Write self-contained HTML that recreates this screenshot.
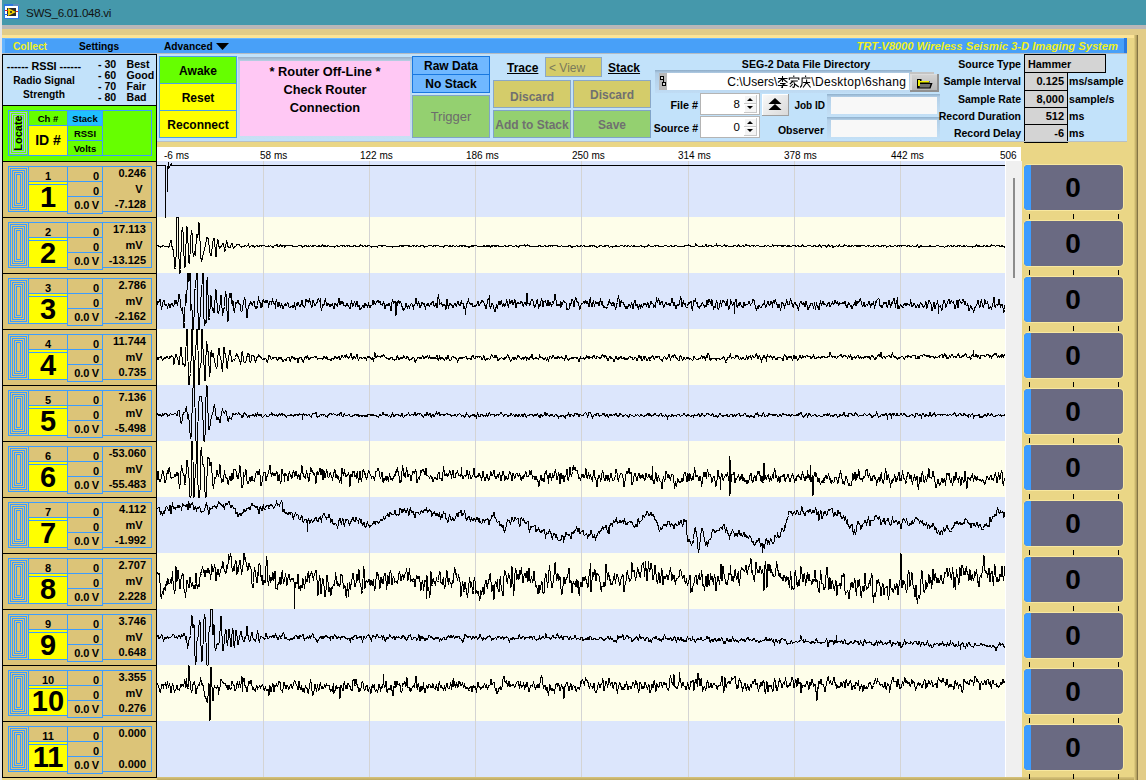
<!DOCTYPE html><html><head><meta charset="utf-8"><style>
html,body{margin:0;padding:0;}
body{width:1146px;height:780px;position:relative;overflow:hidden;font-family:"Liberation Sans", sans-serif;}
body>div,body>svg{position:absolute;}
</style></head><body>
<div style="left:0px;top:0px;width:1146px;height:780px;background:#ead686;"></div>
<div style="left:0px;top:0px;width:2px;height:780px;background:#e6e6e6;"></div>
<div style="left:2px;top:0px;width:1144px;height:25px;background:#4598ab;"></div>
<div style="left:26px;top:2px;width:200px;height:21px;line-height:21px;font-size:11.6px;font-weight:normal;color:#111;text-align:left;white-space:nowrap;letter-spacing:-0.3px;">SWS_6.01.048.vi</div>
<svg style="left:4px;top:4px" width="15" height="15"><rect x="0.5" y="0.5" width="14" height="14" fill="#fff" stroke="#2a78e4"/><rect x="0" y="0" width="15" height="2" fill="#2a78e4"/><path d="M9.5 1h1 M11.5 1h1 M13.5 1h1" stroke="#ffd040"/><rect x="3" y="4" width="9" height="8" fill="#2a2a2a"/><path d="M4 4 L12 8 L4 12 Z" fill="#f0d000"/><circle cx="7" cy="8" r="1" fill="#222"/><path d="M1 6.5 H4 M12 7.5 H14" stroke="#e02020"/><path d="M1 10.5 H4" stroke="#2060e0"/></svg>
<div style="left:2px;top:25px;width:1144px;height:4px;background:#b9b7b8;"></div>
<div style="left:2px;top:29px;width:1144px;height:6px;background:#e2cc88;"></div>
<div style="left:2px;top:35px;width:1132px;height:3px;background:#fce496;"></div>
<div style="left:1134px;top:35px;width:1px;height:745px;background:#dcc87c;"></div>
<div style="left:1135px;top:35px;width:1px;height:745px;background:#c8b46c;"></div>
<div style="left:1136px;top:35px;width:1px;height:745px;background:#b4a060;"></div>
<div style="left:1137px;top:35px;width:1px;height:745px;background:#847444;"></div>
<div style="left:1138px;top:29px;width:8px;height:751px;background:#e2cc88;"></div>
<div style="left:2px;top:38px;width:1125px;height:15px;background:#48a0f8;"></div>
<div style="left:2px;top:38px;width:1125px;height:1px;background:#6cb8ff;"></div>
<div style="left:2px;top:38px;width:3px;height:15px;background:#64b4ff;"></div>
<div style="left:1124px;top:38px;width:3px;height:15px;background:#2a7ae2;"></div>
<div style="left:13px;top:39px;width:60px;height:15px;line-height:15px;font-size:10.2px;font-weight:bold;color:#f0f020;text-align:left;white-space:nowrap;">Collect</div>
<div style="left:79px;top:39px;width:60px;height:15px;line-height:15px;font-size:10.2px;font-weight:bold;color:#000;text-align:left;white-space:nowrap;">Settings</div>
<div style="left:164px;top:39px;width:60px;height:15px;line-height:15px;font-size:10.2px;font-weight:bold;color:#000;text-align:left;white-space:nowrap;">Advanced</div>
<svg style="left:216px;top:43px" width="14" height="8"><path d="M0 0 H13 L6.5 7 Z" fill="#000"/></svg>
<div style="left:700px;top:39px;width:418px;height:15px;line-height:15px;font-size:11.2px;font-weight:bold;color:#f0f020;text-align:right;white-space:nowrap;font-style:italic;">TRT-V8000 Wireless Seismic 3-D Imaging System</div>
<div style="left:157px;top:53px;width:970px;height:88px;background:#c2e2fa;"></div>
<div style="left:157px;top:53px;width:970px;height:1px;background:#b4bcc4;"></div>
<div style="left:2px;top:53px;width:155px;height:1px;background:#b4bcc4;"></div>
<div style="left:2px;top:54px;width:155px;height:107px;background:#000;"></div>
<div style="left:3px;top:55px;width:153px;height:50px;background:#c2e2fa;"></div>
<div style="left:3px;top:106px;width:153px;height:55px;background:#66ff00;"></div>
<div style="left:-6px;top:60px;width:100px;height:13px;line-height:13px;font-size:10.8px;font-weight:bold;color:#000;text-align:center;white-space:nowrap;">------ RSSI ------</div>
<div style="left:-6px;top:74px;width:100px;height:13px;line-height:13px;font-size:10.2px;font-weight:bold;color:#000;text-align:center;white-space:nowrap;">Radio Signal</div>
<div style="left:-6px;top:88px;width:100px;height:13px;line-height:13px;font-size:10.2px;font-weight:bold;color:#000;text-align:center;white-space:nowrap;">Strength</div>
<div style="left:98px;top:58px;width:30px;height:12px;line-height:12px;font-size:10.6px;font-weight:bold;color:#000;text-align:left;white-space:nowrap;">- 30</div>
<div style="left:126.5px;top:58px;width:30px;height:12px;line-height:12px;font-size:10.6px;font-weight:bold;color:#000;text-align:left;white-space:nowrap;">Best</div>
<div style="left:98px;top:69px;width:30px;height:12px;line-height:12px;font-size:10.6px;font-weight:bold;color:#000;text-align:left;white-space:nowrap;">- 60</div>
<div style="left:126.5px;top:69px;width:30px;height:12px;line-height:12px;font-size:10.6px;font-weight:bold;color:#000;text-align:left;white-space:nowrap;">Good</div>
<div style="left:98px;top:80px;width:30px;height:12px;line-height:12px;font-size:10.6px;font-weight:bold;color:#000;text-align:left;white-space:nowrap;">- 70</div>
<div style="left:126.5px;top:80px;width:30px;height:12px;line-height:12px;font-size:10.6px;font-weight:bold;color:#000;text-align:left;white-space:nowrap;">Fair</div>
<div style="left:98px;top:91px;width:30px;height:12px;line-height:12px;font-size:10.6px;font-weight:bold;color:#000;text-align:left;white-space:nowrap;">- 80</div>
<div style="left:126.5px;top:91px;width:30px;height:12px;line-height:12px;font-size:10.6px;font-weight:bold;color:#000;text-align:left;white-space:nowrap;">Bad</div>
<div style="left:8px;top:110px;width:144px;height:46px;background:transparent;box-sizing:border-box;border:1px solid #3c9cff;"></div>
<div style="left:8px;top:110px;width:21px;height:46px;background:#66ff00;box-sizing:border-box;border:1px solid #3c9cff;"></div>
<div style="left:10px;top:112px;width:17px;height:42px;background:transparent;box-sizing:border-box;border:1px solid #a4c4e4;"></div>
<div style="left:12px;top:114px;width:13px;height:38px;background:transparent;box-sizing:border-box;border:1px solid #a4c4e4;"></div>
<div style="left:14px;top:116px;width:9px;height:34px;background:transparent;box-sizing:border-box;border:1px solid #a4c4e4;"></div>
<div style="left:-2px;top:124.5px;width:40px;height:16px;line-height:16px;font-size:11px;font-weight:bold;color:#000;text-align:center;white-space:nowrap;transform:rotate(-90deg);">Locate</div>
<div style="left:28px;top:110px;width:40px;height:16px;background:#66ff00;box-sizing:border-box;border:1px solid #3c9cff;"></div>
<div style="left:28px;top:111px;width:40px;height:16px;line-height:16px;font-size:9.5px;font-weight:bold;color:#000;text-align:center;white-space:nowrap;">Ch #</div>
<div style="left:28px;top:125px;width:40px;height:31px;background:#ffff00;box-sizing:border-box;border:1px solid #3c9cff;"></div>
<div style="left:28px;top:125px;width:40px;height:31px;line-height:31px;font-size:14px;font-weight:bold;color:#000;text-align:center;white-space:nowrap;">ID #</div>
<div style="left:67px;top:110px;width:36px;height:16px;background:#20c0ff;box-sizing:border-box;border:1px solid #3c9cff;"></div>
<div style="left:67px;top:111px;width:36px;height:16px;line-height:16px;font-size:9.5px;font-weight:bold;color:#000;text-align:center;white-space:nowrap;">Stack</div>
<div style="left:67px;top:125px;width:36px;height:16px;background:#66ff00;box-sizing:border-box;border:1px solid #3c9cff;"></div>
<div style="left:67px;top:126px;width:36px;height:16px;line-height:16px;font-size:9.5px;font-weight:bold;color:#000;text-align:center;white-space:nowrap;">RSSI</div>
<div style="left:67px;top:140px;width:36px;height:16px;background:#66ff00;box-sizing:border-box;border:1px solid #3c9cff;"></div>
<div style="left:67px;top:141px;width:36px;height:16px;line-height:16px;font-size:9.5px;font-weight:bold;color:#000;text-align:center;white-space:nowrap;">Volts</div>
<div style="left:159px;top:56px;width:78px;height:28px;background:#66ff00;box-sizing:border-box;border:1px solid #4aa0e8;"></div>
<div style="left:159px;top:57px;width:78px;height:28px;line-height:28px;font-size:12px;font-weight:bold;color:#000;text-align:center;white-space:nowrap;">Awake</div>
<div style="left:159px;top:83px;width:78px;height:28px;background:#ffff00;box-sizing:border-box;border:1px solid #4aa0e8;"></div>
<div style="left:159px;top:84px;width:78px;height:28px;line-height:28px;font-size:12px;font-weight:bold;color:#000;text-align:center;white-space:nowrap;">Reset</div>
<div style="left:159px;top:110px;width:78px;height:28px;background:#ffff00;box-sizing:border-box;border:1px solid #4aa0e8;"></div>
<div style="left:159px;top:111px;width:78px;height:28px;line-height:28px;font-size:12px;font-weight:bold;color:#000;text-align:center;white-space:nowrap;">Reconnect</div>
<div style="left:238px;top:57px;width:174px;height:82px;background:#b4cce0;background:linear-gradient(to bottom,#98b0c8 0,#b8d0e4 4px,#c8e0f4 100%);"></div>
<div style="left:240px;top:61px;width:170px;height:75px;background:#ffc8f4;"></div>
<div style="left:240px;top:63px;width:170px;height:18px;line-height:18px;font-size:12.8px;font-weight:bold;color:#000;text-align:center;white-space:nowrap;">* Router Off-Line *</div>
<div style="left:240px;top:81px;width:170px;height:18px;line-height:18px;font-size:12.8px;font-weight:bold;color:#000;text-align:center;white-space:nowrap;">Check Router</div>
<div style="left:240px;top:99px;width:170px;height:18px;line-height:18px;font-size:12.8px;font-weight:bold;color:#000;text-align:center;white-space:nowrap;">Connection</div>
<div style="left:412px;top:56px;width:78px;height:19px;background:#70b8ff;box-sizing:border-box;border:1px solid #1878e0;"></div>
<div style="left:412px;top:57px;width:78px;height:19px;line-height:19px;font-size:12px;font-weight:bold;color:#000;text-align:center;white-space:nowrap;">Raw Data</div>
<div style="left:412px;top:74px;width:78px;height:19px;background:#70b8ff;box-sizing:border-box;border:1px solid #1878e0;"></div>
<div style="left:412px;top:75px;width:78px;height:19px;line-height:19px;font-size:12px;font-weight:bold;color:#000;text-align:center;white-space:nowrap;">No Stack</div>
<div style="left:412px;top:95px;width:78px;height:43px;background:#94d070;box-sizing:border-box;border:1px solid #80a4c8;"></div>
<div style="left:412px;top:95px;width:78px;height:43px;line-height:43px;font-size:13px;font-weight:normal;color:#6c6c6c;text-align:center;white-space:nowrap;">Trigger</div>
<div style="left:507px;top:59px;width:33px;height:18px;line-height:18px;font-size:12px;font-weight:bold;color:#000;text-align:left;white-space:nowrap;text-decoration:underline;">Trace</div>
<div style="left:545px;top:57px;width:57px;height:20px;background:#d4cc6a;box-sizing:border-box;border:1px solid #8aa8c8;"></div>
<div style="left:549px;top:58px;width:50px;height:20px;line-height:20px;font-size:12px;font-weight:normal;color:#7a7a5a;text-align:left;white-space:nowrap;">&lt; View</div>
<div style="left:608px;top:59px;width:33px;height:18px;line-height:18px;font-size:12px;font-weight:bold;color:#000;text-align:left;white-space:nowrap;text-decoration:underline;">Stack</div>
<div style="left:493px;top:80px;width:78px;height:28px;background:#d4cc6a;box-sizing:border-box;border:1px solid #8aa8c8;"></div>
<div style="left:493px;top:83px;width:78px;height:28px;line-height:28px;font-size:12px;font-weight:bold;color:#707070;text-align:center;white-space:nowrap;">Discard</div>
<div style="left:573px;top:80px;width:78px;height:28px;background:#d4cc6a;box-sizing:border-box;border:1px solid #8aa8c8;"></div>
<div style="left:573px;top:81px;width:78px;height:28px;line-height:28px;font-size:12px;font-weight:bold;color:#707070;text-align:center;white-space:nowrap;">Discard</div>
<div style="left:493px;top:110px;width:78px;height:28px;background:#94d070;box-sizing:border-box;border:1px solid #80a4c8;"></div>
<div style="left:493px;top:111px;width:78px;height:28px;line-height:28px;font-size:12px;font-weight:bold;color:#707070;text-align:center;white-space:nowrap;">Add to Stack</div>
<div style="left:573px;top:110px;width:78px;height:28px;background:#94d070;box-sizing:border-box;border:1px solid #80a4c8;"></div>
<div style="left:573px;top:111px;width:78px;height:28px;line-height:28px;font-size:12px;font-weight:bold;color:#707070;text-align:center;white-space:nowrap;">Save</div>
<div style="left:706px;top:57px;width:200px;height:14px;line-height:14px;font-size:10.6px;font-weight:bold;color:#000;text-align:center;white-space:nowrap;">SEG-2 Data File Directory</div>
<div style="left:655px;top:70px;width:257px;height:23px;background:#a8c4dc;background:linear-gradient(to bottom,#8eacc8 0,#b0cce4 3px,#c0dcf4 100%);"></div>
<div style="left:659px;top:73px;width:8px;height:17px;background:#b8b8b8;"></div>
<svg style="left:659px;top:73px" width="8" height="17"><rect x="1.5" y="3.5" width="3" height="3" fill="#d8d8d8" stroke="#000"/><path d="M4.5 6.5 V9.5" stroke="#000"/><rect x="3.5" y="9.5" width="3" height="3" fill="#d8d8d8" stroke="#000"/></svg>
<div style="left:667px;top:73px;width:242px;height:17px;background:#ffffff;"></div>
<div style="left:667px;top:74px;width:239px;height:17px;line-height:17px;font-size:12px;font-weight:normal;color:#000;text-align:right;white-space:nowrap;">C:\Users\<svg width="34" height="13" style="vertical-align:-2px"><g fill="none" stroke="#000" stroke-width="1.05"><path d="M1 3.5 H10.5 M5.5 1 V7 M5 4 L1 7.5 M6 4 L10.5 7.5 M3 8.5 H8.5 L5.5 10 V12.5 L4 12 M1 10.5 H10.5"/><path transform="translate(11.3,0)" d="M5.5 0.5 V2 M1 5 V3 H10.5 V5 M2.5 6 H9.5 M5 6 L1.5 9 M5.5 7 Q7 10 5.5 12.5 L4 12 M4.5 9 L1.5 12 M6.5 9 L10.5 12"/><path transform="translate(22.6,0)" d="M6 0.5 V2 M2 3 H11 M2.5 3 V8 Q2.5 11 0.5 12.5 M3.5 7.5 H10.5 M7 4.5 V7.5 L3.5 12.5 M7 7.5 L11 12.5"/></g></svg><span style="letter-spacing:0.33px">\Desktop\6shan</span>g</div>
<div style="left:910px;top:72px;width:24px;height:3px;background:#c4c4c4;"></div>
<div style="left:910px;top:74px;width:29px;height:18px;background:#c0c0c0;background:linear-gradient(to bottom,#d4d4d4,#b4b4b4);box-shadow:inset -2px -2px 0 #909090, inset 2px 1px 0 #dcdcdc;"></div>
<svg style="left:917px;top:79px" width="17" height="11"><path d="M0 0 h4.5 v2 h8 v2 h3 l-2 5.5 H0 Z" fill="#000"/><path d="M1 1 h2 v6 h-2 Z M1 2 h11 v1.5 h-11 Z" fill="#f0f000"/><path d="M3 5 H13.5 L12.5 8.5 H2.5 Z" fill="#707070"/></svg>
<div style="left:670px;top:98px;width:28px;height:14px;line-height:14px;font-size:10.8px;font-weight:bold;color:#000;text-align:right;white-space:nowrap;">File #</div>
<div style="left:650px;top:120.5px;width:48px;height:14px;line-height:14px;font-size:10.5px;font-weight:bold;color:#000;text-align:right;white-space:nowrap;">Source #</div>
<div style="left:700px;top:93px;width:60px;height:22px;background:#ffffff;box-sizing:border-box;border:1px solid #b4b4b4;"></div>
<div style="left:700px;top:94px;width:40px;height:21px;line-height:21px;font-size:11.5px;font-weight:normal;color:#000;text-align:right;white-space:nowrap;">8</div>
<div style="left:744px;top:95px;width:13px;height:9px;background:#f4f4f4;box-shadow:inset -1px -1px 0 #c8c8c8, inset 1px 1px 0 #fff;"></div>
<svg style="left:744px;top:95px" width="13" height="9"><path d="M3 6 L6 3 L9 6 Z" fill="#000"/></svg>
<div style="left:744px;top:104px;width:13px;height:9px;background:#f4f4f4;box-shadow:inset -1px -1px 0 #c8c8c8, inset 1px 1px 0 #fff;"></div>
<svg style="left:744px;top:104px" width="13" height="9"><path d="M3 2 L6 5 L9 2 Z" fill="#000"/></svg>
<div style="left:700px;top:116px;width:60px;height:22px;background:#ffffff;box-sizing:border-box;border:1px solid #b4b4b4;"></div>
<div style="left:700px;top:117px;width:40px;height:21px;line-height:21px;font-size:11.5px;font-weight:normal;color:#000;text-align:right;white-space:nowrap;">0</div>
<div style="left:744px;top:118px;width:13px;height:9px;background:#f4f4f4;box-shadow:inset -1px -1px 0 #c8c8c8, inset 1px 1px 0 #fff;"></div>
<svg style="left:744px;top:118px" width="13" height="9"><path d="M3 6 L6 3 L9 6 Z" fill="#000"/></svg>
<div style="left:744px;top:127px;width:13px;height:9px;background:#f4f4f4;box-shadow:inset -1px -1px 0 #c8c8c8, inset 1px 1px 0 #fff;"></div>
<svg style="left:744px;top:127px" width="13" height="9"><path d="M3 2 L6 5 L9 2 Z" fill="#000"/></svg>
<div style="left:762px;top:94px;width:27px;height:22px;background:#e8e8e8;background:linear-gradient(135deg,#fafafa,#d8d8d8);box-shadow:inset -1px -1px 0 #a0a0a0, inset 1px 1px 0 #fff;"></div>
<svg style="left:765px;top:97px" width="20" height="16"><path d="M3.5 7 L10 1 L16.5 7 Z M3.5 13 L10 7 L16.5 13 Z" fill="#000"/></svg>
<div style="left:790px;top:99px;width:35px;height:14px;line-height:14px;font-size:10px;font-weight:bold;color:#000;text-align:right;white-space:nowrap;">Job ID</div>
<div style="left:770px;top:123px;width:54px;height:14px;line-height:14px;font-size:10.5px;font-weight:bold;color:#000;text-align:right;white-space:nowrap;">Observer</div>
<div style="left:827px;top:94px;width:113px;height:22px;background:#a8c4dc;background:linear-gradient(to bottom,#90b0cc 0,#b4d0e8 3px,#c4e0f6 100%);"></div>
<div style="left:831px;top:97px;width:106px;height:17px;background:#f8f8f8;"></div>
<div style="left:827px;top:117px;width:113px;height:22px;background:#a8c4dc;background:linear-gradient(to bottom,#90b0cc 0,#b4d0e8 3px,#c4e0f6 100%);"></div>
<div style="left:831px;top:120px;width:106px;height:17px;background:#f8f8f8;"></div>
<div style="left:900px;top:56px;width:121px;height:16px;line-height:16px;font-size:10.6px;font-weight:bold;color:#000;text-align:right;white-space:nowrap;">Source Type</div>
<div style="left:1024px;top:54px;width:82px;height:19px;background:#d4d4d4;box-sizing:border-box;border:1px solid #000;"></div>
<div style="left:1028px;top:55px;width:78px;height:19px;line-height:19px;font-size:10.8px;font-weight:bold;color:#000;text-align:left;white-space:nowrap;">Hammer</div>
<div style="left:1024px;top:72px;width:44px;height:19px;background:#d4d4d4;box-sizing:border-box;border:1px solid #000;"></div>
<div style="left:900px;top:73px;width:121px;height:17px;line-height:17px;font-size:10.5px;font-weight:bold;color:#000;text-align:right;white-space:nowrap;">Sample Interval</div>
<div style="left:1024px;top:73px;width:40px;height:17px;line-height:17px;font-size:11px;font-weight:bold;color:#000;text-align:right;white-space:nowrap;">0.125</div>
<div style="left:1069px;top:73px;width:60px;height:17px;line-height:17px;font-size:10.6px;font-weight:bold;color:#000;text-align:left;white-space:nowrap;">ms/sample</div>
<div style="left:1024px;top:90px;width:44px;height:19px;background:#d4d4d4;box-sizing:border-box;border:1px solid #000;"></div>
<div style="left:900px;top:91px;width:121px;height:17px;line-height:17px;font-size:10.5px;font-weight:bold;color:#000;text-align:right;white-space:nowrap;">Sample Rate</div>
<div style="left:1024px;top:91px;width:40px;height:17px;line-height:17px;font-size:11px;font-weight:bold;color:#000;text-align:right;white-space:nowrap;">8,000</div>
<div style="left:1069px;top:91px;width:60px;height:17px;line-height:17px;font-size:10.6px;font-weight:bold;color:#000;text-align:left;white-space:nowrap;">sample/s</div>
<div style="left:1024px;top:107px;width:44px;height:19px;background:#d4d4d4;box-sizing:border-box;border:1px solid #000;"></div>
<div style="left:900px;top:108px;width:121px;height:17px;line-height:17px;font-size:10.5px;font-weight:bold;color:#000;text-align:right;white-space:nowrap;">Record Duration</div>
<div style="left:1024px;top:108px;width:40px;height:17px;line-height:17px;font-size:11px;font-weight:bold;color:#000;text-align:right;white-space:nowrap;">512</div>
<div style="left:1069px;top:108px;width:60px;height:17px;line-height:17px;font-size:10.6px;font-weight:bold;color:#000;text-align:left;white-space:nowrap;">ms</div>
<div style="left:1024px;top:124px;width:44px;height:19px;background:#d4d4d4;box-sizing:border-box;border:1px solid #000;"></div>
<div style="left:900px;top:125px;width:121px;height:17px;line-height:17px;font-size:10.5px;font-weight:bold;color:#000;text-align:right;white-space:nowrap;">Record Delay</div>
<div style="left:1024px;top:125px;width:40px;height:17px;line-height:17px;font-size:11px;font-weight:bold;color:#000;text-align:right;white-space:nowrap;">-6</div>
<div style="left:1069px;top:125px;width:60px;height:17px;line-height:17px;font-size:10.6px;font-weight:bold;color:#000;text-align:left;white-space:nowrap;">ms</div>
<div style="left:157px;top:141px;width:970px;height:1px;background:#b8c0c4;"></div>
<div style="left:157px;top:147px;width:864px;height:14px;background:#ffffff;"></div>
<div style="left:157px;top:161px;width:848px;height:56px;background:#dce6fc;"></div>
<div style="left:157px;top:217px;width:848px;height:56px;background:#fefeea;"></div>
<div style="left:157px;top:273px;width:848px;height:56px;background:#dce6fc;"></div>
<div style="left:157px;top:329px;width:848px;height:56px;background:#fefeea;"></div>
<div style="left:157px;top:385px;width:848px;height:56px;background:#dce6fc;"></div>
<div style="left:157px;top:441px;width:848px;height:56px;background:#fefeea;"></div>
<div style="left:157px;top:497px;width:848px;height:56px;background:#dce6fc;"></div>
<div style="left:157px;top:553px;width:848px;height:56px;background:#fefeea;"></div>
<div style="left:157px;top:609px;width:848px;height:56px;background:#dce6fc;"></div>
<div style="left:157px;top:665px;width:848px;height:56px;background:#fefeea;"></div>
<div style="left:157px;top:721px;width:848px;height:56px;background:#dce6fc;"></div>
<div style="left:1005px;top:161px;width:17px;height:618px;background:#f0f0f0;border-left:1px solid #fff;box-sizing:border-box;"></div>
<div style="left:1013px;top:178px;width:2px;height:100px;background:#8c8c8c;"></div>
<div style="left:263px;top:161px;width:1px;height:616px;background:#d4d4d4;"></div>
<div style="left:369px;top:161px;width:1px;height:616px;background:#d4d4d4;"></div>
<div style="left:475px;top:161px;width:1px;height:616px;background:#d4d4d4;"></div>
<div style="left:581px;top:161px;width:1px;height:616px;background:#d4d4d4;"></div>
<div style="left:688px;top:161px;width:1px;height:616px;background:#d4d4d4;"></div>
<div style="left:794px;top:161px;width:1px;height:616px;background:#d4d4d4;"></div>
<div style="left:900px;top:161px;width:1px;height:616px;background:#d4d4d4;"></div>
<div style="left:164px;top:149px;width:60px;height:13px;line-height:13px;font-size:10px;font-weight:normal;color:#000;text-align:left;white-space:nowrap;">-6 ms</div>
<div style="left:260px;top:149px;width:60px;height:13px;line-height:13px;font-size:10px;font-weight:normal;color:#000;text-align:left;white-space:nowrap;">58 ms</div>
<div style="left:360px;top:149px;width:60px;height:13px;line-height:13px;font-size:10px;font-weight:normal;color:#000;text-align:left;white-space:nowrap;">122 ms</div>
<div style="left:466px;top:149px;width:60px;height:13px;line-height:13px;font-size:10px;font-weight:normal;color:#000;text-align:left;white-space:nowrap;">186 ms</div>
<div style="left:572px;top:149px;width:60px;height:13px;line-height:13px;font-size:10px;font-weight:normal;color:#000;text-align:left;white-space:nowrap;">250 ms</div>
<div style="left:678px;top:149px;width:60px;height:13px;line-height:13px;font-size:10px;font-weight:normal;color:#000;text-align:left;white-space:nowrap;">314 ms</div>
<div style="left:784px;top:149px;width:60px;height:13px;line-height:13px;font-size:10px;font-weight:normal;color:#000;text-align:left;white-space:nowrap;">378 ms</div>
<div style="left:891px;top:149px;width:60px;height:13px;line-height:13px;font-size:10px;font-weight:normal;color:#000;text-align:left;white-space:nowrap;">442 ms</div>
<div style="left:1000px;top:149px;width:60px;height:13px;line-height:13px;font-size:10px;font-weight:normal;color:#000;text-align:left;white-space:nowrap;">506</div>
<svg style="left:0;top:0" width="1146" height="780"><path d="M157 165.5 H165.5 V217.5 M167.5 192 V166 M168.5 162 V168.5 L171.5 163.5 L172 165.5 H1005 M178.5 164.5 V165.5" fill="none" stroke="#000" stroke-width="1" shape-rendering="crispEdges"/><path transform="translate(157,0) scale(0.5)" d="M0 492l1-1 1 0 1 0 1 2 1 0 1 0 1 1 1-2 1 0 1 0 1 0 1-1 1 0 1 1 1 0 1 0 1 0 1 0 1 0 1 0 1 1 1-1 1 2 1 0 1-2 1-6 1-6 1 0 1 3 1 10 1 4 1 2 1 4 1 10 1 15 1 9 1-2 1-20 1-37 1-43 1-1 1 0 1 19 1 65 1 28 1 0 1-7 1-34 1-28 1-17 1-6 1 9 1 23 1 26 1 20 1 3 1-18 1-28 1-26 1-10 1 9 1 23 1 25 1 16 1 0 1-16 1-22 1-18 1-9 1 5 1 18 1 21 1 9 1-7 1-5 1 7 1 1 1-21 1-21 1 0 1 7 1-5 1-16 1-9 1 12 1 24 1 23 1 13 1 5 1-2 1-5 1-5 1-4 1-4 1-4 1-4 1-5 1-5 1-6 1-3 1 0 1 2 1 5 1 7 1 9 1 8 1 4 1 1 1-4 1-8 1-8 1-9 1-6 1 0 1 5 1 13 1 15 1 5 1-10 1-16 1-9 1 1 1 7 1 6 1 3 1 0 1-1 1-2 1-1 1-2 1-2 1-1 1 1 1 6 1 7 1 2 1-6 1-9 1-5 1 2 1 5 1 3 1 1 1 0 1 1 1 0 1-1 1-4 1-3 1-1 1 4 1 4 1 2 1 0 1-2 1-1 1-1 1 0 1-2 1-1 1-1 1 0 1 0 1 1 1 2 1 1 1 1 1 1 1 0 1-1 1 0 1 0 1 0 1 0 1 0 1-2 1 0 1 1 1 0 1 0 1-2 1 0 1-2 1 4 1 3 1-1 1-1 1-1 1-1 1 1 1 0 1-1 1 0 1 2 1 1 1 0 1-2 1 0 1-1 1 0 1 1 1 0 1 1 1 0 1-1 1-2 1 0 1 1 1 2 1-1 1-1 1 0 1 0 1 1 1-1 1 1 1 1 1 1 1-1 1 1 1-1 1-1 1-1 1 2 1 0 1-1 1-1 1 1 1 0 1 1 1 2 1 0 1-2 1-1 1-1 1-1 1 1 1 0 1-1 1-1 1 3 1 0 1 1 1 0 1-1 1-1 1-1 1 1 1 1 1 0 1 0 1-1 1 0 1 0 1 3 1-1 1 0 1-2 1 0 1 0 1 0 1 0 1 0 1 0 1 0 1 0 1-1 1 0 1 0 1 1 1 1 1 1 1 0 1 0 1-1 1 0 1 0 1 1 1-1 1 0 1 0 1 0 1-2 1 0 1 0 1 0 1 0 1 1 1 1 1 1 1 1 1-1 1 0 1 0 1-1 1-2 1 0 1 1 1 2 1 1 1-1 1 0 1-1 1 1 1 0 1-1 1-1 1 1 1 1 1 0 1-1 1 1 1-1 1-1 1-1 1 0 1 0 1 2 1 1 1-1 1 0 1 0 1 0 1-1 1 1 1 0 1 0 1 0 1 0 1-1 1-1 1 1 1 1 1 0 1 0 1-1 1 1 1 1 1 0 1 0 1-1 1-1 1 0 1 1 1 1 1 0 1 0 1 1 1-1 1-1 1 0 1 0 1 0 1 1 1 1 1-1 1-1 1 0 1-1 1 0 1 1 1 0 1 0 1 0 1 0 1 0 1-1 1-1 1 0 1 1 1 1 1 0 1-1 1 0 1 1 1 1 1 0 1-1 1-1 1 0 1 1 1 0 1-1 1 0 1 2 1 1 1-1 1-1 1 0 1 1 1 0 1 1 1-1 1-2 1 0 1 0 1 0 1 2 1 0 1-1 1 1 1-1 1 0 1 0 1 0 1-1 1-1 1 1 1 0 1 0 1 1 1 0 1 0 1 0 1-1 1 0 1 1 1 0 1 0 1 0 1 0 1-1 1 0 1-1 1 1 1 1 1 0 1 1 1 1 1-1 1-1 1 0 1 0 1 1 1 0 1 0 1 0 1-1 1 0 1 1 1 1 1-2 1-1 1-1 1 0 1 0 1 0 1 0 1 1 1 2 1-1 1-1 1 0 1-1 1 0 1 0 1 1 1 1 1 0 1 0 1 0 1 0 1 0 1 0 1 0 1 0 1 0 1 0 1 0 1 1 1 1 1 0 1-1 1-1 1 0 1 0 1 0 1 0 1 0 1 0 1 0 1 1 1 0 1 0 1-1 1-1 1 0 1 0 1 1 1 0 1 0 1-1 1 1 1-1 1 0 1 1 1-1 1-1 1 0 1 1 1 0 1 0 1 1 1 1 1-1 1 1 1 0 1-1 1 0 1 0 1-1 1 0 1 1 1 0 1-1 1 1 1 1 1 0 1-1 1-1 1 0 1 1 1 0 1 0 1 1 1 0 1-2 1 0 1 0 1 1 1-1 1 0 1 2 1 0 1 1 1-1 1 0 1 0 1 0 1 0 1-1 1 0 1-1 1 0 1 0 1-1 1 1 1 0 1 0 1 1 1 1 1 0 1-1 1-1 1 0 1 1 1 0 1-1 1 0 1 0 1 0 1-1 1 1 1 1 1 1 1-1 1 0 1 1 1 0 1 1 1-1 1 0 1 1 1-1 1-1 1-1 1 0 1 0 1 0 1 0 1 0 1 1 1 0 1 0 1 0 1-1 1 0 1 2 1 0 1-1 1 0 1-2 1 0 1 2 1 0 1 0 1 0 1 0 1-1 1 1 1 0 1 0 1 1 1 0 1-1 1-1 1 0 1 0 1 0 1 2 1-1 1-1 1 0 1 1 1 0 1-1 1 1 1 0 1 0 1 0 1 0 1 1 1 1 1 1 1 0 1-2 1-1 1 0 1 0 1-1 1 1 1 1 1-1 1-1 1 0 1 0 1 0 1 0 1 0 1 1 1 0 1 1 1 0 1-1 1 0 1 0 1 1 1-1 1 0 1 0 1 0 1 0 1 0 1-1 1 1 1 0 1 0 1 0 1 0 1-1 1 1 1 1 1 0 1-2 1 1 1 2 1 0 1-1 1-1 1-1 1 1 1 0 1-1 1 0 1 2 1 0 1-1 1-1 1 2 1-1 1-1 1 0 1 1 1 1 1-1 1 0 1 1 1 0 1 0 1 0 1 0 1 0 1-1 1 0 1-1 1 0 1 1 1 0 1 0 1 0 1 1 1 0 1-2 1 0 1-1 1 0 1 1 1 0 1 0 1 1 1 1 1 0 1 0 1 0 1-1 1 0 1-1 1 0 1 1 1 0 1 1 1 0 1 1 1 0 1-2 1-1 1 0 1 0 1 0 1 0 1 0 1 0 1 0 1 0 1-1 1 2 1 0 1-1 1 0 1 0 1-1 1 1 1 0 1 0 1 1 1 1 1 0 1-1 1 0 1 0 1 1 1 1 1-1 1-1 1 0 1 0 1 0 1 0 1 0 1 1 1 0 1 0 1-1 1-2 1 0 1 1 1 2 1 1 1-1 1-1 1 1 1 0 1-1 1 0 1-1 1 0 1 1 1 0 1 1 1 0 1 0 1 0 1-1 1-2 1 0 1 1 1 1 1-1 1 0 1 1 1 0 1-1 1 0 1 0 1 0 1 0 1 0 1-1 1 1 1 0 1 1 1 1 1 0 1 0 1-1 1 0 1 0 1 0 1-1 1 1 1 0 1 0 1 1 1 0 1-1 1 0 1 0 1 0 1 0 1 0 1 1 1-1 1 0 1-1 1 0 1 0 1 1 1 0 1 2 1 1 1-2 1 0 1 0 1-1 1 0 1 1 1 0 1-1 1-1 1 0 1 1 1 1 1 0 1 0 1 0 1-1 1 0 1-1 1 0 1 1 1 1 1-1 1-1 1 0 1 1 1 1 1 0 1-1 1 0 1 0 1 0 1 0 1 1 1 0 1-1 1-1 1 1 1 0 1-1 1 0 1 1 1 0 1-1 1 0 1 1 1 1 1 0 1 0 1 1 1 0 1 0 1 0 1-1 1 0 1-1 1-1 1 0 1-1 1 1 1 1 1 1 1 0 1-1 1 0 1 0 1-1 1 1 1 0 1-1 1-1 1 0 1 1 1 2 1 1 1 0 1 0 1-1 1 0 1 0 1 0 1 1 1 0 1-1 1-1 1 0 1 0 1 0 1-1 1 1 1 1 1 0 1-1 1 0 1 0 1 0 1 0 1-1 1 0 1 0 1 1 1-1 1 1 1 1 1 1 1-2 1-2 1 0 1 2 1 1 1 0 1-1 1-1 1 0 1 1 1 1 1 0 1-1 1 0 1-1 1 1 1 1 1 0 1-1 1-1 1 1 1 0 1 1 1-1 1 0 1 1 1 0 1-1 1 0 1 1 1-1 1 0 1-1 1-1 1 1 1 2 1 0 1 0 1 0 1 1 1 0 1-1 1 0 1-1 1 0 1 0 1 0 1-1 1-1 1 1 1 0 1 1 1 1 1-1 1 0 1 0 1 0 1 1 1 0 1-1 1-1 1 0 1 1 1-1 1 0 1-1 1 0 1 1 1 1 1 0 1 0 1 0 1 1 1 0 1-1 1 0 1 0 1 0 1 0 1 0 1-1 1-1 1 0 1 0 1 0 1 2 1 0 1 0 1 0 1 0 1 0 1 0 1-2 1 0 1 2 1 1 1-1 1 0 1 1 1 0 1-1 1-1 1 0 1 0 1 0 1 1 1 1 1 0 1 0 1 0 1 0 1 0 1-1 1 0 1 1 1 0 1-1 1 0 1 1 1 1 1-1 1-2 1 0 1-1 1 0 1 1 1 0 1 0 1-1 1 1 1 0 1 0 1 1 1 0 1 0 1 0 1 0 1 0 1 0 1 0 1 0 1 0 1-3 1 2 1-1 1 1 1 0 1 1 1 0 1 1 1 0 1-1 1 0 1 0 1 0 1 1 1-2 1 1 1 1 1 0 1 0 1-1 1-1 1-2 1 2 1 2 1 0 1-1 1 0 1-1 1 0 1-1 1 0 1 1 1 1 1 1 1 0 1-1 1 0 1 0 1-1 1-1 1 1 1 1 1-3 1 3 1 0 1-1 1 0 1 1 1-1 1 0 1 0 1 1 1 0 1 0 1 0 1 0 1-1 1 0 1-1 1 1 1 1 1 0 1 0 1-1 1 0 1 1 1 0 1 1 1 0 1 1 1-1 1-1 1 0 1 1 1 0 1-1 1 0 1-1 1 0 1 0 1 0 1 1 1 0 1 0 1 0 1-1 1-1 1 1 1 1 1 1 1 0 1 0 1-1 1 0 1-1 1 0 1 0 1 2 1 0 1-1 1-2 1-1 1 1 1 1 1 0 1-1 1 1 1 0 1 1 1 0 1 0 1 0 1-1 1-1 1 1 1 1 1 0 1-1 1 0 1 1 1 0 1 0 1-1 1 0 1 0 1 0 1 0 1 1 1 0 1 0 1 0 1 0 1 1 1 1 1-1 1 0 1 0 1 0 1-1 1-1 1 0 1 1 1 0 1 0 1-1 1 0 1 0 1 1 1 0 1 0 1 0 1 0 1 0 1 0 1-2 1 2 1 0 1-1 1 0 1-1 1 1 1 0 1 0 1 0 1 1 1 0 1-1 1 0 1 0 1-1 1 1 1 0 1 1 1 0 1 0 1-1 1 1 1 0 1-1 1 0 1 0 1 1 1 1 1-1 1 0 1-1 1 1 1 1 1-1 1 1 1 0 1 0 1 0 1-1 1-1 1 0 1-1 1 0 1 1 1 0 1 2 1 0 1-1 1 0 1-1 1 0 1 1 1 1 1 0 1 0 1 0 1 0 1 0 1-2 1-1 1 1 1 1 1 1 1 0 1 0 1 0 1 0 1-1 1 0 1-1 1 0 1 0 1 0 1 0 1 1 1-1 1 1 1 0 1 0 1 0 1 1 1-1 1-1 1-1 1 0 1 2 1 1 1-1 1 0 1 0 1 1 1 0 1-2 1-1 1 1 1 2 1 1 1 0 1-2 1-1 1 0 1 0 1 0 1 0 1 0 1 1 1 1 1 1 1-1 1-1 1-1 1-1 1 1 1 1 1 1 1 0 1-1 1-1 1 0 1 0 1 4 1-2 1 0 1 0 1 0 1 0 1-1 1-1 1 1 1 0 1 1 1 0 1-2 1-1 1 2 1 1 1 0 1 0 1 1 1-1 1-1 1 0 1-1 1-1 1 1 1 0 1-1 1 1 1 1 1 0 1 0 1 0 1-1 1 1 1 0 1 1 1 0 1-1 1-1 1 0 1 1 1 0 1 0 1-1 1 0 1 0 1 0 1 1 1 1 1-2 1 1 1 0 1-1 1 1 1 1 1-1 1-1 1 0 1-1 1 0 1 1 1 0 1 0 1 0 1 1 1 0 1 1 1 0 1-1 1-1 1 0 1 1 1-1 1 0 1 1 1 1 1-1 1 0 1 1 1 0 1 0 1-1 1-1 1 0 1 1 1 1 1-1 1-1 1-1 1 1 1 0 1 1 1 1 1 0 1 0 1 0 1 0 1 0 1-2 1 0 1 0 1 1 1 0 1-1 1 0 1 0 1 1 1 2 1-2 1 1 1 0 1 0 1-1 1-1 1 0 1 2 1 0 1-1 1 0 1 0 1 0 1 0 1 0 1-1 1 0 1 0 1 1 1 0 1 0 1 0 1-1 1 0 1 1 1 0 1-1 1 0 1 1 1 0 1-1 1 0 1 0 1 0 1 0 1 0 1 0 1 0 1 1 1 0 1 1 1-1 1-1 1 0 1 0 1 0 1 2 1 0 1 0 1-1 1 0 1-1 1 1 1 0 1 1 1 0 1 0 1-1 1 0 1 0 1-1 1-1 1 2 1 2 1 1 1-1 1-1 1-2 1 0 1 1 1 0 1 0 1 0 1 0 1 0 1 0 1 0 1 1 1 0 1 0 1 0 1 0 1 0 1-1 1 0 1 0 1-1 1 1 1 1 1 0 1-1 1 0 1 0 1 1 1-1 1 0 1 1 1 0 1-1 1-1 1-1 1 1 1 0 1 0 1 1 1 1 1 0 1 0 1-1 1 1 1 1 1-1 1-1 1 0 1 2 1 0 1 0 1-1 1-1 1 0 1 0 1 0 1-1 1 0 1 1 1 1 1-1 1-1 1 0 1 2 1-1 1 0 1 2 1-2 1-2 1 1 1 1 1 0 1 0 1 0 1 0 1 0 1-1 1 0 1 0 1 1 1 0 1-1 1 1 1 0 1 0 1 0 1 0 1 0 1-1 1 1 1 0 1 0 1 0 1-1 1 1 1 0 1 0 1 0 1 0 1 0 1 0 1 0 1 1 1 0 1 0 1 1 1 0 1-1 1-1 1 0 1 1 1 0 1-2 1-1 1 1 1 1 1 0 1 0 1-1 1 1 1 0 1 1 1 0 1 0 1-1 1 1 1 0 1-1 1-2 1 1 1 1 1 0 1 0 1 0 1-1 1 1 1 0 1 0 1 0 1 1 1 0 1-1 1-1 1-1 1 1 1 0 1 0 1 0 1 0 1 0 1 1 1 0 1 0 1-1 1 0 1 0 1 0 1-1 1 0 1 2 1 0 1 0 1 0 1 0 1-1 1 1 1 1 1 0 1 1 1 0 1-2 M0 611l1-8 1 0 1 2 1-1 1-3 1-3 1 4 1 9 1 9 1-5 1-8 1-3 1-2 1-1 1 4 1 4 1 1 1 1 1-1 1 2 1 3 1-3 1-5 1 1 1 6 1 2 1-5 1-2 1 0 1-3 1 1 1 5 1 1 1-3 1-5 1-5 1 5 1-2 1-1 1 6 1 4 1-7 1-11 1-6 1 1 1 8 1 9 1 10 1 5 1-4 1-3 1 13 1 20 1 9 1-11 1-31 1-25 1 7 1 9 1-24 1-35 1 0 1 13 1 4 1-17 1 0 1 48 1 27 1-13 1 11 1 39 1 0 1 0 1-23 1-47 1-9 1-2 1-16 1-15 1 0 1 26 1 53 1 33 1 0 1 0 1-23 1-33 1-8 1-6 1-18 1-24 1 0 1 39 1 53 1 13 1-11 1 4 1 3 1-38 1-49 1-5 1 34 1 37 1 14 1-5 1-16 1-19 1-9 1 8 1 14 1 8 1-4 1 1 1 7 1-4 1-21 1-17 1-4 1 8 1 19 1 15 1 4 1 1 1-3 1-7 1-6 1-10 1-10 1 4 1 22 1 16 1-5 1-10 1 1 1-5 1-18 1-12 1 4 1 14 1 20 1 20 1 2 1-22 1-25 1-10 1 6 1 4 1-9 1 3 1 17 1 2 1-8 1 7 1 14 1 3 1-8 1-8 1-4 1 2 1 0 1-4 1-2 1 3 1 3 1 1 1 0 1 8 1 6 1 1 1 0 1-4 1-8 1-7 1-4 1-4 1 2 1 7 1 10 1 14 1 6 1-3 1-13 1-9 1 0 1 1 1-4 1-4 1 1 1 4 1 1 1 1 1-4 1-4 1 0 1 4 1 7 1 2 1-2 1 2 1 2 1-6 1-8 1-10 1 7 1 5 1 0 1 5 1 6 1-10 1 8 1-9 1-4 1-1 1 3 1 1 1-1 1-1 1 3 1 0 1-4 1 1 1 4 1 7 1-2 1-9 1 0 1 1 1 0 1 3 1-3 1-3 1 3 1 4 1-1 1 0 1 4 1 8 1-15 1-2 1 3 1 4 1 6 1-2 1-7 1 0 1 6 1 4 1-4 1-2 1 2 1 4 1 3 1-4 1-2 1-1 1-3 1-1 1 5 1-1 1-3 1-3 1 1 1 5 1 3 1 1 1 1 1-2 1-2 1 1 1 0 1-1 1 3 1 0 1-4 1-3 1 5 1 3 1-4 1-3 1 2 1-1 1-6 1 3 1 3 1 0 1 4 1-1 1-4 1-4 1-4 1 4 1 6 1 0 1 3 1 0 1-2 1-6 1-7 1 2 1 3 1-3 1 0 1 3 1-2 1-3 1 4 1 6 1 1 1 4 1 1 1-7 1-8 1 0 1 6 1 5 1 1 1-2 1-2 1-1 1-2 1-3 1-4 1-1 1 3 1 0 1 4 1-8 1 20 1 6 1-5 1-7 1 1 1-1 1-2 1 0 1-8 1-4 1 7 1 6 1 2 1-4 1-1 1 3 1-1 1 2 1 4 1-3 1-2 1 1 1 0 1-2 1 3 1 5 1 2 1-8 1-4 1 2 1 0 1 1 1 2 1 1 1-5 1-6 1-5 1 6 1 8 1-4 1-4 1 1 1 4 1-3 1 1 1 4 1 3 1-1 1 0 1 1 1 1 1-5 1-2 1 2 1 3 1 0 1 3 1 2 1 1 1-3 1-8 1-5 1 6 1 5 1 0 1-2 1-4 1-2 1 2 1 6 1-2 1-6 1-2 1 6 1 6 1-2 1-2 1 6 1 3 1-1 1-1 1-1 1-2 1-2 1-2 1 4 1 2 1-3 1-7 1 3 1 3 1-2 1 1 1 2 1-2 1-4 1 2 1 6 1 1 1-4 1-2 1 1 1-1 1-7 1-2 1 2 1 6 1-6 1 4 1 1 1-2 1-1 1-2 1 0 1-3 1 1 1 5 1-1 1-2 1 2 1 4 1 0 1 1 1 1 1-5 1-2 1 3 1 7 1 3 1-1 1-5 1-1 1 1 1-1 1 2 1-1 1-4 1 0 1 5 1 9 1 1 1-9 1-9 1-5 1 4 1 3 1-1 1 0 1-3 1 2 1 27 1-26 1 6 1-1 1-8 1-1 1 5 1 0 1-4 1 2 1 2 1 3 1 4 1 3 1 4 1 0 1-3 1 1 1-1 1-5 1-5 1 3 1 3 1 2 1-2 1-1 1 2 1 2 1-4 1-4 1 0 1-1 1 1 1 1 1 4 1 3 1-5 1-3 1 0 1-1 1-11 1 7 1 4 1 3 1-2 1-4 1 1 1 6 1 5 1-3 1-2 1-3 1-4 1 0 1 3 1 1 1-2 1 0 1 8 1 3 1-5 1-2 1 1 1-2 1-2 1 4 1 1 1 1 1-3 1-3 1 1 1 1 1-4 1-2 1-1 1 1 1 8 1 2 1-1 1-1 1-4 1 3 1 6 1-6 1-16 1-6 1 10 1 10 1 0 1-1 1 1 1-2 1 3 1 4 1-1 1-2 1-2 1 0 1 3 1 7 1 1 1-13 1-8 1 4 1 9 1 4 1-2 1-7 1 0 1 3 1-1 1 2 1 1 1 2 1 2 1-1 1-3 1-4 1 0 1 2 1 3 1 1 1-5 1-5 1 0 1 3 1 3 1 0 1 3 1-1 1-6 1-2 1 4 1 0 1-1 1 7 1 5 1-3 1 2 1 12 1-12 1-9 1-2 1 0 1-4 1-3 1 5 1 3 1 0 1 2 1 1 1-3 1-1 1 5 1 3 1-1 1 1 1-3 1-1 1 2 1-2 1 0 1-2 1-2 1-4 1 2 1 7 1 0 1-3 1-1 1-2 1-4 1-1 1 2 1 0 1 1 1 3 1 1 1 4 1 6 1 1 1-2 1-7 1-6 1-4 1-1 1-1 1-7 1 23 1 5 1-4 1-6 1-1 1 0 1 3 1 2 1 6 1 5 1 0 1-2 1-7 1-3 1 5 1 1 1-7 1-6 1-2 1 4 1 4 1-2 1-5 1-1 1 6 1 5 1-1 1-4 1-1 1 5 1-1 1-2 1-3 1-5 1 2 1 5 1 4 1 3 1-6 1-8 1 2 1 4 1-1 1-6 1 0 1 7 1 2 1-3 1-2 1 1 1-6 1 6 1 10 1-3 1-5 1-1 1 2 1-2 1 1 1 0 1-1 1 0 1-4 1 0 1 3 1 2 1 4 1 1 1-4 1-4 1 0 1 3 1 3 1 1 1-25 1 21 1-1 1 1 1-1 1 3 1 2 1-5 1-4 1-3 1 0 1 0 1 3 1 3 1 6 1 4 1-1 1-2 1-3 1-4 1-5 1-1 1 9 1 7 1-2 1-2 1 2 1-5 1-6 1-3 1 2 1 8 1 5 1-5 1-6 1-1 1 0 1-1 1 5 1 5 1 1 1-4 1-7 1 1 1 9 1 0 1-6 1 1 1 3 1 2 1-2 1-2 1-4 1 5 1-5 1-10 1-4 1 5 1 5 1 8 1 4 1-1 1-2 1 2 1 2 1-2 1 2 1 2 1-11 1 11 1-4 1-2 1-4 1-3 1 1 1 3 1-1 1 0 1 2 1 8 1 5 1-2 1 1 1 1 1-1 1-8 1-4 1 4 1-2 1-6 1-3 1 0 1 3 1 4 1 7 1-4 1-9 1-4 1 1 1 1 1 5 1 2 1-1 1 2 1 6 1 6 1 0 1-4 1-3 1-4 1-1 1 0 1 0 1-4 1 0 1 4 1 1 1-5 1 1 1 4 1-4 1 2 1 2 1 3 1 4 1-4 1-11 1-2 1 9 1 7 1 0 1-2 1-6 1-2 1 5 1 3 1-3 1-4 1 1 1 2 1 1 1-2 1-2 1 3 1 4 1-2 1-6 1-3 1 4 1 3 1-5 1 1 1 8 1 3 1-2 1 1 1 2 1 0 1-1 1 2 1 0 1-3 1-4 1-2 1-5 1-2 1 5 1 1 1 1 1 1 1 4 1-3 1-4 1 3 1 3 1-2 1 5 1 6 1-4 1-6 1-3 1-2 1-9 1-5 1 6 1 8 1 8 1-3 1-7 1-1 1 4 1-1 1-1 1 3 1 2 1 1 1 3 1 4 1-1 1-4 1 5 1 0 1-4 1-4 1 0 1 2 1 1 1 2 1-3 1-5 1 2 1 4 1 6 1-10 1-2 1-2 1-3 1 3 1 7 1-1 1-2 1 1 1 7 1 2 1-5 1-3 1 1 1 5 1-1 1-4 1 2 1 1 1-2 1-2 1-4 1 0 1 3 1-1 1 1 1 5 1-4 1-5 1 1 1 6 1 3 1-2 1-3 1-6 1-1 1 3 1 2 1-1 1 1 1 7 1-3 1-1 1 3 1 0 1-9 1-10 1 4 1 7 1-3 1-5 1 1 1 10 1 1 1-4 1-1 1 0 1-2 1 2 1 5 1 4 1 1 1-5 1-2 1-1 1-3 1 0 1 5 1 0 1 0 1 0 1-2 1 3 1 1 1-1 1-3 1-6 1-4 1 3 1 5 1 5 1 0 1-3 1 4 1 5 1 1 1-3 1-3 1-1 1-2 1 2 1-1 1-3 1-6 1-5 1 2 1 8 1 9 1-1 1-9 1-2 1 6 1 1 1-3 1 4 1 4 1 1 1 0 1-2 1-4 1-4 1-1 1 2 1 1 1-4 1-1 1 8 1 7 1 2 1-6 1-10 1-2 1 2 1-1 1-3 1 5 1 2 1-1 1 4 1 4 1 1 1 2 1 0 1-3 1-2 1-1 1 1 1-4 1-1 1 2 1 0 1 3 1 2 1-2 1 0 1 2 1-4 1-8 1 2 1 7 1-3 1-9 1 0 1 5 1 2 1 3 1 2 1-11 1 8 1 5 1 4 1-3 1 2 1 1 1-3 1-6 1-5 1 2 1 8 1 5 1 1 1-1 1-4 1-7 1-3 1 4 1 3 1-4 1-5 1-1 1 0 1 3 1 0 1 3 1 4 1 2 1-1 1-9 1-2 1 11 1 8 1-1 1-4 1-3 1-12 1 3 1 2 1 4 1 2 1 1 1-6 1 1 1 21 1-22 1-6 1 0 1 6 1 8 1 1 1-3 1-2 1 2 1-3 1-4 1 1 1 5 1 3 1 0 1 2 1 1 1-9 1-3 1 6 1 2 1-2 1-1 1 0 1 0 1 0 1-1 1-5 1 0 1 3 1 2 1 2 1-2 1-1 1-1 1-3 1-5 1 0 1 3 1 4 1 5 1 4 1 3 1 3 1-2 1-3 1 3 1-2 1-5 1 1 1 2 1 0 1 1 1-1 1-2 1-2 1-1 1 0 1-2 1-3 1 5 1 6 1-1 1-3 1-2 1-5 1-1 1 2 1 4 1 1 1-1 1-2 1-5 1 0 1 6 1 7 1-11 1-4 1 5 1 1 1-5 1-1 1 3 1 5 1 1 1 0 1 6 1-3 1-3 1 2 1 5 1 5 1-4 1-8 1-4 1 0 1 2 1 2 1 2 1 3 1-3 1-1 1-3 1-7 1 2 1 6 1 2 1-1 1 0 1-3 1-3 1-5 1 2 1 7 1-1 1 1 1 7 1 0 1-6 1-3 1 0 1 0 1 4 1 1 1 1 1 3 1 4 1 3 1-6 1-8 1-1 1-4 1 0 1 4 1 0 1 2 1 2 1-4 1-1 1 5 1 4 1-4 1-8 1 1 1 7 1 8 1 1 1-2 1-2 1-4 1 0 1-2 1-3 1 1 1 1 1-1 1 5 1 3 1-2 1-5 1 3 1 5 1-3 1-5 1 3 1 3 1-1 1 3 1 4 1-7 1-7 1-3 1 4 1 5 1-4 1-6 1 0 1 5 1 3 1-2 1 1 1 0 1 1 1 2 1-1 1-3 1-1 1 0 1-2 1 3 1 5 1 0 1-3 1-2 1-1 1-2 1 2 1 2 1-1 1-5 1-3 1 0 1 5 1 2 1-1 1-2 1 3 1 4 1-1 1-4 1 2 1-1 1-1 1 1 1 0 1-2 1 0 1 2 1 1 1-3 1-2 1 2 1 6 1 3 1 0 1 0 1-5 1-4 1 1 1 0 1 4 1 2 1-2 1 3 1 5 1-3 1-3 1-1 1-2 1-1 1-4 1-2 1 10 1-8 1-1 1 4 1-1 1-3 1 0 1-2 1-2 1-1 1 4 1 5 1 3 1 2 1 0 1-4 1-3 1 4 1 5 1-2 1-2 1-1 1 1 1 0 1-2 1-3 1-2 1 1 1 5 1 5 1-1 1-4 1-3 1 3 1-1 1-3 1 5 1 5 1-2 1-8 1-3 1 2 1-4 1-2 1 0 1-1 1 0 1 8 1 7 1 1 1-2 1 0 1 4 1 0 1-4 1-7 1 0 1 0 1 3 1 0 1-2 1 4 1 5 1 0 1-4 1-6 1-3 1 1 1 7 1 5 1-2 1-5 1-3 1 2 1-3 1-7 1 0 1 5 1 6 1 5 1-3 1-5 1 3 1-13 1 24 1-7 1 4 1 1 1-3 1-4 1 1 1 1 1 2 1 1 1 2 1-3 1-4 1-2 1 0 1 2 1 2 1 0 1-5 1 0 1 4 1-2 1 0 1 4 1-4 1-9 1 4 1 8 1 2 1-2 1 1 1-4 1-2 1 2 1 2 1 4 1 1 1-2 1 0 1-4 1 1 1 5 1 0 1-3 1-4 1-2 1 1 1 1 1 0 1 2 1 4 1 1 1-2 1 0 1-2 1-8 1 1 1 10 1 3 1-5 1-4 1-6 1-1 1 2 1 1 1 3 1 1 1 5 1 8 1-1 1-6 1-4 1-5 1 0 1 12 1-4 1-3 1-1 1-2 1-3 1 4 1 20 1-15 1-1 1 0 1-1 1 5 1 5 1 0 1-5 1-8 1-5 1-2 1 0 1 4 1 8 1 2 1-5 1-2 1-4 1-2 1-3 1 0 1 5 1 3 1-2 1-2 1-1 1 2 1 1 1 0 1-1 1 4 1 5 1 4 1-2 1-5 1-8 1-2 1 7 1 9 1-4 1-12 1-1 1 3 1 1 1 3 1 1 1-2 1-2 1-4 1 0 1 4 1 3 1-3 1 3 1 4 1 1 1-1 1-2 1 3 1 7 1 3 1-2 1-3 1-4 1 1 1 4 1 0 1 1 1 2 1 4 1-2 1-7 1 1 1-1 1-3 1-2 1-2 1-5 1-2 1 3 1 6 1 4 1 0 1-4 1-7 1-2 1 5 1 4 1 3 1 1 1-4 1-7 1-4 1 6 1 2 1-1 1 0 1-2 1 4 1 9 1 1 1-2 1-1 1-1 1 2 1 2 1-3 1-4 1-4 1-6 1-7 1 5 1 14 1 3 1-6 1-1 1 0 1 0 1 2 1-6 1-7 1 0 1 11 1 5 1-1 1-5 1 0 1 2 1 5 1 8 1 2 1-6 1-9 M0 715l1 2 1 3 1-3 1-3 1 0 1 0 1 0 1-1 1 2 1 3 1 2 1-1 1-3 1 0 1 1 1-2 1 1 1-1 1-2 1 0 1 1 1 2 1 1 1 0 1-3 1-1 1 1 1 0 1-2 1 1 1 0 1 1 1 5 1 10 1-7 1-5 1-7 1-2 1 2 1 4 1 3 1 3 1 6 1 3 1-4 1-12 1-13 1-5 1 4 1 14 1 14 1 2 1-1 1 1 1 3 1 0 1-10 1-28 1-33 1-3 1 15 1 49 1 40 1 8 1-8 1-10 1-5 1-24 1-47 1-18 1 0 1 53 1 59 1 0 1-14 1-36 1-20 1-9 1-14 1-19 1 1 1 41 1 60 1 10 1-2 1-31 1-6 1-4 1-29 1-40 1 0 1 40 1 29 1 2 1 10 1 23 1-9 1-42 1-28 1 5 1 12 1 3 1 6 1 23 1 21 1-5 1-24 1-20 1-2 1 11 1-4 1-3 1 5 1 4 1 7 1 4 1 4 1 4 1 2 1-2 1-9 1-14 1-9 1-5 1 4 1 11 1 7 1 1 1 5 1 13 1 5 1-16 1-21 1-11 1 3 1 9 1 4 1 5 1 9 1 10 1 1 1-14 1-12 1 0 1-1 1-8 1 0 1 10 1 10 1 3 1-2 1-2 1-2 1 0 1 2 1-2 1-3 1-4 1-3 1 1 1 3 1 1 1 0 1 5 1 3 1 2 1 4 1-2 1-11 1-10 1-1 1 8 1 9 1 4 1 1 1 0 1-1 1-1 1-4 1-6 1-3 1 3 1-2 1-4 1 8 1 8 1 1 1-2 1-5 1-6 1-1 1 0 1 1 1 2 1 3 1 5 1 3 1-1 1-4 1-4 1-1 1-2 1-2 1 3 1-2 1 1 1 2 1 0 1 1 1 3 1 1 1-1 1 0 1-1 1 2 1-1 1-1 1 1 1 2 1 4 1 1 1-4 1-6 1-4 1 0 1 2 1 2 1 3 1 1 1 0 1-4 1-1 1 2 1 0 1-1 1 1 1-1 1-1 1 1 1 4 1 1 1-1 1-2 1-2 1 1 1 1 1-1 1-2 1 2 1 3 1 3 1 1 1-1 1-2 1-2 1 0 1 1 1 2 1-2 1-3 1-1 1 1 1-1 1 0 1 2 1 5 1 0 1-4 1-1 1-5 1 2 1 2 1 0 1-1 1 3 1 2 1-2 1-1 1-1 1 0 1 2 1 8 1-9 1 0 1 0 1-2 1-1 1 0 1 1 1 4 1 3 1 2 1 0 1-3 1-4 1-2 1-2 1 0 1 3 1-1 1-2 1 2 1 4 1 0 1-1 1-1 1-1 1-2 1 1 1-1 1 0 1 1 1-1 1 0 1-1 1 0 1 1 1 1 1-1 1 2 1 2 1-2 1 0 1 1 1-1 1 0 1 0 1 1 1-1 1 0 1 2 1-1 1-2 1-2 1 1 1 1 1 2 1 0 1-3 1 1 1 3 1 0 1 1 1 1 1-1 1-1 1 1 1 2 1-2 1-3 1 0 1 0 1 2 1 0 1-2 1-3 1 0 1 2 1 1 1 0 1 0 1-1 1-2 1 0 1 2 1 4 1-1 1-2 1-2 1-4 1 2 1 2 1 0 1 0 1-2 1 2 1 1 1-4 1-1 1 3 1 2 1 0 1 1 1-1 1-2 1-1 1-2 1-3 1 2 1 6 1 3 1 0 1-4 1-1 1 2 1 1 1 0 1-1 1-4 1-2 1 4 1 5 1 2 1-1 1-4 1-1 1 0 1 1 1 2 1 1 1-1 1-1 1-1 1-1 1 2 1 0 1-1 1 2 1 2 1-3 1-3 1 0 1 1 1-1 1 1 1 1 1 1 1 0 1 2 1 0 1-2 1 3 1 2 1-4 1-2 1-10 1 9 1 1 1 0 1-2 1-1 1 1 1 0 1 0 1 0 1 0 1 1 1-1 1-2 1 1 1 0 1-1 1-1 1 1 1 2 1 1 1 0 1 1 1 0 1 2 1 0 1-1 1 3 1 1 1-2 1-2 1 0 1-1 1 0 1 0 1 3 1 1 1 0 1 1 1 0 1-2 1 0 1 2 1-2 1-6 1-1 1 4 1 3 1 1 1-2 1 0 1-1 1-1 1 1 1 0 1 0 1-1 1-3 1 1 1 2 1 1 1 1 1 0 1-2 1-2 1 1 1 1 1 2 1 2 1 1 1 0 1-1 1-1 1 0 1-1 1-2 1-1 1 1 1 1 1 3 1 4 1 1 1-3 1-3 1 0 1-1 1-2 1 0 1 0 1 1 1 1 1-1 1-1 1 1 1-2 1-2 1 1 1 3 1 1 1-1 1-1 1-1 1 1 1-2 1 0 1-1 1 2 1 2 1-1 1-2 1 2 1 1 1 1 1 0 1-2 1 1 1 1 1-1 1-1 1 1 1-1 1 0 1 2 1-2 1-4 1 3 1 6 1 1 1-4 1-4 1 2 1 3 1 0 1-3 1 0 1 2 1 0 1 1 1 1 1 1 1-2 1-3 1-1 1 4 1 1 1-4 1-4 1 2 1 5 1 3 1 0 1-1 1 0 1-1 1-5 1-2 1 0 1 2 1 1 1 0 1-1 1 1 1 2 1 2 1 1 1 3 1-2 1-4 1 1 1-1 1-3 1 2 1 1 1-1 1-1 1 1 1 0 1-1 1-1 1 0 1 0 1-1 1 0 1 4 1 1 1 0 1-1 1 0 1 1 1-1 1 0 1 2 1 0 1-3 1-3 1-1 1-1 1 2 1 3 1 0 1 1 1-3 1-1 1 0 1 1 1 1 1-2 1 0 1-1 1 2 1 0 1-1 1 1 1 2 1 3 1 0 1-3 1-4 1 1 1 4 1 3 1 0 1-1 1-2 1 0 1 1 1-2 1 1 1 1 1 1 1 0 1-4 1-3 1-2 1 1 1 2 1 1 1 1 1 0 1-2 1-2 1 3 1 1 1-2 1 2 1 5 1 1 1-1 1-1 1-2 1-1 1 0 1 0 1-1 1 1 1 1 1 0 1 1 1 1 1-3 1-1 1 1 1-1 1-1 1-2 1-3 1 1 1 3 1 2 1 3 1 2 1 2 1 0 1-2 1-2 1-1 1-2 1 2 1 2 1-1 1-4 1 0 1 4 1 1 1-2 1-5 1-1 1 2 1 0 1 2 1 1 1 1 1 0 1 1 1 0 1-2 1-1 1 3 1 0 1-1 1-2 1-1 1 1 1 3 1-4 1 3 1 0 1 1 1 2 1-2 1-4 1-1 1 2 1-3 1-3 1 4 1 4 1 1 1-1 1-1 1 0 1 0 1-1 1 1 1 0 1 0 1 2 1 1 1-3 1-5 1 2 1 1 1 0 1 1 1 0 1 2 1 1 1-1 1 2 1 0 1-3 1-1 1 3 1 2 1-1 1-2 1 3 1 2 1-3 1-4 1-3 1 0 1 2 1 2 1 0 1-3 1-2 1 1 1 2 1 2 1-1 1 2 1 0 1-1 1 1 1-2 1-2 1 0 1 3 1 0 1-2 1 1 1 0 1-1 1 1 1 1 1 0 1 1 1 0 1 3 1-1 1-5 1-3 1 2 1 3 1 2 1 2 1 1 1-2 1-2 1-1 1 0 1 2 1-1 1-2 1 1 1 1 1 0 1-2 1-1 1 0 1 0 1 1 1 1 1-2 1 0 1 4 1 4 1 2 1-2 1-5 1-2 1 2 1 0 1-1 1 0 1 1 1-1 1 1 1 1 1-1 1 0 1-2 1-3 1 1 1 1 1 1 1 1 1-3 1 4 1-1 1-1 1-1 1 0 1 1 1 1 1-3 1-1 1-1 1 2 1 3 1 1 1 0 1-3 1-1 1 0 1 1 1 0 1 0 1 2 1 2 1-1 1-2 1-1 1-3 1-1 1 1 1 1 1-1 1 3 1-1 1-1 1 1 1 3 1 1 1 1 1 3 1 0 1-5 1-1 1-2 1 3 1-2 1 2 1 0 1 0 1 2 1 0 1 6 1-4 1-2 1-4 1-2 1 2 1 3 1 2 1 0 1-3 1-1 1 2 1-1 1-3 1 0 1 2 1 2 1 0 1-1 1 1 1-3 1 2 1 3 1 0 1-3 1 2 1 2 1-2 1-2 1 1 1-3 1-1 1 0 1 0 1 2 1 0 1-1 1 2 1 3 1-1 1 0 1-2 1-2 1 0 1 2 1 3 1 3 1-1 1-5 1-3 1-2 1 0 1 5 1 0 1-3 1 3 1 5 1-1 1-2 1-2 1-3 1 3 1-3 1 2 1 1 1 3 1 2 1-1 1-2 1-3 1 0 1 5 1 1 1-2 1-4 1-2 1 1 1-2 1 1 1 2 1 2 1 1 1-2 1-3 1 1 1-1 1 2 1-1 1-2 1 0 1 0 1 3 1 3 1 1 1-1 1 1 1 2 1 1 1-3 1-4 1-1 1-1 1 1 1 2 1 2 1 0 1-1 1-1 1-2 1-3 1-2 1 2 1 5 1 3 1-3 1-2 1-1 1-1 1 2 1 0 1-4 1-1 1 2 1 2 1 2 1 1 1 1 1 1 1 2 1 1 1-1 1 0 1-8 1-1 1 2 1 2 1 3 1 2 1-1 1-2 1-2 1 0 1 3 1 1 1-1 1-3 1 0 1 2 1 0 1-1 1 2 1 1 1-3 1 0 1 2 1 1 1 1 1 0 1 1 1-6 1-3 1 2 1 2 1 1 1 1 1 1 1 0 1 0 1 0 1-1 1-1 1-1 1 0 1 1 1-3 1-2 1 1 1 3 1 0 1-1 1-3 1 0 1 5 1 2 1-4 1-2 1 2 1-4 1-5 1 2 1 2 1 4 1 6 1 0 1-3 1 1 1 0 1-2 1 0 1 0 1 1 1 0 1-1 1 2 1 2 1 0 1-3 1-1 1 0 1 1 1-1 1 1 1 2 1 0 1-1 1-1 1 1 1-1 1-3 1-1 1 2 1 2 1 3 1 2 1 3 1-2 1-4 1-2 1-3 1 0 1 1 1-2 1-2 1-2 1 5 1 2 1-1 1-1 1 0 1 0 1 2 1 0 1 0 1-4 1-2 1 1 1 2 1-1 1 1 1 2 1 3 1 1 1-1 1-2 1 1 1 1 1-1 1-2 1 0 1 2 1 1 1 0 1 0 1 1 1-3 1-3 1 2 1 3 1 0 1-3 1-2 1 0 1-1 1-1 1 4 1 2 1-3 1-2 1 1 1 1 1 1 1 0 1-1 1-3 1-2 1-1 1 3 1 4 1 2 1-1 1-3 1-1 1 2 1 1 1 4 1 3 1-3 1-2 1-2 1-3 1-2 1 2 1 3 1 2 1 0 1 6 1-10 1-2 1 2 1 0 1 0 1 1 1-1 1-1 1 1 1 0 1 2 1 2 1-3 1 1 1-2 1 0 1 3 1 3 1 0 1-1 1 1 1-2 1-3 1 1 1 1 1-2 1 0 1 1 1 1 1 1 1 0 1 2 1 3 1-3 1-7 1-2 1 1 1 1 1 1 1 4 1 3 1-1 1-4 1-2 1 0 1 1 1 2 1-2 1-2 1 3 1 3 1 2 1-1 1-5 1-3 1 4 1 3 1-1 1-5 1 1 1 5 1 3 1-1 1-2 1-2 1-3 1-2 1 2 1 2 1 2 1-1 1-4 1 1 1 1 1-2 1 0 1 2 1 0 1-2 1-1 1 0 1 2 1 0 1 0 1 1 1-1 1 0 1 3 1 1 1-2 1-1 1 0 1-2 1-2 1 3 1 4 1-1 1 1 1 1 1-2 1-2 1 0 1 1 1-1 1 1 1 0 1 0 1 1 1-1 1-1 1-1 1 1 1-1 1-1 1 0 1 2 1 2 1-1 1-1 1 1 1 0 1-2 1 1 1-1 1 0 1 0 1-8 1 4 1 1 1 1 1 2 1 1 1-1 1 0 1 1 1 0 1-2 1 0 1 4 1 1 1-1 1-1 1-2 1 0 1-1 1-1 1 0 1-1 1-2 1 3 1 3 1 0 1-1 1-2 1-1 1 1 1 0 1 1 1 2 1-1 1 1 1 2 1-2 1-2 1 1 1 1 1-2 1-2 1 3 1 3 1 3 1-2 1-3 1 0 1 1 1-1 1 1 1 2 1-1 1-2 1-2 1-1 1 0 1 3 1 1 1 1 1 0 1-2 1 1 1 1 1 0 1-2 1 0 1 2 1 0 1-3 1 0 1 2 1-1 1-2 1 0 1 1 1 2 1-1 1-1 1 1 1 4 1 0 1-4 1-2 1-1 1 0 1 2 1 1 1 2 1 3 1 0 1-3 1-1 1 1 1-1 1-4 1-1 1 0 1-1 1 2 1 3 1-1 1-9 1 10 1 1 1 1 1-2 1-2 1 0 1 1 1 2 1 1 1-2 1-1 1 0 1 0 1-1 1-1 1-1 1 1 1 2 1 0 1 2 1-1 1-5 1-2 1 3 1 1 1 2 1 2 1 0 1-2 1 1 1 2 1 0 1 3 1 0 1-4 1 0 1 1 1-2 1 0 1 0 1-1 1 0 1 0 1 1 1 2 1 1 1 1 1-2 1-3 1-1 1 1 1 1 1 0 1-3 1 1 1 1 1 0 1 0 1 2 1 0 1-2 1-1 1-2 1 0 1 0 1 1 1 0 1 0 1 2 1 4 1 0 1 0 1-2 1-2 1 3 1 1 1-2 1-3 1-2 1 0 1 1 1 1 1 0 1-2 1-2 1 0 1 2 1 2 1-1 1 0 1 1 1-1 1 2 1 1 1-2 1-1 1 3 1 1 1-2 1-1 1 1 1 1 1-1 1 0 1 1 1 2 1 0 1-1 1-2 1 1 1 0 1 1 1 0 1-1 1-1 1 1 1 0 1-3 1 0 1-1 1-1 1 0 1 4 1 2 1-1 1-3 1-3 1 1 1 3 1-1 1 2 1 4 1 0 1-2 1 1 1-2 1-3 1 1 1 2 1-2 1-2 1 2 1-2 1 2 1 3 1-1 1-2 1 0 1 2 1 1 1-2 1-1 1-1 1-2 1-1 1 3 1 3 1 0 1 0 1 1 1 0 1-2 1-2 1 0 1 1 1 0 1-2 1-1 1-1 1 1 1 3 1 2 1 0 1 0 1 1 1 0 1-2 1 1 1 4 1 0 1-3 1-4 1-1 1 1 1-11 1 13 1 0 1 0 1-2 1-2 1 2 1 3 1 0 1-3 1 1 1 2 1 2 1 1 1-3 1-4 1 0 1 1 1 0 1-1 1 0 1 0 1 1 1 2 1 0 1-1 1-4 1 0 1 1 1 0 1 0 1 2 1 2 1-2 1 2 1-1 1 4 1-2 1-4 1 0 1 1 1-2 1-2 1 0 1 1 1-1 1 2 1 3 1 2 1 0 1-2 1 1 1 1 1 0 1-2 1-1 1 2 1-5 1 5 1 1 1 0 1-3 1-3 1 0 M0 828l1-1 1 2 1 2 1 1 1-1 1-2 1 0 1 3 1 1 1-2 1-3 1 1 1 2 1-1 1-3 1 0 1 0 1 0 1 1 1 1 1 5 1-4 1 0 1 1 1-1 1-2 1-1 1 1 1 0 1 0 1 1 1 0 1 0 1-1 1-1 1 0 1 0 1 1 1 2 1 1 1-3 1-6 1-2 1 0 1 5 1 8 1 7 1 5 1 1 1-4 1-8 1-5 1-3 1-1 1 0 1-1 1-3 1-5 1-3 1 11 1 11 1 3 1-10 1 11 1 9 1 18 1 12 1-4 1-20 1-27 1-26 1-25 1-6 1 0 1 9 1 35 1 45 1 23 1 0 1 0 1-9 1-29 1-25 1-16 1-6 1-4 1-1 1 0 1 3 1 8 1 16 1 21 1 25 1 17 1 0 1-11 1-37 1-40 1-23 1 1 1 23 1 30 1 23 1 12 1-1 1-7 1-9 1-4 1-5 1-4 1-2 1-4 1-6 1-6 1-2 1 5 1 8 1 9 1 7 1 1 1-4 1-1 1 1 1 3 1 4 1 2 1-4 1-8 1-7 1-4 1-3 1 3 1 2 1 2 1 0 1-2 1-2 1 1 1 3 1 6 1 6 1 4 1 0 1-5 1-3 1 2 1 1 1 0 1 1 1-4 1-5 1-2 1 1 1 1 1 0 1-1 1 0 1-1 1 0 1 1 1 1 1-1 1-2 1 1 1 2 1 1 1-1 1 1 1 4 1 0 1-2 1 3 1-4 1-5 1-1 1 2 1 2 1 0 1 0 1 3 1 3 1 0 1-4 1 0 1 3 1-2 1-2 1 0 1 1 1 0 1-1 1-1 1 1 1 2 1 1 1-2 1-3 1 1 1 2 1-2 1-3 1 2 1 2 1 1 1-1 1 1 1 0 1-2 1 1 1 4 1 1 1-1 1-1 1-1 1-1 1-1 1-1 1 1 1 2 1 2 1-1 1 0 1 0 1-1 1-2 1-2 1 1 1 0 1-3 1 1 1 3 1-1 1-1 1 0 1 2 1 1 1 0 1-1 1-1 1 2 1 1 1 0 1-1 1-2 1-2 1 1 1 2 1 0 1-2 1-1 1 3 1-1 1 0 1 0 1 1 1 1 1 2 1 1 1 0 1-2 1-2 1 0 1 1 1-1 1 1 1 0 1-3 1 0 1 2 1 1 1-1 1 0 1 2 1 0 1-2 1-1 1 1 1-1 1 0 1 0 1 2 1 0 1-1 1-2 1-1 1 2 1 0 1 0 1 0 1 0 1 11 1-11 1-2 1 1 1 2 1 0 1-1 1-1 1 2 1 0 1 1 1-1 1-1 1 0 1 2 1 1 1 0 1 1 1 1 1-4 1-3 1-1 1 0 1 1 1 0 1 0 1 0 1-2 1 3 1 5 1 1 1-1 1 0 1 1 1-2 1-2 1-2 1 0 1 4 1-4 1 0 1 1 1 1 1 0 1-1 1 1 1 3 1 0 1 0 1 1 1 0 1-3 1-3 1 0 1 0 1-1 1 0 1-1 1 0 1 3 1 0 1-1 1-1 1 1 1 0 1 1 1 0 1 1 1 1 1 0 1-1 1-1 1 0 1 1 1 0 1-3 1-3 1 0 1 4 1 4 1 1 1 0 1-2 1-2 1-1 1 2 1 0 1 1 1 0 1 0 1 0 1-1 1-2 1 0 1 2 1 2 1 0 1 1 1 0 1 0 1-2 1-1 1 1 1 1 1-2 1-1 1 0 1 0 1 1 1 1 1-1 1-1 1 3 1 1 1-1 1-1 1-1 1 0 1 2 1 1 1-1 1-1 1-1 1 0 1 3 1 0 1-2 1-1 1 2 1 1 1-2 1-3 1 0 1 1 1 0 1 0 1 2 1 1 1-2 1-1 1 1 1 1 1-2 1 1 1 1 1-1 1 1 1 0 1 1 1 0 1 1 1 1 1 0 1-2 1-3 1 0 1 2 1 1 1-1 1-1 1-1 1-4 1 3 1 1 1 0 1 0 1 2 1 1 1-2 1-1 1 2 1 1 1 1 1-1 1-1 1 1 1 2 1-1 1-1 1-3 1-2 1 2 1 3 1 1 1-1 1-1 1-1 1-1 1 0 1 0 1 0 1 0 1 1 1 0 1 1 1 1 1 0 1-1 1-3 1-1 1 3 1 4 1 1 1-1 1-2 1-2 1 1 1 0 1-3 1 0 1 1 1-1 1-2 1 2 1 2 1 0 1 1 1-1 1-1 1 1 1-1 1 0 1 2 1 0 1-4 1-2 1 2 1 4 1 0 1-2 1-1 1-2 1 0 1 2 1 0 1-2 1 0 1 2 1 2 1 1 1 2 1 1 1 0 1-2 1-3 1 0 1 2 1 0 1-3 1-3 1 1 1 4 1 1 1-2 1-1 1-1 1 3 1 3 1 1 1-3 1-2 1 0 1 3 1 1 1-2 1-1 1-1 1-2 1-2 1 3 1 1 1-2 1-2 1 0 1 5 1 1 1-1 1-1 1 0 1 0 1 0 1 0 1 1 1 1 1 0 1-2 1 0 1-1 1-2 1 0 1 2 1 0 1 0 1 1 1 0 1 0 1 2 1 1 1 0 1-2 1 1 1 0 1-1 1 0 1 0 1-1 1 1 1 2 1 0 1 0 1-1 1-2 1 0 1-1 1-1 1 1 1 1 1 1 1 2 1 0 1-2 1 0 1 1 1 2 1 2 1-1 1-2 1-3 1-2 1 2 1 0 1 1 1 1 1 2 1 2 1-1 1-1 1-2 1 0 1 0 1-1 1 1 1-1 1-1 1 4 1 1 1-3 1 0 1 3 1-3 1-4 1 2 1 4 1 0 1 0 1 0 1-1 1-3 1-1 1 0 1 1 1 2 1 2 1-1 1-1 1 0 1 1 1-1 1-2 1 2 1 2 1-1 1-3 1-2 1-1 1 2 1 3 1-1 1-2 1 0 1 1 1 0 1 0 1 0 1 3 1 0 1-2 1 0 1 0 1-2 1 0 1 1 1 1 1-1 1-1 1 0 1-1 1-2 1 1 1 2 1 0 1 2 1 2 1 0 1-2 1-1 1 0 1-1 1 0 1 2 1 1 1 2 1-1 1-2 1 1 1 0 1-3 1-1 1 1 1 2 1 1 1-1 1-1 1 1 1 2 1 1 1-3 1-1 1 1 1 1 1 1 1 2 1-2 1-3 1 0 1 3 1 0 1 0 1-2 1-1 1 2 1 2 1-2 1-2 1-1 1 1 1 2 1 3 1 0 1-2 1-2 1 0 1 0 1 0 1 0 1-1 1 0 1 1 1-1 1 0 1 1 1 1 1 2 1-1 1-2 1-1 1 1 1 1 1-1 1-1 1-1 1 2 1 2 1 0 1-1 1 5 1-7 1-1 1 3 1 1 1 0 1-1 1 0 1-1 1-4 1-2 1 1 1 6 1-4 1 0 1 1 1 2 1 1 1 1 1 0 1-1 1-1 1 1 1-3 1 0 1 3 1 1 1 0 1 1 1-1 1-2 1-1 1 0 1 1 1 0 1 1 1 2 1 2 1-3 1 0 1 1 1-1 1-1 1 1 1 0 1-1 1-1 1 1 1 2 1 2 1 0 1 1 1-5 1 0 1 1 1-1 1-2 1-2 1 2 1 2 1 2 1-1 1-3 1 0 1 1 1 0 1 1 1 1 1-1 1-3 1-2 1 1 1 0 1 2 1 0 1-1 1 1 1 2 1 2 1-2 1-3 1 1 1 1 1 0 1 0 1 1 1 1 1-2 1-2 1-1 1-1 1-1 1 1 1 1 1 3 1 3 1-2 1-4 1-2 1 0 1 0 1 0 1 3 1 2 1 3 1 2 1-2 1-2 1-1 1-1 1-1 1 1 1 2 1-2 1-3 1 0 1 1 1 2 1 2 1 1 1 0 1-1 1 0 1 0 1-1 1-2 1 1 1-2 1 0 1 3 1 1 1 1 1-1 1-2 1 0 1 2 1 3 1 0 1-2 1-2 1 1 1 0 1-2 1 0 1 2 1 0 1-1 1-2 1 0 1 2 1-1 1-2 1-1 1 3 1 3 1 0 1-2 1 3 1-1 1-4 1-2 1 3 1 0 1 0 1 1 1 3 1 1 1-1 1-2 1 0 1-1 1-1 1 1 1 1 1 0 1 0 1 2 1 1 1 0 1-3 1-2 1 0 1 1 1 0 1 0 1 1 1 1 1 1 1 0 1 0 1-1 1-3 1 1 1 0 1 0 1-1 1 1 1 1 1 1 1 1 1-1 1-2 1-1 1 1 1 0 1 0 1 2 1 1 1 0 1 0 1-2 1-1 1 0 1 0 1-1 1-2 1-1 1 4 1 1 1-3 1 1 1 0 1 2 1 1 1 0 1-1 1-1 1 0 1-1 1-1 1-1 1 1 1 2 1 0 1 0 1 1 1 1 1 1 1-2 1-2 1-1 1-2 1 0 1 3 1 2 1 1 1-1 1 0 1 1 1 1 1-1 1-2 1 1 1 1 1 1 1 3 1-3 1-2 1-1 1 1 1 1 1 1 1 0 1-2 1-2 1 1 1 1 1 1 1 0 1-1 1-1 1 0 1 1 1 1 1-2 1-1 1 0 1 0 1 0 1 0 1 3 1 1 1-1 1-2 1 0 1 0 1 0 1-3 1-1 1 2 1 2 1 1 1 0 1 1 1-1 1-3 1 0 1 2 1 1 1 0 1 1 1 1 1 1 1-2 1-2 1 0 1 2 1 2 1-3 1-2 1 1 1 0 1 0 1 1 1 1 1-2 1-1 1-1 1 1 1 1 1 3 1 0 1-2 1-3 1-1 1 1 1 2 1 1 1 0 1 1 1-1 1 0 1 0 1-4 1-1 1 1 1 0 1 1 1 0 1 1 1 1 1 1 1 0 1-2 1-1 1-1 1 2 1 3 1 0 1 1 1 0 1-1 1-1 1 1 1 2 1 1 1-2 1-2 1-1 1-1 1-2 1 1 1 2 1 1 1-1 1 1 1 2 1-2 1 0 1-1 1 0 1 1 1 0 1-2 1 0 1 3 1 0 1 1 1 0 1-1 1-2 1-2 1 0 1 1 1 0 1 2 1 2 1 0 1-3 1-1 1 2 1 1 1-2 1 0 1-1 1 0 1-1 1-1 1 0 1 1 1 4 1 1 1-2 1 0 1 0 1 0 1-1 1 0 1-2 1-1 1 0 1 1 1 2 1 1 1 2 1-2 1-1 1 2 1 2 1 1 1-2 1-3 1 0 1 2 1 0 1 0 1 0 1 2 1 1 1-2 1-3 1-3 1 0 1 2 1 0 1-3 1 2 1 4 1 0 1-1 1 0 1 0 1 0 1 2 1-1 1-3 1-2 1-1 1 2 1 4 1 2 1-1 1-1 1-2 1 0 1 2 1-1 1-2 1-3 1 3 1-1 1 1 1 0 1 0 1 0 1 1 1 1 1-1 1-1 1 1 1 1 1-1 1-2 1 0 1 2 1 2 1 0 1 0 1 0 1-2 1-1 1 1 1 1 1 1 1-2 1-2 1-1 1 2 1 0 1 0 1-1 1 0 1 1 1 2 1 1 1-1 1 0 1-1 1-1 1 0 1 2 1 2 1-1 1-2 1-1 1 0 1 1 1 1 1 0 1 0 1 0 1-1 1 0 1 0 1-1 1 1 1 2 1-5 1 0 1 2 1-1 1-3 1 0 1 3 1 2 1 2 1 1 1 2 1-1 1-4 1 0 1 0 1-2 1-1 1 3 1 3 1-2 1-3 1-1 1 1 1 1 1 1 1 2 1 1 1-1 1-1 1 0 1 0 1-1 1-1 1-1 1 0 1 3 1 2 1 0 1-1 1 0 1-1 1 0 1 0 1 1 1 0 1 0 1 0 1 0 1 0 1 0 1-2 1 1 1-2 1 1 1-1 1-1 1 2 1 1 1-3 1 1 1 1 1-1 1-1 1 2 1 2 1 0 1-1 1 0 1 1 1 0 1 0 1-1 1-2 1 0 1 0 1 0 1 1 1 2 1 3 1-1 1-1 1 1 1-2 1-3 1 0 1 2 1-1 1 0 1 0 1-1 1-3 1-1 1 3 1 3 1 1 1-2 1 0 1 1 1 1 1 1 1-3 1-4 1 0 1 0 1 0 1 1 1 1 1 1 1 0 1 2 1 0 1 0 1-2 1-3 1-1 1 2 1 1 1 0 1 1 1 3 1 1 1-1 1-1 1 1 1-1 1 0 1 0 1-1 1 0 1 1 1-1 1-2 1-1 1 1 1 1 1 1 1 0 1 1 1 0 1-1 1-1 1 1 1-2 1 1 1 2 1 0 1 2 1 2 1 0 1-2 1-1 1-2 1 1 1 0 1 0 1-3 1-3 1 2 1 2 1 3 1 2 1-1 1-1 1 0 1 0 1-2 1-2 1 0 1 2 1 1 1-3 1 0 1 2 1 0 1-1 1-2 1 1 1 3 1 8 1-9 1-1 1 0 1-2 1 0 1 1 1 3 1 7 1-10 1-1 1 3 1 0 1-3 1 0 1 3 1 1 1 1 1-3 1-2 1 3 1 2 1-1 1-1 1 0 1 0 1-2 1-1 1 2 1 1 1 1 1-1 1-1 1-2 1 0 1 2 1 1 1 1 1 1 1 0 1 0 1 0 1 0 1 0 1 0 1-1 1-1 1 0 1-1 1-1 1 1 1 2 1 0 1 1 1 2 1 0 1-5 1-3 1 0 1 1 1 2 1 1 1 1 1-1 1 0 1-1 1 0 1 2 1 3 1-3 1-4 1 0 1 2 1 1 1 1 1 3 1-1 1-4 1 0 1 3 1-1 1 0 1 2 1 0 1-5 1-3 1 2 1 4 1 1 1-1 1-2 1 1 1-1 1-2 1-1 1 3 1 3 1-1 1-1 1 0 1-1 1-1 1 0 1 0 1 0 1 1 1 1 1 0 1-1 1 1 1 0 1-1 1 0 1 1 1-1 1 0 1 0 1 1 1 1 1 1 1-3 1 1 1 1 1-1 1-1 1 0 1 0 1 1 1 1 1-1 1-2 1 0 1 0 1-1 1-2 1 1 1 4 1 2 1 0 1-1 1 0 1 0 1-1 1-2 1-1 1 0 1 1 1 0 1 2 1 2 1-1 1 1 1-1 1-4 1 0 1 2 1 1 1 1 1 0 1 0 1 2 1 1 1 0 1-5 1 0 1 1 1 2 1-2 1-1 1 1 1-2 1 2 1 7 1-6 1 1 1 0 1-1 1-1 1 0 1 0 1 1 1 0 1-2 1 0 1 4 1 2 1-1 1-1 1 0 1 2 1-3 1 0 1 0 1-1 1-1 1-1 1 1 1 0 1 3 1-1 1-4 1-2 1 3 1 1 1 1 1 1 1-1 1-2 1-1 1 1 1 1 1 2 1 1 1-1 1 0 1 1 1-1 1-1 1 0 1-1 1 1 1-1 1-1 1 1 1 1 1 0 1-1 1 2 1 1 1-2 1-1 1 0 1 1 1 0 1-2 1-1 M0 960l1-5 1-13 1 4 1 13 1 4 1 0 1-1 1-4 1-3 1-6 1-7 1 1 1 5 1 4 1 8 1 6 1-1 1-5 1-4 1-9 1-3 1 4 1-2 1-9 1-1 1 8 1 5 1 7 1 1 1-2 1 0 1 1 1-1 1-1 1-4 1-2 1 2 1 3 1-4 1-4 1 3 1-3 1 6 1 16 1 10 1-6 1-11 1-17 1-12 1 5 1 7 1 3 1 3 1 2 1 8 1 10 1-2 1-18 1-18 1-10 1 0 1 13 1 13 1 8 1 17 1 22 1 0 1 0 1-76 1-36 1 0 1 38 1 74 1 0 1-4 1-33 1-13 1-15 1-28 1-19 1 29 1 58 1 25 1 0 1 0 1-13 1-43 1-37 1-7 1 18 1 15 1 2 1 1 1 3 1 20 1 31 1 10 1 0 1-14 1-27 1-27 1-12 1 2 1 0 1 8 1 8 1-4 1-4 1 11 1 10 1 9 1 17 1 7 1-9 1-11 1-3 1 1 1-2 1-8 1-5 1 1 1 7 1 5 1-6 1-16 1-3 1 13 1 13 1 10 1-1 1-4 1 2 1 0 1-12 1-9 1 6 1 6 1 3 1-1 1 2 1 4 1 7 1 1 1-8 1-8 1 0 1 5 1 4 1-3 1-13 1 4 1 9 1-10 1-10 1-1 1 0 1 0 1 3 1 9 1 3 1-1 1 6 1-2 1-10 1-12 1-3 1 9 1 14 1 13 1 8 1-2 1-2 1-27 1 10 1-1 1-3 1-6 1-5 1 11 1 12 1 2 1 3 1-2 1-3 1-2 1-5 1 5 1 3 1-9 1-2 1 6 1 4 1-1 1 0 1 1 1-6 1-8 1-2 1-2 1-2 1 4 1 3 1 0 1-7 1-2 1 9 1 16 1 7 1-2 1-6 1-4 1-8 1-8 1 0 1 1 1 0 1 5 1 11 1-3 1-6 1 1 1-4 1-7 1-2 1-4 1-6 1 5 1 12 1 5 1-2 1-5 1 1 1 5 1 1 1-6 1 0 1 6 1-3 1-5 1-1 1 8 1 11 1-1 1-11 1-1 1 13 1 6 1-4 1-12 1-14 1 1 1 9 1 3 1 0 1 12 1-16 1 3 1-1 1 0 1 3 1 4 1 6 1-4 1-11 1-2 1 3 1 3 1-2 1 5 1 3 1-5 1-8 1-2 1 3 1 7 1 1 1-9 1-2 1 4 1 5 1 5 1-2 1-5 1 1 1 7 1 2 1-3 1-10 1-12 1-3 1 7 1 9 1 3 1 3 1 2 1 1 1 1 1-8 1-8 1 5 1 8 1 0 1 7 1 2 1-9 1-7 1-2 1-10 1 9 1-4 1 3 1 2 1 1 1 3 1-1 1 3 1 11 1 5 1-8 1-14 1-1 1 5 1 0 1-5 1-8 1 0 1 7 1 7 1-6 1-6 1 12 1 10 1-6 1-13 1 6 1 9 1-1 1-9 1-7 1 3 1 7 1 5 1 1 1-1 1-2 1-6 1-1 1 5 1 3 1 2 1 3 1-4 1-7 1-2 1-3 1-3 1 5 1 12 1-1 1-6 1 7 1 2 1-3 1 5 1 6 1-5 1-3 1-3 1 13 1-31 1 2 1 9 1 4 1-7 1-3 1 5 1 4 1 2 1-1 1-2 1 0 1-2 1-4 1 5 1 18 1 6 1-10 1-15 1 2 1 4 1-10 1-1 1 1 1-1 1 4 1 6 1-1 1 2 1 3 1-11 1-4 1 13 1 10 1-5 1-9 1-8 1 5 1 12 1 4 1-7 1-11 1-6 1-1 1 4 1 5 1-1 1 2 1 6 1 2 1-2 1-2 1-6 1-7 1 3 1 4 1 1 1 2 1 2 1 4 1-2 1-1 1 0 1 1 1 3 1 2 1-4 1-9 1-4 1 1 1-1 1-5 1-1 1 2 1 3 1 5 1 8 1 4 1-4 1-8 1-2 1 8 1 12 1 0 1-8 1 3 1 2 1-9 1 0 1 7 1-2 1-4 1 7 1 2 1-7 1-8 1 4 1 8 1 1 1-2 1-1 1 2 1-2 1 0 1-4 1-2 1 2 1-7 1-3 1 1 1-6 1-2 1 7 1 4 1 4 1 9 1 5 1-2 1 2 1-7 1-15 1-12 1 4 1 13 1 4 1-3 1 4 1 1 1-9 1-8 1 2 1 7 1 7 1 0 1-5 1 0 1 2 1 4 1 7 1-1 1-10 1-6 1-1 1 1 1 2 1 0 1-3 1-3 1 2 1 13 1 11 1-2 1-6 1-2 1 1 1 3 1-8 1-10 1-1 1 3 1-2 1-2 1-1 1 1 1 3 1 4 1 3 1-13 1-1 1 11 1 5 1-1 1 1 1 1 1 1 1 2 1-2 1-2 1 1 1 3 1-1 1 4 1 5 1-2 1-3 1-5 1 0 1 2 1 1 1 2 1 1 1-8 1-4 1-1 1-3 1 7 1 7 1-1 1 0 1 2 1 2 1-4 1-13 1-12 1 8 1 11 1-1 1-1 1 2 1-3 1 1 1 3 1-2 1 0 1-3 1-5 1 1 1 2 1 4 1 5 1-3 1-8 1-3 1 8 1 8 1-1 1 1 1-3 1-6 1-2 1 1 1-3 1 3 1 1 1 4 1 0 1 1 1 1 1-5 1-13 1 16 1 4 1 2 1-2 1-3 1-1 1 1 1 0 1-1 1-3 1-7 1 0 1 8 1 5 1-3 1-9 1 7 1 8 1 0 1-1 1-2 1-1 1-2 1-11 1-4 1 11 1 6 1 0 1 2 1-1 1-2 1 1 1-2 1 1 1-5 1 3 1 1 1 3 1 1 1 4 1-2 1-13 1-2 1 8 1 4 1 5 1 2 1-4 1-2 1-4 1-2 1 4 1 4 1 3 1-1 1 0 1-7 1-9 1 1 1 6 1 2 1-3 1-1 1-4 1-4 1 7 1 6 1 1 1 3 1 0 1-4 1-3 1 1 1 2 1-4 1-4 1 4 1 8 1 4 1-4 1-6 1-3 1-6 1 0 1 7 1 11 1 0 1-5 1-2 1 3 1 0 1 1 1 2 1-5 1-5 1-6 1 1 1 0 1 6 1 6 1 5 1-2 1-13 1 1 1 5 1 4 1 0 1-4 1-4 1-1 1 0 1 0 1 5 1 0 1-2 1-2 1 3 1 3 1 5 1 1 1-6 1-1 1 4 1-1 1-5 1 1 1-3 1-5 1 1 1 5 1 4 1-1 1 1 1-3 1-1 1-8 1 1 1 3 1-4 1-1 1 9 1 6 1-2 1-1 1 0 1 1 1 5 1-1 1-6 1 5 1 3 1-1 1 4 1 6 1 4 1-5 1-8 1-5 1-5 1 6 1 5 1-2 1-3 1 6 1 2 1-10 1-8 1 1 1-4 1-3 1 10 1 8 1-8 1 17 1-13 1 1 1-8 1 0 1 8 1 4 1-2 1-8 1 2 1 5 1-4 1-6 1-3 1-4 1 6 1 11 1 4 1-2 1-6 1-8 1 4 1 14 1 6 1-9 1-12 1 1 1 10 1-1 1-7 1 4 1 9 1-1 1-9 1-2 1-1 1-8 1-4 1 9 1 12 1 3 1-8 1-13 1-7 1 6 1 10 1 4 1-5 1-6 1-8 1-2 1 7 1-1 1-4 1 1 1 6 1-1 1 0 1 0 1 7 1 9 1-1 1-1 1 3 1 2 1-4 1-5 1 3 1-3 1-3 1 5 1 2 1-1 1-3 1-10 1-4 1 8 1 11 1 1 1-6 1-3 1 4 1 3 1-5 1-1 1 5 1 3 1 2 1 2 1-8 1-12 1-1 1 11 1 4 1 1 1 4 1 5 1 9 1-11 1-6 1-4 1-2 1 0 1 5 1 6 1-2 1-7 1-7 1-3 1 2 1 5 1 6 1 3 1 2 1-3 1-7 1 0 1 6 1 2 1-9 1 1 1 8 1 2 1-4 1-7 1-3 1 4 1 5 1 4 1 1 1-1 1 0 1-4 1-2 1-5 1-10 1 0 1 7 1 8 1 5 1 2 1-5 1-3 1-3 1-4 1 0 1 0 1 2 1 1 1 6 1 12 1 6 1-1 1-10 1-10 1-4 1-3 1-2 1 3 1-1 1-7 1-2 1 5 1 6 1 0 1-3 1 6 1 19 1-1 1-3 1-6 1-7 1-3 1-2 1 1 1 6 1 4 1 4 1-3 1-6 1-7 1 0 1 7 1 2 1 1 1-5 1 1 1 4 1-7 1 0 1 7 1 0 1 0 1 5 1-9 1-6 1 6 1 2 1 1 1 0 1-6 1-1 1 5 1 2 1-1 1 5 1-2 1-7 1-17 1 28 1 5 1 1 1-3 1-6 1-7 1-6 1 8 1 8 1 1 1-7 1-4 1 5 1 5 1 1 1 1 1 0 1 7 1 8 1-6 1-13 1-7 1 6 1 4 1-2 1-6 1-11 1 0 1 5 1 4 1-3 1 2 1 5 1-3 1 5 1 3 1-7 1-5 1 0 1 0 1 1 1 5 1 10 1 12 1-4 1-9 1 2 1 4 1-3 1-8 1-2 1 6 1-1 1 0 1 3 1 0 1-2 1-4 1-2 1 4 1 2 1-10 1-5 1-1 1-3 1 0 1 7 1 12 1 1 1-11 1-6 1 7 1 8 1-8 1-7 1 7 1 4 1 2 1-4 1-3 1 6 1 0 1-12 1-10 1 2 1 7 1 7 1-1 1-1 1 2 1 1 1 4 1 3 1-2 1-6 1 2 1 7 1 9 1-2 1-8 1-6 1-10 1-1 1 6 1 3 1-2 1-6 1 12 1-12 1-7 1 5 1 9 1-2 1-2 1 0 1 3 1 3 1 12 1-5 1 1 1-6 1-2 1-1 1 0 1 9 1 4 1 7 1-7 1-6 1-13 1-7 1 7 1 6 1 2 1 3 1 21 1-25 1-5 1-2 1 7 1 6 1 1 1-5 1-4 1 0 1-2 1-2 1 4 1-1 1-3 1 4 1 9 1-1 1-48 1 80 1-72 1 44 1-6 1-9 1 0 1 1 1-4 1-2 1 8 1 13 1-3 1-5 1 1 1-1 1-4 1 0 1-2 1 3 1 6 1-1 1-3 1 3 1-6 1-5 1 8 1 5 1-4 1-2 1 6 1 2 1-2 1-1 1 5 1 3 1-7 1 0 1 4 1-4 1-7 1-3 1-2 1-3 1 7 1 8 1 3 1 0 1-4 1-5 1-3 1-1 1 6 1 4 1-1 1-10 1-5 1 3 1-1 1-5 1 2 1 7 1 4 1 7 1 0 1-10 1 3 1 11 1-3 1-37 1 32 1 1 1-9 1 5 1 5 1-6 1-2 1 1 1-2 1 7 1 5 1-7 1-4 1 8 1 1 1-4 1-5 1 3 1 1 1-11 1-8 1 3 1 12 1 4 1-3 1 3 1 5 1 2 1-8 1-2 1 6 1 6 1-5 1-8 1 1 1-1 1-1 1 3 1-1 1-5 1 5 1 9 1 1 1-6 1-3 1 0 1-3 1-2 1 4 1 3 1 7 1 1 1-4 1-4 1-3 1-3 1-2 1 3 1 6 1 1 1 6 1-2 1-5 1 4 1-2 1-6 1 0 1-2 1-1 1 3 1 2 1-1 1 2 1 3 1-4 1-6 1-3 1 3 1 2 1 4 1 6 1 1 1-5 1-4 1 2 1 2 1-17 1 16 1-6 1 1 1 4 1 4 1-29 1 33 1-4 1-4 1-4 1 41 1-39 1 0 1-6 1-3 1 9 1 1 1-7 1 7 1 9 1 1 1-3 1-5 1 2 1 8 1 2 1-1 1-4 1 1 1 0 1-4 1-2 1 8 1-3 1-8 1-4 1-1 1 7 1 0 1-1 1-4 1-6 1 6 1 6 1-2 1 3 1 7 1 0 1-6 1 2 1 2 1 0 1 1 1-5 1-6 1 0 1 0 1 1 1 4 1 7 1 0 1-6 1-5 1-2 1-6 1-4 1 3 1 8 1 4 1 6 1 4 1-3 1-3 1 4 1-3 1-9 1-2 1 0 1 5 1 7 1 2 1 3 1-2 1 1 1 4 1-1 1-1 1 0 1-7 1-13 1-3 1 9 1 3 1-9 1-6 1 5 1 12 1-6 1-6 1 5 1-2 1-12 1 1 1 10 1 6 1 1 1 1 1-2 1 0 1 6 1-4 1-5 1 1 1-1 1-1 1-8 1-4 1 0 1-2 1 2 1 11 1 4 1-5 1-4 1 5 1 7 1-2 1 2 1 2 1-3 1-5 1-1 1-1 1 1 1 5 1-1 1 4 1 9 1-2 1-8 1 0 1-2 1-3 1 9 1-1 1-7 1-7 1-3 1 12 1 8 1-1 1 2 1-6 1-9 1-4 1-8 1 2 1 13 1 5 1-4 1-5 1-1 1 7 1 2 1 7 1 11 1-8 1-4 1 3 1-5 1-3 1 3 1-6 1-6 1 2 1 6 1 6 1-1 1-6 1 1 1-5 1-8 1-1 1 14 1 4 1-5 1 0 1 2 1-9 1-10 1 8 1 8 1 1 1 2 1 1 1 2 1 5 1-6 1-8 1-4 1-4 1 2 1 1 1 3 1 7 1-1 1-7 1 2 1 11 1 6 1-7 1-5 1-2 1-4 1 3 1 7 1 0 1-5 1-4 1 7 1 14 1 6 1-10 1-12 1-3 1 6 1 4 1-10 1-7 1-2 1 4 1 7 1 8 1 1 1-5 1-4 1 3 1 5 1-6 1-9 1 0 1 2 1-14 1 11 1 7 1 0 1 0 1 1 1-2 1-6 1-6 1 6 1 5 1 2 1 8 1 12 1 1 1-4 1-4 1-8 1-2 1 5 1 4 1 4 1 0 1-4 1-3 1-5 1-2 1 0 1 9 1-5 1-2 1-3 1 7 1 8 1-10 1-5 1-9 1 1 1 1 1 1 1-4 1 4 1 9 1 7 1-4 1-5 1 8 1 6 1-5 1-10 1-4 1 5 1 4 1-11 1-6 1 9 1 3 1 0 1 3 1 3 1-5 1-5 1 6 1 9 1 4 1-11 1-5 1 3 1 2 1 1 1 4 1-9 1-14 1 3 1 16 1 15 1 0 1-13 1-9 1 1 1 2 1 0 1 3 1 1 1-6 1-4 1 0 1-2 1 6 1 8 1-4 1-7 1 1 1 3 1 4 1 1 1-6 1-1 1 6 1-1 1 1 1 1 1-2 1 2 1 1 1 0 1-1 1-2 1 1 1 0 1 5 1 2 1-3 1 2 1-6 1-6 1-2 1 2 1 2 1 2 1 2 1-3 1-2 1-5 1 0 1 6 1 3 1-1 1 2 1 0 1-4 1-2 1-5 1-2 1 4 1 8 1 7 1-2 1-9 1-10 1 4 1 11 1-4 1 1 1-11 1-6 1 4 1 12 1 11 1 2 1-7 1-4 1-2 M0 1016l1 1 1-1 1-1 1 0 1 2 1 6 1 4 1-2 1-1 1 4 1 2 1-3 1-3 1 2 1 0 1-5 1-3 1-4 1-1 1 1 1 3 1 1 1 3 1 1 1-5 1-6 1 3 1 14 1-11 1-4 1-8 1 8 1 2 1 3 1-2 1 1 1 1 1-3 1 0 1 0 1-2 1-2 1 3 1 1 1-3 1 1 1 0 1 1 1 4 1-3 1-7 1 1 1 2 1 0 1 0 1 0 1 2 1 1 1-4 1-2 1 0 1 12 1-15 1 2 1 4 1 5 1-1 1-6 1-1 1 1 1-2 1 2 1 6 1 5 1-1 1-4 1-1 1 3 1 3 1-3 1-1 1 1 1 0 1-2 1-1 1 2 1 3 1 5 1 0 1-1 1-1 1 0 1 1 1-1 1-3 1-3 1-2 1-5 1-2 1 4 1 3 1 6 1 3 1 6 1-15 1 3 1 1 1-2 1 0 1 2 1-1 1-4 1 0 1 0 1-2 1 1 1 1 1 3 1 0 1-3 1-2 1-3 1-4 1 1 1 2 1-1 1 2 1 0 1 2 1 1 1 1 1-2 1-1 1 6 1 2 1-5 1-3 1-2 1 1 1 2 1-1 1-3 1-2 1-1 1 2 1 5 1 3 1-2 1 2 1-2 1 1 1 2 1 2 1 1 1 0 1-1 1 5 1 7 1-3 1 0 1 6 1 2 1-3 1-1 1-2 1-1 1 4 1 1 1-3 1-1 1 0 1-2 1-3 1-3 1 1 1 4 1-1 1-2 1-2 1-2 1 0 1 1 1-2 1-1 1 1 1 3 1-1 1-5 1-6 1-1 1 5 1 1 1-2 1 0 1 2 1 2 1 0 1-1 1 1 1-2 1 3 1 4 1 4 1 4 1-4 1-9 1-1 1 4 1 2 1 2 1 0 1-8 1-2 1 6 1 2 1 0 1-2 1-4 1-2 1 1 1-2 1 0 1 5 1 2 1-2 1-4 1-2 1-1 1 1 1 2 1 1 1 2 1 3 1 0 1-5 1 0 1-1 1-3 1-4 1 3 1 3 1 0 1-1 1 0 1 4 1-4 1-5 1 0 1-2 1 1 1 11 1 10 1-2 1-3 1 1 1 6 1 0 1-1 1 0 1 2 1 2 1 0 1-3 1-2 1 2 1 1 1 1 1-3 1 0 1 1 1 2 1 7 1 2 1-4 1 0 1-4 1-5 1 4 1 3 1-1 1-1 1 1 1 4 1 4 1 0 1 0 1 1 1-4 1-4 1 1 1 8 1 4 1 0 1-2 1-2 1-1 1-1 1 0 1 4 1 4 1 17 1-23 1-2 1 3 1 6 1-1 1-3 1-3 1-1 1 3 1 3 1-1 1-2 1-1 1-2 1-3 1 0 1-2 1 6 1 0 1 0 1 4 1-5 1-3 1 0 1-1 1-1 1 5 1 3 1-5 1-6 1-1 1-1 1-2 1 1 1 4 1 0 1 3 1 2 1-2 1 0 1 0 1-3 1-4 1 1 1 7 1 8 1 0 1-5 1 0 1 4 1 4 1 1 1 1 1-1 1-1 1 0 1 1 1 0 1 4 1 3 1-3 1-7 1-4 1-1 1-3 1 2 1 7 1 2 1-5 1-5 1 1 1 4 1 7 1 3 1-6 1-7 1-2 1 2 1 0 1-1 1 1 1 1 1 6 1 3 1-2 1-4 1-1 1-1 1-3 1-2 1-3 1 1 1 6 1 1 1 1 1-2 1-6 1 0 1 5 1 1 1 0 1 3 1-3 1-4 1 1 1 6 1-1 1-2 1 6 1 4 1 0 1-5 1-2 1 3 1 7 1 1 1-2 1-3 1-4 1-2 1 4 1 3 1 0 1 3 1 0 1-4 1 0 1 0 1 0 1-2 1-1 1-1 1-3 1 0 1 4 1 1 1-5 1 0 1-1 1 0 1 3 1 1 1 0 1-3 1-1 1-2 1-1 1 2 1 1 1-1 1-3 1-3 1 2 1 2 1 0 1-4 1-3 1-1 1 1 1-3 1-2 1 5 1 2 1-6 1-3 1 1 1 1 1 2 1-1 1 0 1 2 1-1 1-1 1-4 1-4 1 3 1 7 1 0 1-2 1 0 1 0 1 2 1 0 1-8 1-6 1 0 1 3 1 6 1 1 1-6 1-2 1 4 1 1 1-5 1 2 1 3 1 2 1-3 1-2 1-2 1 4 1 8 1 0 1-6 1-5 1-2 1 4 1 4 1 1 1-2 1-1 1 2 1 4 1 6 1 1 1-7 1-4 1 0 1-1 1 0 1 0 1 1 1 3 1 0 1 0 1-3 1-3 1-1 1 2 1 1 1 1 1-1 1-3 1 0 1-2 1 1 1-1 1-2 1 4 1 3 1-1 1-2 1-1 1-1 1 2 1 1 1 0 1 0 1 11 1-7 1 0 1 0 1-1 1-1 1 3 1 3 1 1 1-2 1-2 1 2 1 3 1 1 1-4 1-2 1 6 1 5 1-1 1-5 1-3 1 3 1-3 1-4 1 2 1-1 1 0 1 6 1 5 1 0 1 3 1 5 1 0 1-6 1-5 1-3 1 2 1 5 1 2 1 0 1-1 1-3 1 1 1 3 1 1 1 0 1-3 1-3 1-3 1-4 1-1 1 4 1 2 1-3 1-5 1 0 1 0 1-3 1-2 1 5 1 6 1-1 1-3 1 1 1-2 1-5 1 5 1 7 1 4 1 3 1-1 1-3 1-1 1 0 1-2 1 2 1 5 1 2 1-4 1-2 1 3 1 2 1 0 1-1 1-4 1 0 1 3 1 3 1-1 1-6 1 0 1 3 1-2 1 1 1 6 1-6 1 8 1-1 1 2 1 0 1 0 1-5 1-2 1 1 1 1 1 2 1-2 1-3 1 0 1 1 1 1 1-3 1 1 1 7 1 5 1-5 1-4 1-2 1 0 1-5 1-4 1 2 1-1 1-3 1-3 1 4 1 6 1 1 1 2 1 4 1 2 1 0 1 0 1-1 1 0 1 3 1 5 1 0 1-2 1 2 1 3 1 1 1-4 1 1 1 9 1 5 1-4 1-7 1-1 1-1 1-8 1-5 1 1 1 0 1-1 1 1 1 5 1 2 1-4 1-5 1-5 1 3 1 3 1 2 1 0 1-5 1-2 1 2 1 1 1 0 1 0 1-2 1 0 1 7 1 5 1 4 1 0 1-8 1-7 1-1 1 2 1 3 1 0 1-2 1 2 1 1 1 3 1 1 1 0 1 0 1-2 1-2 1 0 1 8 1 9 1 4 1-3 1-5 1-2 1 2 1-1 1-2 1 0 1 0 1 0 1-1 1 0 1 5 1 7 1-3 1-2 1 2 1-1 1-3 1 2 1 5 1 0 1 1 1 1 1-3 1-1 1 2 1 0 1-5 1 0 1 4 1 6 1 10 1-9 1-4 1 1 1 0 1 0 1 1 1-4 1-3 1 2 1 1 1 4 1 5 1 4 1 2 1-6 1-5 1-1 1 1 1 2 1 4 1-2 1-1 1 5 1 4 1 1 1 0 1 0 1 1 1 1 1-1 1-2 1-4 1-4 1 0 1 2 1 12 1-12 1 4 1-3 1-8 1-2 1 3 1 2 1 0 1 0 1 1 1 0 1-1 1 2 1 6 1 1 1-9 1-4 1 0 1 2 1-3 1-1 1 1 1-3 1-1 1-2 1-4 1 2 1 4 1 3 1-3 1-3 1 4 1 6 1 0 1-3 1-1 1 1 1-2 1-2 1 3 1 7 1 1 1-1 1-1 1-1 1-1 1 3 1 7 1-3 1-6 1 0 1 3 1 0 1-5 1-5 1 3 1 4 1 4 1 3 1-1 1-2 1-2 1 5 1 4 1-3 1-4 1-1 1 0 1-5 1-2 1 2 1 0 1-3 1-1 1-1 1-1 1-3 1-2 1 2 1 1 1-3 1 0 1 0 1-3 1-1 1 1 1 7 1 6 1-3 1-7 1 13 1-17 1 0 1 0 1-4 1 1 1 1 1 4 1-7 1-4 1 1 1 2 1-1 1-1 1-5 1-2 1 7 1 3 1-1 1 0 1 1 1-4 1-2 1 3 1 2 1-2 1 1 1-3 1 0 1 4 1-2 1-4 1 3 1 6 1 1 1-3 1 0 1 2 1-4 1 1 1-1 1-2 1 0 1 2 1 0 1-1 1 2 1 4 1 1 1 2 1 1 1 1 1 0 1-5 1-1 1 1 1 4 1-4 1-11 1-1 1 6 1 3 1-2 1-2 1 0 1-1 1-1 1-4 1-5 1 1 1 1 1 1 1-2 1-3 1 0 1-3 1-4 1 0 1 4 1 5 1 0 1-1 1-1 1-2 1-2 1 4 1 2 1-1 1-1 1 2 1 2 1 2 1 4 1 1 1 1 1 0 1 4 1 3 1 3 1 6 1 3 1 2 1-2 1-4 1 1 1 1 1 0 1-2 1-4 1-3 1-1 1 0 1 3 1 0 1-2 1 3 1-1 1-5 1-4 1 0 1 0 1 6 1 1 1 3 1-2 1-2 1 1 1 1 1 1 1 4 1 2 1-4 1-4 1-2 1 1 1 2 1 1 1 0 1-1 1-7 1 1 1 3 1-2 1-3 1-2 1 0 1 7 1 7 1-4 1-9 1-3 1 3 1 2 1-3 1 0 1 17 1 12 1 7 1 7 1-3 1-2 1 1 1 4 1 2 1 3 1 4 1-4 1-6 1 4 1-7 1-10 1-7 1-5 1-3 1 9 1 3 1 8 1 12 1 11 1 9 1-6 1-6 1-9 1-12 1-6 1-5 1-5 1 4 1 1 1 5 1 7 1 4 1 5 1 7 1-1 1-7 1 3 1 6 1-2 1-5 1-4 1-1 1 0 1-2 1-1 1-5 1-7 1-4 1-2 1 0 1 3 1 4 1 0 1-1 1-1 1-2 1-1 1 0 1 0 1 0 1 2 1-2 1-4 1-1 1 0 1 2 1 1 1 1 1-6 1-5 1 0 1 2 1 7 1 7 1-2 1-5 1 2 1 7 1 0 1 0 1 5 1 5 1-3 1-5 1-1 1-1 1-4 1-2 1 2 1 0 1 3 1 5 1 3 1-5 1-2 1 2 1 3 1 1 1-5 1-4 1-2 1 4 1 5 1 0 1-3 1 2 1 3 1 1 1-3 1-3 1-2 1 4 1 4 1-4 1 1 1 4 1-1 1 0 1 2 1 1 1-2 1-3 1 1 1 2 1 2 1 4 1 4 1 0 1-1 1 3 1 4 1 1 1-2 1-4 1-1 1 0 1-3 1 1 1 0 1-2 1-3 1 3 1 6 1 6 1 0 1-3 1-3 1 20 1-17 1 2 1 4 1 1 1-7 1-8 1-2 1-1 1 3 1 6 1-2 1-4 1 4 1 2 1-5 1-4 1 1 1 2 1 3 1 2 1 1 1-1 1-2 1-6 1-7 1 1 1 2 1 0 1 0 1-9 1 5 1 5 1 0 1-2 1 1 1-1 1-8 1-8 1 0 1 2 1 1 1 2 1-1 1-7 1-3 1 2 1-7 1-7 1 0 1-2 1-3 1-3 1-8 1-1 1 0 1 2 1-2 1 1 1 4 1 4 1-4 1-1 1-2 1-1 1 3 1 3 1 0 1-5 1-4 1 0 1 4 1 3 1 2 1 0 1 1 1-1 1-6 1-8 1-2 1 4 1 6 1 1 1 3 1 3 1 1 1-2 1-5 1-2 1 0 1 0 1-1 1 3 1 1 1-5 1-1 1 1 1 4 1 2 1 0 1-3 1-2 1 3 1 0 1 1 1-5 1-6 1 3 1 9 1 4 1-2 1-4 1-1 1 18 1-8 1-5 1-6 1-1 1 9 1 7 1-2 1-3 1-4 1-3 1 1 1-3 1 1 1 4 1 2 1 0 1-3 1-5 1-2 1 2 1-1 1-3 1 0 1 0 1-2 1 0 1 3 1 6 1 7 1 0 1-7 1-1 1 4 1 0 1 1 1 3 1-5 1-6 1 1 1 5 1 0 1-3 1 2 1 7 1 5 1-4 1 3 1-1 1-4 1 2 1 4 1-3 1-3 1 7 1 8 1 0 1-9 1 12 1-1 1 4 1 4 1-1 1-4 1-2 1 1 1-2 1 2 1 12 1 4 1-2 1-4 1 3 1 3 1-3 1-8 1-6 1-3 1-5 1 1 1 4 1 1 1 2 1 4 1 5 1-7 1 2 1-2 1-4 1-1 1 0 1-4 1-2 1 0 1 5 1 3 1-4 1-3 1-4 1-3 1 4 1 10 1 3 1-6 1-6 1 0 1 1 1 0 1 0 1 0 1-1 1-4 1-3 1-2 1 0 1 1 1 2 1 2 1 2 1 0 1-4 1-1 1 4 1 7 1 5 1-2 1-3 1-1 1-2 1 1 1-5 1 0 1 11 1 1 1-7 1-1 1 0 1-1 1-3 1 2 1 5 1 3 1 2 1 1 1 1 1-5 1-6 1-4 1 3 1 5 1 0 1 1 1-2 1-2 1 0 1 1 1 2 1 4 1 0 1-4 1-1 1 2 1 3 1 6 1 4 1-5 1-7 1-4 1-3 1-2 1 1 1 2 1 2 1 2 1-2 1-3 1 2 1 6 1 3 1 1 1 0 1-3 1-2 1 2 1 2 1-6 1 2 1-6 1 7 1-1 1-1 1-5 1-2 1-3 1-1 1 1 1 2 1 2 1-1 1 1 1 3 1 6 1-3 1-4 1 1 1 2 1-2 1-1 1 7 1 4 1-6 1 1 1 2 1 1 1 0 1-3 1 3 1 4 1-3 1-2 1 1 1 8 1-3 1-1 1-1 1-1 1 2 1-3 1-5 1 3 1 3 1 4 1 4 1-4 1 1 1 4 1 5 1 1 1-3 1-4 1 4 1 5 1 1 1-4 1-3 1-1 1 2 1 3 1-4 1-6 1 2 1 4 1 0 1-4 1-3 1-2 1-4 1 2 1 5 1 1 1 2 1 3 1-1 1 0 1 2 1-3 1-4 1 0 1-2 1-4 1 0 1-3 1-3 1 2 1 1 1-2 1-3 1 3 1 2 1 0 1-2 1 0 1-1 1 2 1 3 1-4 1 0 1 2 1-2 1-1 1 3 1-2 1-7 1-1 1 1 1 0 1 1 1 3 1 2 1 0 1 2 1 1 1-1 1 4 1 4 1-3 1-5 1-1 1 0 1 4 1 1 1-3 1 2 1 2 1-2 1-2 1-3 1 0 1 6 1 5 1-4 1-4 1 0 1 3 1 3 1 3 1 3 1-1 1 0 1-2 1-4 1-4 1 1 1 1 1-3 1-1 1 5 1 0 1-1 1 1 1 1 1-3 1-16 1 8 1 2 1-2 1-4 1-5 1-1 1 1 1 0 1-3 1 1 1 0 1-3 1 4 1-12 1-3 1 2 1 4 1 2 1 1 1-2 1-2 1 3 1-1 1 0 1 1 1-2 1 12 1-10 1 5 1 4 M0 1149l1-5 1 4 1 1 1-3 1 8 1 12 1 16 1 12 1 2 1-8 1-6 1 6 1 0 1-11 1-1 1 4 1 0 1-11 1-3 1 5 1-5 1-9 1 7 1 3 1-1 1 0 1-5 1-2 1 9 1-14 1-11 1 19 1 16 1 1 1 9 1-5 1-29 1-21 1 13 1 17 1-9 1-14 1 4 1 13 1 12 1 9 1-4 1-15 1-6 1-2 1 0 1-4 1 10 1 21 1 1 1 6 1 10 1-11 1-17 1-7 1 0 1 8 1 4 1 4 1-11 1-10 1 3 1 8 1 6 1 0 1-7 1 5 1 8 1-7 1 2 1 5 1-11 1-21 1 1 1 25 1 6 1-7 1-3 1 6 1-6 1-14 1-7 1 2 1-2 1-8 1-7 1 6 1 5 1-3 1 8 1 6 1-7 1-7 1 3 1 3 1-10 1 0 1 6 1 3 1-2 1 4 1 13 1-10 1-20 1 1 1 11 1 2 1-7 1-1 1-7 1 5 1 21 1 7 1-12 1-5 1 2 1-8 1 2 1 8 1 4 1-6 1-6 1-3 1-4 1 2 1-7 1-6 1 6 1 9 1 5 1-1 1 5 1 0 1-12 1-5 1 7 1-9 1-19 1 3 1 7 1-6 1-4 1 3 1 15 1 9 1 5 1 2 1-9 1 1 1 6 1-12 1-6 1-2 1 14 1 14 1-10 1-5 1 9 1-12 1-8 1-3 1 0 1 17 1 13 1-6 1-9 1-5 1-11 1-13 1 5 1 8 1-5 1 10 1 7 1 2 1 4 1 4 1-5 1-9 1 2 1 4 1 1 1 4 1 15 1 14 1 7 1 2 1-11 1-21 1-10 1 5 1 8 1 6 1 11 1 2 1-22 1 9 1-11 1-14 1-1 1 3 1 3 1 20 1 9 1-12 1 4 1 15 1-2 1-6 1 0 1 5 1-9 1-24 1-20 1 7 1 27 1 17 1 8 1-9 1-12 1 9 1 5 1-11 1 3 1 4 1-16 1 0 1 16 1-3 1-16 1 0 1 20 1 15 1 0 1 0 1 1 1-10 1-4 1 5 1-12 1-3 1 10 1 5 1-12 1-12 1-2 1 14 1 11 1-3 1-9 1-2 1-4 1 3 1 11 1 7 1-7 1-7 1-7 1-2 1 3 1 8 1 4 1-5 1 1 1-2 1 1 1-2 1 0 1 7 1 55 1-42 1-2 1-9 1 2 1 1 1-17 1-3 1 17 1 12 1-4 1 5 1 4 1-11 1 0 1 5 1-13 1-6 1 8 1 5 1 7 1-9 1-15 1 6 1 4 1 0 1-1 1-16 1-3 1 13 1 10 1-15 1-4 1-1 1-2 1 3 1 3 1 6 1 5 1-8 1-5 1-2 1-3 1-3 1 7 1 12 1 16 1 16 1-13 1-16 1-9 1 2 1 6 1 27 1-9 1-11 1-11 1 1 1 2 1 12 1 18 1 3 1-4 1-9 1-16 1-13 1 3 1 10 1 14 1 6 1-7 1-2 1 15 1 1 1-14 1-3 1 2 1-4 1-2 1 2 1-2 1-10 1-15 1 6 1 16 1-4 1 4 1 5 1-4 1-1 1 7 1-3 1-18 1-4 1 2 1 0 1 1 1 14 1 10 1 1 1-6 1 0 1 10 1 10 1 4 1-16 1-12 1 15 1 11 1-14 1-15 1 4 1 11 1-8 1-8 1-5 1-9 1-2 1 1 1 11 1 12 1 3 1-5 1-2 1-12 1-7 1 10 1 3 1-12 1-10 1 13 1 14 1 6 1 2 1 3 1 10 1-6 1-23 1-26 1 6 1 29 1 10 1-5 1-9 1-1 1 1 1 0 1 2 1-7 1 0 1 4 1 7 1 1 1-10 1 2 1 7 1 1 1-7 1-2 1 10 1 10 1-3 1-9 1-11 1-13 1 0 1 5 1-1 1 1 1 9 1 14 1 4 1-18 1-5 1 10 1-2 1-2 1 8 1-6 1-10 1-6 1 0 1 5 1 11 1 17 1-7 1-17 1-4 1 10 1 7 1-10 1-13 1-4 1 5 1 19 1 5 1-6 1-7 1-5 1 4 1 8 1-1 1 0 1-1 1 0 1 3 1 1 1-5 1-5 1-10 1-4 1 6 1 11 1 3 1-1 1-8 1-3 1 1 1 7 1-2 1-2 1-6 1-2 1-1 1-9 1 8 1 17 1-1 1-3 1-13 1-8 1 13 1 14 1-1 1-2 1 2 1-2 1 4 1-3 1-4 1 12 1 5 1-10 1-6 1-6 1-1 1 6 1-1 1 1 1-5 1 0 1 12 1 11 1 6 1-10 1-6 1-2 1 5 1 14 1-13 1 4 1-13 1 2 1-1 1 36 1-46 1 19 1 11 1-3 1 4 1 12 1-2 1-28 1-21 1 15 1 13 1-2 1-10 1-3 1 7 1 2 1 3 1 2 1-8 1-7 1 7 1 0 1 1 1-2 1-10 1-5 1-3 1 10 1 12 1 1 1 0 1 2 1-10 1-3 1 15 1 7 1-3 1-10 1-8 1-9 1-6 1 9 1 14 1 5 1-13 1 2 1 6 1 1 1 2 1 5 1-3 1-9 1 5 1-4 1-15 1-12 1 4 1 11 1 0 1-1 1 8 1 6 1-5 1-5 1 3 1 3 1 5 1 18 1 12 1-5 1-16 1-9 1 4 1 11 1 5 1-2 1-17 1 4 1 9 1 3 1 9 1 7 1-9 1-8 1-13 1-12 1 7 1 15 1-3 1-8 1 9 1 3 1 11 1-7 1-20 1-7 1 7 1 16 1 10 1-5 1 1 1 2 1-3 1 2 1 7 1 11 1-4 1-17 1 0 1 8 1-5 1-1 1-9 1 0 1 15 1-6 1-15 1-4 1-3 1 1 1 11 1 4 1-10 1-3 1-5 1-3 1-7 1-1 1 15 1 18 1 2 1-10 1-3 1 14 1 15 1-13 1-17 1-7 1 4 1 7 1-8 1-6 1 19 1 4 1 0 1 1 1-24 1-6 1 16 1 6 1 7 1 9 1 1 1-16 1-23 1-10 1 2 1-1 1 5 1 6 1 9 1 4 1-11 1-10 1 3 1 3 1 5 1 9 1 8 1-21 1-21 1 8 1 26 1 24 1-9 1-23 1-13 1-9 1 3 1 18 1 1 1-11 1 0 1 11 1 0 1-15 1-4 1 10 1-7 1-8 1 12 1 14 1 5 1-7 1-7 1-5 1 1 1-1 1 8 1-2 1-11 1 10 1 11 1-16 1-11 1 11 1 14 1 5 1-7 1-6 1 5 1 6 1-1 1-9 1-12 1 5 1 14 1 11 1 0 1-1 1 5 1 8 1 4 1-18 1 0 1 13 1-2 1-6 1-4 1-8 1 0 1 11 1 11 1 1 1 0 1-13 1-16 1-9 1 1 1 0 1 15 1 11 1-9 1-15 1-11 1-10 1 12 1 17 1 3 1 5 1 9 1-3 1-7 1-7 1-8 1-8 1-16 1-3 1 23 1 15 1-5 1-4 1-6 1 7 1 7 1-5 1-3 1 13 1 11 1 8 1 4 1-14 1-3 1-2 1-16 1 1 1 12 1-4 1-5 1 0 1-4 1 0 1-5 1-9 1-4 1 18 1 12 1-4 1-1 1 13 1 12 1-6 1-13 1-2 1 2 1 1 1 1 1 4 1-11 1-4 1 15 1 3 1-15 1 6 1 20 1 4 1-17 1-4 1-5 1 2 1 7 1-8 1-12 1 2 1 5 1 0 1-7 1-1 1 6 1 4 1 4 1 6 1 2 1-7 1-16 1-11 1 2 1-17 1 58 1-14 1-9 1-14 1-3 1 8 1-1 1-10 1-2 1 12 1 11 1-5 1-11 1 1 1 3 1-1 1 3 1 5 1 7 1 4 1 11 1 2 1-8 1 0 1 1 1-7 1-3 1 4 1 5 1-11 1-33 1 4 1 13 1 11 1-2 1-11 1 6 1 12 1-3 1 4 1 6 1-3 1 0 1 2 1-6 1-3 1-7 1-5 1 12 1 9 1-9 1-10 1 0 1 3 1 2 1 0 1 10 1 7 1-1 1-7 1-4 1-5 1 1 1-5 1-1 1 17 1 17 1 0 1-13 1-7 1 0 1-11 1-8 1-4 1 9 1 6 1 2 1 5 1-2 1 1 1-3 1-17 1-16 1 10 1 9 1-2 1-2 1 0 1 14 1 8 1-5 1-7 1-6 1-8 1 2 1 8 1-2 1 1 1 8 1 3 1-11 1-9 1-6 1-2 1 2 1-5 1 11 1 17 1-11 1-19 1 12 1 22 1 5 1-2 1-22 1-15 1 12 1 9 1-3 1-10 1-5 1 2 1 9 1 17 1 6 1-6 1-4 1-10 1-9 1 2 1 14 1 7 1 10 1 4 1-8 1-11 1-4 1 11 1 9 1 0 1-13 1-16 1 3 1 23 1 8 1-12 1-5 1 3 1 2 1-2 1-3 1-2 1-2 1 4 1 6 1-4 1-5 1-2 1-7 1-3 1 5 1 13 1 5 1-9 1-3 1 8 1-3 1-4 1 14 1 6 1-9 1-4 1-1 1 0 1 1 1-4 1 0 1-3 1-9 1-1 1 2 1 5 1 5 1 5 1-1 1-3 1-2 1 0 1 12 1 5 1-6 1-6 1 10 1 3 1-2 1-1 1-5 1-11 1 0 1 25 1 10 1-8 1 4 1 1 1-9 1-5 1-2 1-8 1-4 1-3 1-1 1 7 1 11 1 0 1-10 1-2 1-5 1-2 1 10 1 0 1-4 1-15 1 7 1 18 1 6 1-1 1 4 1 8 1-9 1-12 1-9 1 5 1 17 1-4 1-22 1 4 1 17 1 1 1-9 1-14 1 5 1 6 1-2 1-2 1 9 1 6 1-13 1-5 1 2 1 11 1 18 1-2 1-15 1-8 1-5 1 3 1 7 1 8 1-10 1-22 1-10 1 16 1 18 1-15 1-14 1 4 1 10 1 7 1 4 1 9 1-3 1 1 1 5 1-5 1-4 1-5 1-10 1 0 1 4 1-19 1 16 1 13 1 2 1-8 1-2 1 11 1-7 1-10 1-5 1-1 1 11 1 9 1-5 1 3 1-12 1-2 1 21 1 7 1-14 1-8 1-10 1-5 1 1 1 3 1 0 1 2 1 0 1 1 1-2 1-6 1-4 1 2 1 13 1 4 1-8 1-7 1-2 1 1 1-4 1-12 1 1 1 18 1 9 1-2 1 7 1 5 1 4 1 4 1-12 1-15 1-11 1 1 1 12 1 7 1-3 1-1 1 4 1-4 1-9 1 5 1 2 1 7 1-1 1-6 1 7 1 0 1 36 1-33 1-18 1-8 1 14 1 9 1 29 1-39 1-8 1 13 1 1 1-13 1 0 1 14 1 3 1-5 1 3 1 7 1 1 1-4 1 5 1 0 1-1 1-3 1-12 1-14 1 5 1 12 1 0 1 7 1 4 1 1 1-5 1 3 1 6 1 1 1-3 1 7 1 1 1-11 1-1 1 0 1 5 1 5 1 3 1-8 1-2 1 6 1-4 1 2 1 13 1 6 1-15 1-18 1 8 1 28 1-7 1 5 1 0 1 1 1 1 1-17 1-17 1-5 1 11 1 13 1 6 1 3 1-8 1-2 1 9 1-2 1-11 1-22 1-4 1 8 1 7 1 10 1 5 1-4 1-10 1-3 1 12 1 13 1-9 1 3 1-14 1-6 1 13 1 3 1-13 1 3 1 11 1-1 1 1 1 6 1 0 1-5 1-4 1 2 1 2 1-6 1-17 1 11 1 12 1-3 1 1 1 3 1 11 1 8 1-1 1 2 1-22 1-22 1 8 1 14 1 5 1 0 1 1 1 4 1 7 1-3 1-1 1-1 1-23 1-16 1-1 1 3 1 19 1 18 1 5 1-17 1-7 1 15 1 8 1-5 1-11 1-1 1 7 1 4 1 6 1 2 1-7 1-9 1-3 1 21 1 9 1-12 1-9 1 1 1 1 1-4 1-2 1 9 1-2 1-18 1-4 1 2 1 0 1-1 1-5 1 14 1 20 1 7 1-2 1-2 1 0 1-2 1 2 1 8 1 6 1-2 1-15 1-15 1 4 1 2 1-7 1 0 1 10 1 0 1-9 1-8 1 1 1 9 1 15 1 9 1-16 1-16 1 10 1 4 1-13 1-3 1 14 1 13 1 6 1 2 1-11 1-10 1 0 1 10 1 1 1-14 1-22 1 2 1 22 1 8 1-5 1 0 1 3 1-6 1-4 1-3 1 4 1 2 1-13 1-9 1 1 1 20 1 24 1 12 1-14 1-5 1 7 1-3 1-6 1-9 1-15 1 5 1 2 1-5 1 3 1 6 1 1 1 12 1 8 1-11 1-7 1-7 1 0 1 17 1 6 1-10 1-4 1-1 1 0 1 0 1-3 1 12 1 7 1 8 1-6 1-19 1-16 1 4 1 14 1 3 1 1 1-3 1 7 1 1 1-7 1-8 1 2 1 8 1-4 1-8 1-1 1 6 1 17 1-3 1-15 1-8 1-4 1-6 1-48 1 60 1 10 1-15 1 0 1 3 1 5 1-7 1 6 1 0 1 12 1 6 1-6 1-14 1-18 1-8 1 3 1 23 1 7 1-13 1 0 1-6 1-9 1 9 1 15 1 7 1-1 1 9 1 10 1-10 1-14 1 9 1 21 1 7 1-11 1-6 1 3 1 4 1-6 1-14 1-18 1-11 1-7 1 7 1 19 1 14 1 2 1 1 1-4 1-18 1 2 1 13 1-3 1-4 1-3 1-13 1-5 1 11 1 7 1-13 1 5 1 19 1-8 1-21 1-11 1 10 1 11 1 1 1-11 1-1 1 7 1 2 1 8 1-4 1-5 1 2 1 7 1-3 1-1 1-6 1-5 1 0 1 12 1 6 1-4 1 3 1-11 1-11 1 1 1 0 1-2 1-8 1 0 1 16 1 1 1-5 1-4 1-8 1 7 1 13 1-5 1 9 1-12 1-13 1 9 1 16 1 15 1-21 1 17 1 8 1-24 1-17 1 10 1 7 1 1 1 12 1-2 1-23 1-8 1 14 1 3 1-16 1-5 1 3 1 1 1 8 1 7 1-4 1 3 1-3 1-10 1-4 1 11 1 5 1-1 1 10 1 4 1-12 1-10 1 8 1 12 1 1 1-9 1-1 1 8 1 4 1-6 1-14 1 3 1 6 1-6 1-3 1 5 1 13 1 5 1-1 1 10 1-7 1-13 1-3 1 1 1 3 1-8 1-10 1-5 1-12 1-9 1 12 1 18 1 4 1 1 1-2 1 3 1 6 1-2 1-13 1-2 1 15 1 13 1-6 1-11 1-4 1-1 1 4 1 17 1 8 1-19 1-24 1 3 1 18 1 4 1 9 1 2 1-8 1 2 1 4 1 1 1-9 1-6 1 0 1 6 1-4 1-18 1 0 1 21 1 9 1-9 1-15 1-5 M0 1272l1 0 1-1 1 4 1 2 1-2 1 0 1-1 1-2 1-3 1 1 1 5 1 3 1 3 1-2 1-3 1-1 1 1 1 0 1 1 1-2 1-2 1 1 1 3 1-1 1-2 1 0 1 0 1 0 1-1 1-1 1-2 1-2 1 1 1 1 1 4 1 1 1 0 1 0 1-1 1 1 1 1 1-2 1-3 1 0 1 1 1 2 1 2 1-4 1-2 1 3 1 0 1-2 1-2 1-3 1 0 1 6 1 4 1-3 1 2 1 11 1 9 1-2 1-5 1-8 1-4 1 1 1-6 1-19 1-20 1-1 1 16 1 9 1-5 1-2 1 23 1 39 1 19 1-4 1-25 1-19 1-6 1-1 1-9 1-15 1-9 1 1 1 19 1 30 1 24 1 7 1-9 1-24 1-29 1-23 1-10 1 6 1 19 1 31 1 39 1 7 1 0 1 0 1-34 1-32 1-11 1 1 1-10 1-26 1 0 1 0 1 35 1 17 1-17 1-4 1 21 1 25 1 7 1-4 1-4 1-6 1-1 1 3 1-2 1-1 1-5 1-19 1-22 1-9 1 11 1 28 1 23 1 8 1-4 1-10 1-10 1-10 1-9 1 1 1 11 1 15 1 5 1-11 1-16 1-5 1 5 1 11 1 12 1 7 1-8 1-18 1-12 1 4 1 17 1 15 1 2 1-12 1-15 1-6 1 3 1 7 1 10 1 8 1-1 1-7 1-5 1-5 1-6 1-3 1 4 1 7 1 4 1 3 1 1 1 2 1-4 1-4 1 1 1-4 1-10 1-9 1 5 1 13 1 5 1 4 1 2 1-1 1-3 1-6 1-5 1-3 1 5 1 7 1 2 1 1 1 1 1 2 1 0 1-3 1-5 1-6 1-4 1 3 1 7 1 7 1 2 1-4 1-5 1-1 1 0 1 1 1 0 1 0 1 1 1 2 1 1 1-1 1-2 1-9 1 7 1 0 1 2 1 2 1 0 1-1 1-4 1 0 1 0 1 0 1 3 1 0 1-4 1 0 1 2 1 3 1-2 1-3 1-2 1 2 1 2 1 2 1 2 1 2 1-1 1-4 1-2 1 1 1 3 1 1 1-2 1-4 1-2 1-2 1-1 1 2 1 4 1 5 1 0 1-2 1 1 1 2 1 1 1-1 1 0 1 1 1 1 1 0 1-2 1-1 1 1 1 1 1 0 1-3 1-1 1 2 1-2 1-3 1-1 1 0 1 1 1 2 1 2 1-3 1 0 1 4 1-2 1-5 1 2 1 2 1-2 1 0 1-2 1-2 1 3 1 6 1 2 1-2 1-1 1 0 1 0 1-1 1-1 1 1 1 1 1-1 1-2 1 2 1 1 1-3 1-2 1-1 1-2 1-1 1 5 1 3 1 0 1 1 1 1 1 2 1 1 1 3 1 1 1-3 1-1 1-1 1-4 1-1 1 0 1-1 1 4 1 1 1-5 1 0 1 4 1 0 1-4 1 1 1-2 1-2 1 1 1 2 1 1 1 1 1-1 1 0 1 1 1 2 1 2 1-6 1 0 1-1 1 2 1 3 1-1 1-4 1-2 1 1 1 1 1 0 1 3 1 3 1-1 1-2 1-2 1 1 1 1 1 0 1 2 1-2 1-2 1 1 1 1 1-2 1 0 1 0 1 1 1 0 1 1 1 2 1 0 1 0 1 1 1-1 1-1 1 0 1 2 1 3 1 2 1-7 1 0 1-1 1 3 1 1 1-2 1-4 1-1 1-2 1 1 1 0 1 3 1 3 1-2 1-1 1 1 1 1 1-2 1 2 1-2 1-2 1 3 1 5 1 3 1-3 1-5 1-2 1 0 1 3 1 1 1-1 1-1 1-3 1-1 1 0 1-1 1 1 1 3 1 0 1 1 1 4 1 2 1-4 1-6 1 0 1 1 1 0 1 0 1 1 1 2 1-2 1-4 1 0 1 2 1 1 1 2 1 0 1 0 1 0 1 1 1-1 1-3 1 1 1 5 1-2 1-3 1 2 1 2 1 5 1 1 1-3 1-3 1-2 1 2 1 0 1 1 1-3 1-4 1 1 1 2 1 1 1 0 1 1 1 2 1-1 1-2 1-1 1 4 1 3 1-2 1-3 1-1 1 2 1-1 1 1 1-2 1 1 1 0 1 1 1 1 1 0 1-3 1 1 1-2 1-3 1 0 1 3 1 3 1-1 1 1 1 3 1 2 1-1 1-1 1-4 1-4 1-1 1 0 1 1 1-1 1 4 1 5 1 0 1 0 1-1 1-4 1 0 1 0 1 0 1 0 1 2 1 4 1 0 1-2 1-2 1-6 1-1 1 7 1 5 1-3 1-5 1 3 1 1 1-3 1 1 1 1 1 0 1 4 1 1 1-2 1-3 1 1 1 3 1-1 1-2 1-5 1-2 1 0 1 2 1 3 1-1 1-1 1 2 1 2 1 0 1 2 1 1 1-1 1-2 1-2 1 0 1 1 1 1 1-1 1-2 1 0 1 4 1 3 1-2 1-2 1 1 1 2 1-1 1-3 1 0 1-1 1 0 1 3 1 0 1 0 1 1 1-3 1-1 1 0 1-2 1-1 1 1 1 2 1 1 1-3 1-3 1 2 1 3 1 0 1-2 1-1 1 2 1 3 1-1 1-3 1-1 1 1 1 2 1-1 1-1 1-1 1 0 1 3 1 2 1 0 1 1 1 0 1 3 1 4 1-1 1-5 1-3 1 0 1-8 1 3 1 0 1 2 1-1 1 1 1 2 1-2 1-1 1 1 1-1 1 1 1 3 1 2 1 0 1-4 1-1 1 0 1 3 1 1 1-2 1 0 1-2 1 0 1 3 1 2 1-1 1-1 1-1 1-3 1-3 1 2 1 3 1 1 1 2 1 3 1-1 1-3 1 1 1 0 1 1 1 0 1-1 1-2 1-1 1 0 1-1 1 0 1 0 1-1 1 1 1 2 1 1 1 4 1 0 1-3 1 0 1 1 1-1 1-1 1 0 1-1 1 1 1 2 1-2 1-3 1 0 1 1 1-1 1 0 1 1 1 2 1 2 1-1 1-2 1-2 1 1 1 4 1 0 1-1 1-2 1 0 1-1 1-1 1 3 1-1 1 1 1 2 1 3 1 2 1-3 1-1 1-2 1 0 1 2 1-1 1-3 1 1 1 2 1 1 1-3 1 0 1 1 1-1 1 0 1 0 1 0 1 0 1-6 1-1 1 5 1 3 1 0 1-2 1 0 1-1 1-1 1 0 1 1 1 4 1-1 1-2 1-1 1 0 1 1 1 0 1 0 1 0 1 1 1 0 1-3 1 2 1-1 1-1 1 2 1 2 1-3 1-1 1 0 1 3 1 2 1 0 1 1 1 1 1-1 1 0 1-1 1 1 1-2 1-4 1 3 1 2 1-2 1 0 1-1 1-2 1 0 1 1 1 2 1 1 1-1 1-2 1-7 1 7 1 1 1-1 1 0 1 1 1-1 1 3 1 1 1 1 1-2 1-2 1-1 1-2 1-1 1 3 1 0 1 0 1 0 1 2 1 0 1-3 1-4 1-1 1 3 1 2 1 2 1 1 1 0 1-1 1-2 1-1 1 3 1 4 1 1 1-4 1-3 1 0 1 1 1-1 1 0 1-1 1 0 1 1 1 3 1 3 1 0 1-2 1-3 1-1 1 3 1 2 1-2 1 0 1 0 1 1 1-1 1-4 1-1 1 2 1 3 1 2 1 0 1-1 1-1 1 0 1 2 1 1 1 0 1-3 1-2 1 1 1-1 1 3 1 5 1-1 1-3 1 1 1 1 1-2 1-1 1 2 1 0 1-2 1-3 1 3 1 2 1-4 1-2 1 0 1 1 1 3 1 3 1-1 1 0 1-3 1 0 1 0 1 0 1 2 1 2 1-1 1-1 1 0 1 0 1 1 1-1 1-2 1-2 1 0 1 1 1 1 1 0 1 1 1 2 1 1 1 0 1 0 1-1 1-2 1 0 1 0 1-1 1-2 1-2 1 1 1 5 1 1 1-3 1-2 1 4 1 1 1-2 1 0 1 3 1 2 1 1 1-1 1-2 1 0 1 3 1 1 1-4 1-8 1-1 1 5 1 0 1-3 1-1 1 2 1 1 1-2 1 0 1-2 1-2 1 6 1 5 1-1 1-1 1-1 1-3 1-2 1-1 1 0 1 2 1 3 1 0 1-2 1 0 1 0 1 2 1 2 1 5 1-1 1-2 1 0 1-2 1 0 1-1 1-1 1-1 1-1 1 1 1 2 1 2 1 1 1-4 1-6 1 2 1 3 1 3 1-1 1-2 1 0 1 0 1 1 1 2 1 3 1 1 1-1 1-4 1-2 1 0 1 0 1 1 1 4 1 3 1-1 1-2 1-1 1 4 1 1 1-4 1-3 1-1 1-2 1 0 1 1 1 3 1-1 1-4 1 0 1 5 1 0 1 0 1 0 1-1 1 3 1 1 1-1 1 2 1 0 1-4 1-1 1 2 1 0 1-6 1-5 1 4 1 5 1 0 1-1 1 0 1 1 1 2 1-3 1 0 1 3 1-1 1-2 1 1 1 3 1 0 1 0 1-1 1-1 1-3 1-1 1 1 1 2 1 4 1 2 1-3 1-5 1 0 1 3 1 2 1 0 1-1 1-3 1-2 1 3 1 5 1-2 1-1 1 3 1 1 1-1 1-1 1 0 1 2 1-2 1-5 1-2 1 2 1 3 1-1 1-1 1 0 1 3 1 1 1-1 1 0 1-8 1 6 1 0 1 1 1 2 1 3 1 1 1-3 1-2 1-1 1-2 1 0 1 2 1 0 1 0 1 0 1-2 1-2 1 1 1 4 1 1 1 0 1 0 1-1 1-1 1 1 1-1 1-1 1-3 1-2 1 2 1 2 1 0 1-2 1 3 1 5 1 1 1-3 1-1 1-2 1 2 1 3 1-1 1-3 1-2 1 0 1 1 1 3 1 1 1-1 1-1 1 1 1-3 1-2 1 4 1 1 1-1 1-1 1-4 1 1 1 4 1 2 1 4 1 1 1-3 1-1 1 2 1-3 1-4 1-1 1 1 1 3 1 2 1 1 1-3 1-3 1 1 1 4 1 0 1-5 1-4 1 2 1 4 1 2 1 1 1-2 1-2 1 1 1 3 1 1 1-2 1 1 1 1 1-2 1-1 1 1 1-2 1-2 1-1 1 2 1 2 1 0 1-1 1-1 1 1 1 3 1-2 1-1 1-1 1-2 1-2 1 0 1 2 1 3 1 0 1-2 1 0 1 2 1 1 1 1 1-1 1-2 1-2 1-1 1 2 1 2 1 2 1 2 1-1 1-2 1 0 1 1 1 2 1 0 1 1 1-2 1-2 1 1 1 1 1-1 1-1 1-1 1 1 1 0 1-1 1-1 1-1 1-3 1 2 1 4 1 0 1-2 1 0 1 2 1-2 1 2 1 0 1-2 1-1 1 2 1 2 1-1 1-1 1 5 1 3 1-3 1-5 1-1 1 2 1 3 1 0 1-2 1-2 1 0 1 4 1 3 1-4 1-4 1-1 1-1 1 0 1 1 1 0 1 0 1 2 1-1 1 0 1 3 1 5 1 1 1 0 1-1 1 0 1-1 1 1 1 0 1-3 1-2 1-1 1 3 1 2 1-1 1 0 1-1 1 1 1-1 1-1 1-1 1 1 1 1 1 1 1-1 1-1 1-1 1 0 1-1 1-2 1-8 1 8 1 1 1 1 1 0 1-1 1 5 1 0 1-2 1-3 1 2 1 1 1-1 1 1 1 0 1 0 1 1 1 0 1 0 1 2 1 2 1-2 1-3 1 0 1 2 1-1 1 1 1 1 1 0 1-3 1-4 1-1 1 3 1 3 1 1 1 0 1 1 1-1 1-1 1 3 1 1 1-2 1-1 1 0 1 0 1-1 1 0 1 0 1 0 1-1 1-3 1-2 1 2 1 4 1 10 1-5 1-4 1-3 1-2 1 1 1 2 1 0 1-2 1 1 1 1 1 3 1 3 1-4 1-4 1 3 1 0 1-14 1 15 1-2 1-1 1 1 1-1 1 0 1 2 1 1 1-3 1-1 1 2 1 2 1 2 1-1 1-4 1-2 1 1 1 3 1 3 1 0 1-1 1 1 1 2 1-1 1-1 1-2 1 0 1-1 1-1 1 1 1 2 1 0 1 0 1 0 1-1 1-2 1-2 1 1 1 1 1 0 1 1 1 0 1-1 1 4 1 2 1-1 1-2 1-4 1 2 1 3 1 1 1 1 1 2 1-3 1-5 1-3 1 1 1 2 1 2 1 1 1-1 1-1 1 0 1 1 1 0 1-2 1 1 1 1 1 0 1 2 1 2 1-1 1 0 1 3 1 1 1-3 1-2 1 1 1-3 1-3 1 2 1 4 1-3 1-1 1 2 1 0 1-1 1-3 1 1 1 2 1 0 1 2 1 2 1 0 1-1 1-1 1-1 1-1 1 2 1 2 1-1 1-4 1 0 1 1 1 0 1-3 1-1 1 3 1 4 1 4 1 0 1-4 1-4 1 1 1 2 1-1 1 0 1 2 1 0 1-1 1-1 1-2 1 1 1 3 1 3 1-3 1-3 1 1 1 9 1-2 1-1 1 0 1-3 1-2 1-3 1-5 1 4 1 5 1-1 1-3 1 0 1 1 1 1 1 1 1-1 1 0 1 1 1-3 1 1 1 0 1 1 1 2 1 0 1-2 1-2 1-2 1 0 1 0 1 1 1 2 1 2 1 1 1 1 1-3 1-3 1 0 1 5 1 3 1-2 1-3 1-1 1-1 1 0 1 3 1 2 1 2 1-1 1-1 1 1 1-1 1-5 1-2 1 3 1 5 1 2 1 0 1-1 1-2 1 1 1 4 1 0 1 0 1 0 1-5 1-1 1-1 1 2 1 0 1-1 1-2 1 0 1 0 1 2 1 3 1 1 1-4 1-1 1 0 1 2 1 0 1-2 1-2 1 2 1 3 1 1 1-1 1-1 1 0 1 1 1 2 1-3 1-2 1 2 1 2 1 0 1-2 1-2 1-3 1 4 1 1 1-1 1-3 1 1 1 4 1 1 1 1 1 2 1-2 1-4 1 1 1 3 1 1 1 0 1-11 1 8 1 0 1 1 1 8 1-10 1-3 1 0 1 0 1-1 1 8 1 1 1-1 1 0 1 2 1-3 1-4 1 1 1 2 1-3 1-3 1 0 1 1 1 3 1 2 1 1 1 1 1 1 1-1 1 1 1 1 1-3 1-3 1-3 1 1 1 3 1 1 1 0 1-1 1 0 1 1 1 1 1-1 1-1 1-4 1 0 1 3 1 1 1 0 1-2 1 0 1 0 1 3 1-1 1 0 1 2 1 0 1-2 1 2 1 2 1-1 1 0 1-2 1-1 1 3 1 1 1 0 1 0 1-2 1-1 1 2 1 0 1 0 1 2 1 2 1 4 1 0 1-6 1-2 1-1 1-2 1-1 1-3 1 1 1 3 1-1 1 0 1 0 1-1 1 1 1 3 1 0 1 1 1 2 M0 1368l1-1 1 3 1 4 1 2 1 3 1 4 1 1 1-5 1-6 1-4 1 0 1 2 1 6 1-9 1 0 1 1 1-2 1 4 1 3 1-5 1-3 1 4 1 5 1-4 1-5 1 6 1 10 1 3 1-4 1-9 1-5 1 4 1 4 1 5 1 4 1-2 1-2 1-1 1-5 1-4 1 3 1 6 1 0 1-1 1 2 1-4 1-5 1 3 1-2 1-3 1 2 1 1 1 0 1-4 1-9 1 3 1 9 1 4 1-19 1 12 1 3 1 7 1-3 1-44 1 22 1 9 1 10 1 7 1 6 1-3 1-10 1-3 1 0 1-4 1-3 1 7 1 11 1 8 1-4 1-7 1-3 1-2 1-3 1 0 1 3 1-7 1-10 1 5 1 9 1-1 1-1 1 4 1 5 1 6 1 6 1 5 1 2 1 2 1 2 1 4 1 3 1-14 1-21 1-4 1 6 1 69 1-79 1-29 1 21 1 19 1 24 1 4 1-10 1-15 1-6 1 3 1 0 1 1 1 0 1 2 1-5 1 1 1 17 1-8 1-3 1-5 1-10 1-6 1 1 1 3 1 2 1 1 1 0 1 2 1 0 1 0 1 1 1 3 1 2 1-3 1 3 1 6 1-2 1-6 1 1 1 5 1 1 1 0 1-5 1-10 1 0 1 5 1 1 1 2 1 5 1 5 1-2 1-1 1-4 1-7 1-5 1 8 1 5 1-6 1-3 1 3 1 6 1-7 1-9 1-6 1 30 1-18 1-5 1-4 1 8 1 7 1 3 1 0 1 4 1 6 1-5 1-7 1-6 1-3 1 1 1 4 1-2 1-6 1 0 1 11 1 8 1 0 1-2 1 2 1 2 1 1 1 0 1-5 1-6 1 1 1 6 1-2 1-1 1-1 1-3 1 1 1 4 1-2 1-3 1-1 1-1 1 3 1 4 1 3 1 1 1-4 1-2 1 4 1 2 1 1 1-2 1 0 1 0 1 12 1-20 1 1 1 6 1 5 1-4 1-4 1-6 1-2 1 10 1 6 1-4 1-8 1 1 1-1 1-3 1 2 1 2 1-2 1-6 1-1 1 0 1 2 1 8 1 7 1 0 1 2 1 2 1-5 1-10 1-5 1 5 1 2 1 2 1 4 1-3 1-4 1 1 1 3 1 4 1 0 1-1 1-5 1-3 1 0 1 2 1 4 1 1 1-4 1-4 1-4 1-3 1 1 1 2 1 4 1 1 1 2 1 7 1 2 1-10 1-8 1 5 1 8 1 4 1-4 1-2 1 6 1 2 1-4 1 0 1 6 1 3 1-9 1-6 1 3 1 3 1-1 1 3 1 6 1 1 1-8 1-7 1-5 1-5 1 3 1 8 1 10 1 9 1-1 1-4 1-4 1-9 1-5 1 1 1 8 1 6 1-6 1-5 1 3 1 5 1 1 1-5 1-8 1-2 1 5 1 6 1 1 1-5 1 1 1 2 1-1 1-6 1 0 1 7 1-3 1-6 1 3 1 0 1 1 1-1 1 0 1 5 1 4 1 4 1-1 1-2 1 2 1 0 1-10 1-5 1 20 1-6 1 1 1-4 1-6 1-1 1 6 1 0 1-3 1 1 1 1 1-1 1 22 1-24 1-3 1 1 1 5 1 3 1 3 1-3 1-12 1-5 1 8 1 8 1-5 1-3 1 8 1-2 1-10 1 0 1 4 1 1 1 2 1 4 1 2 1 2 1 0 1-1 1-20 1 1 1-3 1 6 1 8 1-3 1-10 1 4 1 6 1 5 1 1 1 4 1 5 1-4 1-3 1 2 1-2 1-7 1-6 1-1 1 2 1 7 1 6 1 2 1 1 1-7 1-1 1-1 1-2 1 6 1 6 1 0 1-4 1-2 1 1 1 8 1 2 1-7 1-7 1-4 1 6 1-3 1-1 1-3 1 12 1 2 1 0 1-3 1 1 1 5 1-4 1-11 1-1 1 2 1 4 1 5 1-3 1-2 1-3 1 2 1-6 1-19 1 21 1 4 1-1 1 0 1-11 1 16 1 6 1 0 1-5 1-2 1-1 1 2 1 1 1-3 1-5 1 4 1 6 1 1 1 10 1-17 1 2 1-6 1-8 1 5 1 7 1-6 1-6 1 4 1 2 1 0 1 0 1-1 1 3 1 7 1 6 1 0 1-2 1-7 1-9 1 0 1 3 1-6 1 1 1 7 1-2 1 1 1-15 1 20 1 0 1 0 1 0 1 2 1 5 1 0 1-5 1 2 1-3 1-2 1 1 1-4 1 0 1 5 1-9 1-14 1-1 1 14 1 10 1 2 1-9 1-3 1 8 1 9 1 1 1-8 1-4 1 4 1 5 1-5 1-3 1-9 1 13 1 4 1 5 1-3 1-7 1-4 1 1 1 4 1-1 1-5 1-3 1 0 1 2 1 4 1-2 1 3 1 1 1-7 1-2 1 5 1 4 1 0 1 2 1 0 1-5 1-2 1 4 1 4 1 2 1-3 1-12 1-4 1 8 1 4 1-1 1-1 1 3 1 1 1 2 1 2 1-4 1-3 1 4 1 5 1-7 1-5 1-4 1 3 1 7 1 0 1 1 1-1 1-3 1-7 1 2 1 9 1-2 1-8 1-6 1-5 1 17 1-10 1 5 1 8 1-4 1-6 1 2 1 6 1 0 1-8 1-4 1 5 1 0 1-1 1 5 1-1 1-1 1-2 1 2 1 6 1-4 1-4 1 6 1 4 1 0 1-1 1-2 1 2 1 1 1 1 1 4 1-3 1-4 1-2 1-1 1 6 1 5 1-3 1-7 1-1 1 4 1-1 1-3 1 2 1 5 1 3 1-5 1-7 1-6 1 1 1 8 1 1 1 0 1 4 1-1 1-2 1 0 1-1 1 2 1-1 1-5 1-2 1 2 1 4 1-2 1-2 1 5 1 2 1-2 1-2 1-3 1 1 1 0 1-7 1-5 1 4 1 6 1-1 1-2 1-1 1 0 1 4 1 7 1 5 1-4 1 2 1 8 1 0 1-4 1-4 1-2 1 0 1-2 1-1 1 5 1-1 1-4 1-6 1-9 1-7 1 0 1 9 1 2 1 2 1 1 1-3 1 4 1 5 1 0 1-4 1-6 1 8 1 4 1-4 1 2 1-1 1 0 1 0 1-3 1 3 1 1 1 2 1 0 1-3 1-3 1-1 1-3 1-2 1 0 1 4 1 6 1 6 1-10 1-5 1 8 1 3 1 0 1-3 1 1 1-7 1 4 1 8 1-2 1-4 1 3 1-2 1-8 1 1 1 8 1 6 1 4 1-3 1-4 1-4 1-2 1 1 1 1 1 0 1-3 1-4 1 3 1 2 1 5 1 3 1-2 1-4 1 2 1 0 1-6 1 0 1 7 1-2 1-7 1-5 1-6 1-4 1 4 1 6 1 8 1 9 1-3 1-5 1 0 1 2 1 7 1 1 1-5 1 4 1 7 1 5 1-9 1-13 1 1 1 7 1 3 1 0 1-3 1 1 1 4 1-2 1 1 1 3 1-5 1-7 1-3 1-2 1 0 1 3 1-3 1 2 1 2 1 5 1 5 1-3 1-4 1-4 1 2 1 4 1-2 1 1 1 22 1-24 1 1 1-4 1-2 1-3 1-1 1 1 1 7 1 7 1 2 1-3 1-5 1-4 1-2 1 5 1 7 1-3 1-4 1-1 1 1 1 4 1-4 1 0 1 9 1 3 1-6 1-2 1 2 1-1 1-2 1 4 1-5 1-9 1-3 1 3 1-5 1-1 1 3 1 3 1 3 1 2 1-8 1-7 1 4 1 2 1 0 1 0 1 4 1 5 1 4 1 2 1-3 1-4 1 3 1 0 1 1 1 3 1-1 1-7 1-2 1 9 1 7 1 2 1 1 1 0 1-5 1-6 1-3 1-4 1 2 1 5 1 2 1-4 1-4 1 0 1-2 1-8 1 2 1 16 1 6 1-3 1-6 1-8 1-3 1 4 1 2 1 5 1-3 1-14 1 7 1-3 1 5 1 6 1-3 1-2 1-1 1 4 1 6 1 1 1-5 1-7 1 0 1 2 1 1 1 3 1 11 1 6 1-8 1-7 1-2 1-6 1 3 1 6 1-1 1 3 1 4 1-1 1-4 1 0 1 5 1-2 1-8 1 4 1-4 1-4 1 3 1 7 1 4 1-3 1-4 1 1 1 0 1 1 1 4 1-2 1-3 1-8 1 0 1 2 1 1 1 5 1-2 1-9 1-1 1 6 1 2 1-1 1 9 1 8 1-3 1-9 1-8 1 0 1 3 1 5 1 5 1-3 1-2 1 4 1 0 1-9 1-4 1 3 1 3 1 1 1 5 1 2 1-3 1-5 1-1 1 9 1 8 1-1 1-4 1-8 1-4 1 4 1 2 1-4 1-8 1-1 1 8 1 8 1 5 1-17 1 3 1 3 1 0 1 2 1 0 1-6 1-3 1-1 1 0 1 1 1 6 1 5 1-5 1-6 1 0 1 2 1 2 1-1 1-2 1 3 1 7 1 3 1-1 1 2 1-4 1-11 1-9 1-6 1 5 1 8 1 2 1 2 1 2 1 1 1-21 1 23 1 1 1 1 1 0 1 0 1 4 1-2 1-3 1-4 1-4 1-21 1 17 1-2 1 6 1 9 1-1 1-6 1-2 1 3 1 4 1 1 1-1 1 3 1 4 1-1 1-5 1-8 1 3 1 8 1 2 1 0 1-3 1-4 1-9 1 0 1 3 1-5 1 0 1 13 1 8 1-8 1-8 1-3 1-4 1 0 1 10 1 5 1-27 1 11 1-2 1 11 1 6 1-3 1-11 1-1 1 15 1 10 1-1 1-4 1-3 1-1 1 2 1 7 1-3 1-11 1-3 1-4 1 4 1 6 1 5 1-3 1-1 1 0 1-5 1 0 1 8 1 0 1-5 1-4 1 0 1 1 1 3 1 0 1 0 1 3 1 5 1 0 1-5 1-2 1 0 1 0 1 0 1-1 1-6 1-7 1-5 1 5 1 14 1 13 1-1 1-17 1-11 1 8 1 11 1 1 1-7 1-3 1 1 1-1 1-2 1 3 1 0 1 0 1-4 1-5 1 3 1-1 1-2 1-1 1 0 1-1 1-3 1 6 1 9 1 6 1 5 1-8 1 6 1-8 1-8 1-4 1 5 1 4 1-1 1 2 1 9 1 5 1-3 1 0 1-4 1-7 1 0 1 4 1 7 1 2 1-4 1-4 1 2 1 3 1 4 1 0 1-6 1-6 1 4 1 2 1-6 1-3 1 2 1-4 1-1 1 0 1-4 1 3 1 9 1-2 1-2 1 9 1 3 1 3 1-2 1-7 1 1 1-1 1-7 1 0 1 7 1-2 1-7 1-1 1 3 1 6 1 12 1 4 1-8 1-12 1-4 1 8 1 12 1-2 1-11 1 0 1 3 1-2 1-1 1 5 1 3 1 2 1 3 1-7 1-11 1-7 1 2 1 5 1 10 1-4 1 11 1-1 1-7 1-5 1-6 1-4 1 2 1 0 1 4 1 9 1 1 1-3 1-4 1-4 1 0 1 3 1-4 1-5 1 3 1 8 1 5 1 0 1-3 1 1 1 0 1-4 1 2 1 0 1-5 1-6 1-5 1 0 1 5 1 10 1 7 1-5 1-5 1-4 1-3 1 5 1 9 1-5 1-11 1 1 1 10 1-1 1-3 1 4 1 18 1-20 1 4 1 3 1-3 1 1 1 0 1 0 1 3 1-3 1-3 1-5 1-1 1 3 1 4 1 10 1 0 1-10 1-5 1 3 1 4 1-7 1-6 1 1 1 6 1 7 1-1 1-2 1 0 1 5 1 9 1 1 1 18 1-28 1 5 1-7 1-9 1 0 1 4 1-2 1-7 1 5 1 6 1 0 1-1 1 3 1 2 1 7 1 4 1-6 1-6 1-5 1-5 1-1 1-6 1-3 1 10 1 6 1-6 1-1 1 5 1 0 1 3 1-3 1-4 1-2 1-6 1 4 1 7 1 5 1 2 1-4 1 9 1-7 1 3 1 2 1 0 1-1 1 1 1-5 1-5 1 2 1 5 1 1 1-7 1-3 1 1 1 8 1 4 1-6 1-10 1-1 1 6 1 6 1 0 1-3 1-1 1-2 1-2 1-1 1 3 1 9 1 5 1-4 1-3 1 0 1-1 1 4 1 3 1-5 1-9 1 1 1 3 1 2 1-4 1-5 1 10 1 9 1-2 1-3 1-2 1-2 1 2 1 9 1 1 1-10 1-3 1 3 1 4 1 0 1-2 1-1 1 3 1 0 1-2 1-5 1-4 1 1 1-3 1 1 1 5 1 5 1 2 1-3 1-1 1-2 1-4 1-2 1-5 1-4 1 5 1 7 1-4 1-5 1 3 1 1 1 1 1 2 1 3 1 1 1-1 1 0 1 0 1 3 1 1 1 2 1 0 1-8 1-3 1 6 1 7 1 1 1-6 1-4 1 1 1 1 1 2 1 14 1-5 1-7 1-6 1-2 1-6 1-6 1 0 1 6 1 3 1-1 1 0 1 0 1 1 1 7 1 4 1-8 1-7 1 4 1 6 1 5 1 3 1 0 1-2 1-4 1-3 1-4 1 2 1 3 1-5 1-9 1 1 1 8 1 1 1-3 1 1 1 3 1 1 1-2 1 0 1 3 1 4 1 1 1-4 1-9 1 1 1 5 1-1 1-1 1 1 1 3 1 6 1 6 1-2 1-5 1-1 1-1 1-4 1-1 1 3 1 1 1-4 1 0 1 4 1 5 1 1 1-7 1 1 1-5 1-3 1-3 1 0 1 11 1 7 1-6 1-4 1 4 1-2 1-8 1 1 1 4 1 2 1 0 1-2 1-3 1 2 1 8 1 1 1-1 1-3 1-2 1 0 1 1 1-3 1 1 1 9 1-4 1-11 1-5 1 2 1 3 1 1 1 1 1-2 1 3 1 1 1-6 1-2 1 3 1 4 1 0 1 1 1 4 1 2 1-7 1-5 1 4 1 6 1 6 1 0 1-6 1-1 1 3 1-2 1 2 1 3 1-1 1 0 1 5 1-1 1-7 1-7 1-3 1 7 1 2 1-3 1-1 1 5 1 7 1-5 1-3 1 1 1-1 1 4 1 6 1 5 1 1 1-5 1-13 1-8 1 1 1 3 1 1 1 1 1 2 1 0 1-3 1 2 1 1 1 2 1-1 1-8 1-1 1 2 1 1 1-1 1 0 1 3 1 5 1-3 1-9 1-5 1 2 1 2 1 7 1 0 1-4 1 4 1 1 1 1 1 10 1 5 1-7 1-7 1-2 1 2 1 2 1 1 1 0 1-2 1-5 1-1 1 8 1 1 1-9 1-1 1-1 1 0 1 5 1 3 1 1 1-3 1-1 1 9 1 2 1-7 1-5 1-2 1 4 1 3 1 0 1 0 1 1 1-1 1-1 1 6 1-1 1 1 1 1 1 0 1-2 1-1 1-4 1-3 1 2 1 3 1-5 1-5 1 5 1-1 1 0 1 2" fill="none" stroke="#000" stroke-width="1" vector-effect="non-scaling-stroke" shape-rendering="crispEdges"/></svg>
<div style="left:157px;top:777px;width:977px;height:3px;background:#d0b870;background:linear-gradient(to bottom,#d8c47c,#bca860);"></div>
<div style="left:1024px;top:165px;width:99px;height:45px;background:#6a6a82;border-radius:4px;box-shadow:0 0 0 1px #f8e8a0;"></div>
<div style="left:1024px;top:165px;width:7px;height:45px;background:#3c9cff;border-radius:4px 0 0 4px;"></div>
<div style="left:1031px;top:165px;width:84px;height:45px;line-height:45px;font-size:28px;font-weight:bold;color:#000;text-align:center;white-space:nowrap;">0</div>
<div style="left:1029px;top:214px;width:1px;height:5px;background:#000;"></div>
<div style="left:1073px;top:214px;width:1px;height:5px;background:#000;"></div>
<div style="left:1118px;top:214px;width:1px;height:5px;background:#000;"></div>
<div style="left:1024px;top:221px;width:99px;height:45px;background:#6a6a82;border-radius:4px;box-shadow:0 0 0 1px #f8e8a0;"></div>
<div style="left:1024px;top:221px;width:7px;height:45px;background:#3c9cff;border-radius:4px 0 0 4px;"></div>
<div style="left:1031px;top:221px;width:84px;height:45px;line-height:45px;font-size:28px;font-weight:bold;color:#000;text-align:center;white-space:nowrap;">0</div>
<div style="left:1029px;top:270px;width:1px;height:5px;background:#000;"></div>
<div style="left:1073px;top:270px;width:1px;height:5px;background:#000;"></div>
<div style="left:1118px;top:270px;width:1px;height:5px;background:#000;"></div>
<div style="left:1024px;top:277px;width:99px;height:45px;background:#6a6a82;border-radius:4px;box-shadow:0 0 0 1px #f8e8a0;"></div>
<div style="left:1024px;top:277px;width:7px;height:45px;background:#3c9cff;border-radius:4px 0 0 4px;"></div>
<div style="left:1031px;top:277px;width:84px;height:45px;line-height:45px;font-size:28px;font-weight:bold;color:#000;text-align:center;white-space:nowrap;">0</div>
<div style="left:1029px;top:326px;width:1px;height:5px;background:#000;"></div>
<div style="left:1073px;top:326px;width:1px;height:5px;background:#000;"></div>
<div style="left:1118px;top:326px;width:1px;height:5px;background:#000;"></div>
<div style="left:1024px;top:333px;width:99px;height:45px;background:#6a6a82;border-radius:4px;box-shadow:0 0 0 1px #f8e8a0;"></div>
<div style="left:1024px;top:333px;width:7px;height:45px;background:#3c9cff;border-radius:4px 0 0 4px;"></div>
<div style="left:1031px;top:333px;width:84px;height:45px;line-height:45px;font-size:28px;font-weight:bold;color:#000;text-align:center;white-space:nowrap;">0</div>
<div style="left:1029px;top:382px;width:1px;height:5px;background:#000;"></div>
<div style="left:1073px;top:382px;width:1px;height:5px;background:#000;"></div>
<div style="left:1118px;top:382px;width:1px;height:5px;background:#000;"></div>
<div style="left:1024px;top:389px;width:99px;height:45px;background:#6a6a82;border-radius:4px;box-shadow:0 0 0 1px #f8e8a0;"></div>
<div style="left:1024px;top:389px;width:7px;height:45px;background:#3c9cff;border-radius:4px 0 0 4px;"></div>
<div style="left:1031px;top:389px;width:84px;height:45px;line-height:45px;font-size:28px;font-weight:bold;color:#000;text-align:center;white-space:nowrap;">0</div>
<div style="left:1029px;top:438px;width:1px;height:5px;background:#000;"></div>
<div style="left:1073px;top:438px;width:1px;height:5px;background:#000;"></div>
<div style="left:1118px;top:438px;width:1px;height:5px;background:#000;"></div>
<div style="left:1024px;top:445px;width:99px;height:45px;background:#6a6a82;border-radius:4px;box-shadow:0 0 0 1px #f8e8a0;"></div>
<div style="left:1024px;top:445px;width:7px;height:45px;background:#3c9cff;border-radius:4px 0 0 4px;"></div>
<div style="left:1031px;top:445px;width:84px;height:45px;line-height:45px;font-size:28px;font-weight:bold;color:#000;text-align:center;white-space:nowrap;">0</div>
<div style="left:1029px;top:494px;width:1px;height:5px;background:#000;"></div>
<div style="left:1073px;top:494px;width:1px;height:5px;background:#000;"></div>
<div style="left:1118px;top:494px;width:1px;height:5px;background:#000;"></div>
<div style="left:1024px;top:501px;width:99px;height:45px;background:#6a6a82;border-radius:4px;box-shadow:0 0 0 1px #f8e8a0;"></div>
<div style="left:1024px;top:501px;width:7px;height:45px;background:#3c9cff;border-radius:4px 0 0 4px;"></div>
<div style="left:1031px;top:501px;width:84px;height:45px;line-height:45px;font-size:28px;font-weight:bold;color:#000;text-align:center;white-space:nowrap;">0</div>
<div style="left:1029px;top:550px;width:1px;height:5px;background:#000;"></div>
<div style="left:1073px;top:550px;width:1px;height:5px;background:#000;"></div>
<div style="left:1118px;top:550px;width:1px;height:5px;background:#000;"></div>
<div style="left:1024px;top:557px;width:99px;height:45px;background:#6a6a82;border-radius:4px;box-shadow:0 0 0 1px #f8e8a0;"></div>
<div style="left:1024px;top:557px;width:7px;height:45px;background:#3c9cff;border-radius:4px 0 0 4px;"></div>
<div style="left:1031px;top:557px;width:84px;height:45px;line-height:45px;font-size:28px;font-weight:bold;color:#000;text-align:center;white-space:nowrap;">0</div>
<div style="left:1029px;top:606px;width:1px;height:5px;background:#000;"></div>
<div style="left:1073px;top:606px;width:1px;height:5px;background:#000;"></div>
<div style="left:1118px;top:606px;width:1px;height:5px;background:#000;"></div>
<div style="left:1024px;top:613px;width:99px;height:45px;background:#6a6a82;border-radius:4px;box-shadow:0 0 0 1px #f8e8a0;"></div>
<div style="left:1024px;top:613px;width:7px;height:45px;background:#3c9cff;border-radius:4px 0 0 4px;"></div>
<div style="left:1031px;top:613px;width:84px;height:45px;line-height:45px;font-size:28px;font-weight:bold;color:#000;text-align:center;white-space:nowrap;">0</div>
<div style="left:1029px;top:662px;width:1px;height:5px;background:#000;"></div>
<div style="left:1073px;top:662px;width:1px;height:5px;background:#000;"></div>
<div style="left:1118px;top:662px;width:1px;height:5px;background:#000;"></div>
<div style="left:1024px;top:669px;width:99px;height:45px;background:#6a6a82;border-radius:4px;box-shadow:0 0 0 1px #f8e8a0;"></div>
<div style="left:1024px;top:669px;width:7px;height:45px;background:#3c9cff;border-radius:4px 0 0 4px;"></div>
<div style="left:1031px;top:669px;width:84px;height:45px;line-height:45px;font-size:28px;font-weight:bold;color:#000;text-align:center;white-space:nowrap;">0</div>
<div style="left:1029px;top:718px;width:1px;height:5px;background:#000;"></div>
<div style="left:1073px;top:718px;width:1px;height:5px;background:#000;"></div>
<div style="left:1118px;top:718px;width:1px;height:5px;background:#000;"></div>
<div style="left:1024px;top:725px;width:99px;height:45px;background:#6a6a82;border-radius:4px;box-shadow:0 0 0 1px #f8e8a0;"></div>
<div style="left:1024px;top:725px;width:7px;height:45px;background:#3c9cff;border-radius:4px 0 0 4px;"></div>
<div style="left:1031px;top:725px;width:84px;height:45px;line-height:45px;font-size:28px;font-weight:bold;color:#000;text-align:center;white-space:nowrap;">0</div>
<div style="left:1029px;top:774px;width:1px;height:5px;background:#000;"></div>
<div style="left:1073px;top:774px;width:1px;height:5px;background:#000;"></div>
<div style="left:1118px;top:774px;width:1px;height:5px;background:#000;"></div>
<div style="left:2px;top:161px;width:155px;height:57px;background:#000;"></div>
<div style="left:3px;top:162px;width:153px;height:55px;background:#dcc478;"></div>
<div style="left:8px;top:166px;width:21px;height:46px;background:transparent;box-sizing:border-box;border:1px solid #3c9cff;"></div>
<div style="left:10px;top:168px;width:17px;height:42px;background:transparent;box-sizing:border-box;border:1px solid #3c9cff;"></div>
<div style="left:12px;top:170px;width:13px;height:38px;background:transparent;box-sizing:border-box;border:1px solid #3c9cff;"></div>
<div style="left:14px;top:172px;width:9px;height:34px;background:transparent;box-sizing:border-box;border:1px solid #3c9cff;"></div>
<div style="left:16px;top:174px;width:5px;height:30px;background:transparent;box-sizing:border-box;border:1px solid #3c9cff;"></div>
<div style="left:28px;top:166px;width:40px;height:16px;background:transparent;box-sizing:border-box;border:1px solid #3c9cff;"></div>
<div style="left:28px;top:168px;width:40px;height:16px;line-height:16px;font-size:11px;font-weight:bold;color:#000;text-align:center;white-space:nowrap;">1</div>
<div style="left:29px;top:182px;width:38px;height:3px;background:#ffff00;"></div>
<div style="left:28px;top:184px;width:40px;height:28px;background:#ffff00;box-sizing:border-box;border:1px solid #3c9cff;"></div>
<div style="left:28px;top:183px;width:40px;height:28px;line-height:28px;font-size:29px;font-weight:bold;color:#000;text-align:center;white-space:nowrap;">1</div>
<div style="left:67px;top:166px;width:36px;height:16px;background:transparent;box-sizing:border-box;border:1px solid #3c9cff;"></div>
<div style="left:67px;top:181px;width:36px;height:16px;background:transparent;box-sizing:border-box;border:1px solid #3c9cff;"></div>
<div style="left:67px;top:196px;width:36px;height:18px;background:transparent;box-sizing:border-box;border:1px solid #3c9cff;"></div>
<div style="left:67px;top:168px;width:32px;height:16px;line-height:16px;font-size:11px;font-weight:bold;color:#000;text-align:right;white-space:nowrap;">0</div>
<div style="left:67px;top:182.5px;width:32px;height:16px;line-height:16px;font-size:11px;font-weight:bold;color:#000;text-align:right;white-space:nowrap;">0</div>
<div style="left:67px;top:197px;width:32px;height:16px;line-height:16px;font-size:11px;font-weight:bold;color:#000;text-align:right;white-space:nowrap;">0.0&#8201;V</div>
<div style="left:102px;top:166px;width:50px;height:46px;background:transparent;box-sizing:border-box;border:1px solid #3c9cff;"></div>
<div style="left:102px;top:166px;width:44px;height:14px;line-height:14px;font-size:11px;font-weight:bold;color:#000;text-align:right;white-space:nowrap;">0.246</div>
<div style="left:102px;top:182px;width:40.5px;height:14px;line-height:14px;font-size:11px;font-weight:bold;color:#000;text-align:right;white-space:nowrap;">V</div>
<div style="left:102px;top:197px;width:44px;height:14px;line-height:14px;font-size:11px;font-weight:bold;color:#000;text-align:right;white-space:nowrap;">-7.128</div>
<div style="left:2px;top:217px;width:155px;height:57px;background:#000;"></div>
<div style="left:3px;top:218px;width:153px;height:55px;background:#dcc478;"></div>
<div style="left:8px;top:222px;width:21px;height:46px;background:transparent;box-sizing:border-box;border:1px solid #3c9cff;"></div>
<div style="left:10px;top:224px;width:17px;height:42px;background:transparent;box-sizing:border-box;border:1px solid #3c9cff;"></div>
<div style="left:12px;top:226px;width:13px;height:38px;background:transparent;box-sizing:border-box;border:1px solid #3c9cff;"></div>
<div style="left:14px;top:228px;width:9px;height:34px;background:transparent;box-sizing:border-box;border:1px solid #3c9cff;"></div>
<div style="left:16px;top:230px;width:5px;height:30px;background:transparent;box-sizing:border-box;border:1px solid #3c9cff;"></div>
<div style="left:28px;top:222px;width:40px;height:16px;background:transparent;box-sizing:border-box;border:1px solid #3c9cff;"></div>
<div style="left:28px;top:224px;width:40px;height:16px;line-height:16px;font-size:11px;font-weight:bold;color:#000;text-align:center;white-space:nowrap;">2</div>
<div style="left:29px;top:238px;width:38px;height:3px;background:#ffff00;"></div>
<div style="left:28px;top:240px;width:40px;height:28px;background:#ffff00;box-sizing:border-box;border:1px solid #3c9cff;"></div>
<div style="left:28px;top:239px;width:40px;height:28px;line-height:28px;font-size:29px;font-weight:bold;color:#000;text-align:center;white-space:nowrap;">2</div>
<div style="left:67px;top:222px;width:36px;height:16px;background:transparent;box-sizing:border-box;border:1px solid #3c9cff;"></div>
<div style="left:67px;top:237px;width:36px;height:16px;background:transparent;box-sizing:border-box;border:1px solid #3c9cff;"></div>
<div style="left:67px;top:252px;width:36px;height:18px;background:transparent;box-sizing:border-box;border:1px solid #3c9cff;"></div>
<div style="left:67px;top:224px;width:32px;height:16px;line-height:16px;font-size:11px;font-weight:bold;color:#000;text-align:right;white-space:nowrap;">0</div>
<div style="left:67px;top:238.5px;width:32px;height:16px;line-height:16px;font-size:11px;font-weight:bold;color:#000;text-align:right;white-space:nowrap;">0</div>
<div style="left:67px;top:253px;width:32px;height:16px;line-height:16px;font-size:11px;font-weight:bold;color:#000;text-align:right;white-space:nowrap;">0.0&#8201;V</div>
<div style="left:102px;top:222px;width:50px;height:46px;background:transparent;box-sizing:border-box;border:1px solid #3c9cff;"></div>
<div style="left:102px;top:222px;width:44px;height:14px;line-height:14px;font-size:11px;font-weight:bold;color:#000;text-align:right;white-space:nowrap;">17.113</div>
<div style="left:102px;top:238px;width:40.5px;height:14px;line-height:14px;font-size:11px;font-weight:bold;color:#000;text-align:right;white-space:nowrap;">mV</div>
<div style="left:102px;top:253px;width:44px;height:14px;line-height:14px;font-size:11px;font-weight:bold;color:#000;text-align:right;white-space:nowrap;">-13.125</div>
<div style="left:2px;top:273px;width:155px;height:57px;background:#000;"></div>
<div style="left:3px;top:274px;width:153px;height:55px;background:#dcc478;"></div>
<div style="left:8px;top:278px;width:21px;height:46px;background:transparent;box-sizing:border-box;border:1px solid #3c9cff;"></div>
<div style="left:10px;top:280px;width:17px;height:42px;background:transparent;box-sizing:border-box;border:1px solid #3c9cff;"></div>
<div style="left:12px;top:282px;width:13px;height:38px;background:transparent;box-sizing:border-box;border:1px solid #3c9cff;"></div>
<div style="left:14px;top:284px;width:9px;height:34px;background:transparent;box-sizing:border-box;border:1px solid #3c9cff;"></div>
<div style="left:16px;top:286px;width:5px;height:30px;background:transparent;box-sizing:border-box;border:1px solid #3c9cff;"></div>
<div style="left:28px;top:278px;width:40px;height:16px;background:transparent;box-sizing:border-box;border:1px solid #3c9cff;"></div>
<div style="left:28px;top:280px;width:40px;height:16px;line-height:16px;font-size:11px;font-weight:bold;color:#000;text-align:center;white-space:nowrap;">3</div>
<div style="left:29px;top:294px;width:38px;height:3px;background:#ffff00;"></div>
<div style="left:28px;top:296px;width:40px;height:28px;background:#ffff00;box-sizing:border-box;border:1px solid #3c9cff;"></div>
<div style="left:28px;top:295px;width:40px;height:28px;line-height:28px;font-size:29px;font-weight:bold;color:#000;text-align:center;white-space:nowrap;">3</div>
<div style="left:67px;top:278px;width:36px;height:16px;background:transparent;box-sizing:border-box;border:1px solid #3c9cff;"></div>
<div style="left:67px;top:293px;width:36px;height:16px;background:transparent;box-sizing:border-box;border:1px solid #3c9cff;"></div>
<div style="left:67px;top:308px;width:36px;height:18px;background:transparent;box-sizing:border-box;border:1px solid #3c9cff;"></div>
<div style="left:67px;top:280px;width:32px;height:16px;line-height:16px;font-size:11px;font-weight:bold;color:#000;text-align:right;white-space:nowrap;">0</div>
<div style="left:67px;top:294.5px;width:32px;height:16px;line-height:16px;font-size:11px;font-weight:bold;color:#000;text-align:right;white-space:nowrap;">0</div>
<div style="left:67px;top:309px;width:32px;height:16px;line-height:16px;font-size:11px;font-weight:bold;color:#000;text-align:right;white-space:nowrap;">0.0&#8201;V</div>
<div style="left:102px;top:278px;width:50px;height:46px;background:transparent;box-sizing:border-box;border:1px solid #3c9cff;"></div>
<div style="left:102px;top:278px;width:44px;height:14px;line-height:14px;font-size:11px;font-weight:bold;color:#000;text-align:right;white-space:nowrap;">2.786</div>
<div style="left:102px;top:294px;width:40.5px;height:14px;line-height:14px;font-size:11px;font-weight:bold;color:#000;text-align:right;white-space:nowrap;">mV</div>
<div style="left:102px;top:309px;width:44px;height:14px;line-height:14px;font-size:11px;font-weight:bold;color:#000;text-align:right;white-space:nowrap;">-2.162</div>
<div style="left:2px;top:329px;width:155px;height:57px;background:#000;"></div>
<div style="left:3px;top:330px;width:153px;height:55px;background:#dcc478;"></div>
<div style="left:8px;top:334px;width:21px;height:46px;background:transparent;box-sizing:border-box;border:1px solid #3c9cff;"></div>
<div style="left:10px;top:336px;width:17px;height:42px;background:transparent;box-sizing:border-box;border:1px solid #3c9cff;"></div>
<div style="left:12px;top:338px;width:13px;height:38px;background:transparent;box-sizing:border-box;border:1px solid #3c9cff;"></div>
<div style="left:14px;top:340px;width:9px;height:34px;background:transparent;box-sizing:border-box;border:1px solid #3c9cff;"></div>
<div style="left:16px;top:342px;width:5px;height:30px;background:transparent;box-sizing:border-box;border:1px solid #3c9cff;"></div>
<div style="left:28px;top:334px;width:40px;height:16px;background:transparent;box-sizing:border-box;border:1px solid #3c9cff;"></div>
<div style="left:28px;top:336px;width:40px;height:16px;line-height:16px;font-size:11px;font-weight:bold;color:#000;text-align:center;white-space:nowrap;">4</div>
<div style="left:29px;top:350px;width:38px;height:3px;background:#ffff00;"></div>
<div style="left:28px;top:352px;width:40px;height:28px;background:#ffff00;box-sizing:border-box;border:1px solid #3c9cff;"></div>
<div style="left:28px;top:351px;width:40px;height:28px;line-height:28px;font-size:29px;font-weight:bold;color:#000;text-align:center;white-space:nowrap;">4</div>
<div style="left:67px;top:334px;width:36px;height:16px;background:transparent;box-sizing:border-box;border:1px solid #3c9cff;"></div>
<div style="left:67px;top:349px;width:36px;height:16px;background:transparent;box-sizing:border-box;border:1px solid #3c9cff;"></div>
<div style="left:67px;top:364px;width:36px;height:18px;background:transparent;box-sizing:border-box;border:1px solid #3c9cff;"></div>
<div style="left:67px;top:336px;width:32px;height:16px;line-height:16px;font-size:11px;font-weight:bold;color:#000;text-align:right;white-space:nowrap;">0</div>
<div style="left:67px;top:350.5px;width:32px;height:16px;line-height:16px;font-size:11px;font-weight:bold;color:#000;text-align:right;white-space:nowrap;">0</div>
<div style="left:67px;top:365px;width:32px;height:16px;line-height:16px;font-size:11px;font-weight:bold;color:#000;text-align:right;white-space:nowrap;">0.0&#8201;V</div>
<div style="left:102px;top:334px;width:50px;height:46px;background:transparent;box-sizing:border-box;border:1px solid #3c9cff;"></div>
<div style="left:102px;top:334px;width:44px;height:14px;line-height:14px;font-size:11px;font-weight:bold;color:#000;text-align:right;white-space:nowrap;">11.744</div>
<div style="left:102px;top:350px;width:40.5px;height:14px;line-height:14px;font-size:11px;font-weight:bold;color:#000;text-align:right;white-space:nowrap;">mV</div>
<div style="left:102px;top:365px;width:44px;height:14px;line-height:14px;font-size:11px;font-weight:bold;color:#000;text-align:right;white-space:nowrap;">0.735</div>
<div style="left:2px;top:385px;width:155px;height:57px;background:#000;"></div>
<div style="left:3px;top:386px;width:153px;height:55px;background:#dcc478;"></div>
<div style="left:8px;top:390px;width:21px;height:46px;background:transparent;box-sizing:border-box;border:1px solid #3c9cff;"></div>
<div style="left:10px;top:392px;width:17px;height:42px;background:transparent;box-sizing:border-box;border:1px solid #3c9cff;"></div>
<div style="left:12px;top:394px;width:13px;height:38px;background:transparent;box-sizing:border-box;border:1px solid #3c9cff;"></div>
<div style="left:14px;top:396px;width:9px;height:34px;background:transparent;box-sizing:border-box;border:1px solid #3c9cff;"></div>
<div style="left:16px;top:398px;width:5px;height:30px;background:transparent;box-sizing:border-box;border:1px solid #3c9cff;"></div>
<div style="left:28px;top:390px;width:40px;height:16px;background:transparent;box-sizing:border-box;border:1px solid #3c9cff;"></div>
<div style="left:28px;top:392px;width:40px;height:16px;line-height:16px;font-size:11px;font-weight:bold;color:#000;text-align:center;white-space:nowrap;">5</div>
<div style="left:29px;top:406px;width:38px;height:3px;background:#ffff00;"></div>
<div style="left:28px;top:408px;width:40px;height:28px;background:#ffff00;box-sizing:border-box;border:1px solid #3c9cff;"></div>
<div style="left:28px;top:407px;width:40px;height:28px;line-height:28px;font-size:29px;font-weight:bold;color:#000;text-align:center;white-space:nowrap;">5</div>
<div style="left:67px;top:390px;width:36px;height:16px;background:transparent;box-sizing:border-box;border:1px solid #3c9cff;"></div>
<div style="left:67px;top:405px;width:36px;height:16px;background:transparent;box-sizing:border-box;border:1px solid #3c9cff;"></div>
<div style="left:67px;top:420px;width:36px;height:18px;background:transparent;box-sizing:border-box;border:1px solid #3c9cff;"></div>
<div style="left:67px;top:392px;width:32px;height:16px;line-height:16px;font-size:11px;font-weight:bold;color:#000;text-align:right;white-space:nowrap;">0</div>
<div style="left:67px;top:406.5px;width:32px;height:16px;line-height:16px;font-size:11px;font-weight:bold;color:#000;text-align:right;white-space:nowrap;">0</div>
<div style="left:67px;top:421px;width:32px;height:16px;line-height:16px;font-size:11px;font-weight:bold;color:#000;text-align:right;white-space:nowrap;">0.0&#8201;V</div>
<div style="left:102px;top:390px;width:50px;height:46px;background:transparent;box-sizing:border-box;border:1px solid #3c9cff;"></div>
<div style="left:102px;top:390px;width:44px;height:14px;line-height:14px;font-size:11px;font-weight:bold;color:#000;text-align:right;white-space:nowrap;">7.136</div>
<div style="left:102px;top:406px;width:40.5px;height:14px;line-height:14px;font-size:11px;font-weight:bold;color:#000;text-align:right;white-space:nowrap;">mV</div>
<div style="left:102px;top:421px;width:44px;height:14px;line-height:14px;font-size:11px;font-weight:bold;color:#000;text-align:right;white-space:nowrap;">-5.498</div>
<div style="left:2px;top:441px;width:155px;height:57px;background:#000;"></div>
<div style="left:3px;top:442px;width:153px;height:55px;background:#dcc478;"></div>
<div style="left:8px;top:446px;width:21px;height:46px;background:transparent;box-sizing:border-box;border:1px solid #3c9cff;"></div>
<div style="left:10px;top:448px;width:17px;height:42px;background:transparent;box-sizing:border-box;border:1px solid #3c9cff;"></div>
<div style="left:12px;top:450px;width:13px;height:38px;background:transparent;box-sizing:border-box;border:1px solid #3c9cff;"></div>
<div style="left:14px;top:452px;width:9px;height:34px;background:transparent;box-sizing:border-box;border:1px solid #3c9cff;"></div>
<div style="left:16px;top:454px;width:5px;height:30px;background:transparent;box-sizing:border-box;border:1px solid #3c9cff;"></div>
<div style="left:28px;top:446px;width:40px;height:16px;background:transparent;box-sizing:border-box;border:1px solid #3c9cff;"></div>
<div style="left:28px;top:448px;width:40px;height:16px;line-height:16px;font-size:11px;font-weight:bold;color:#000;text-align:center;white-space:nowrap;">6</div>
<div style="left:29px;top:462px;width:38px;height:3px;background:#ffff00;"></div>
<div style="left:28px;top:464px;width:40px;height:28px;background:#ffff00;box-sizing:border-box;border:1px solid #3c9cff;"></div>
<div style="left:28px;top:463px;width:40px;height:28px;line-height:28px;font-size:29px;font-weight:bold;color:#000;text-align:center;white-space:nowrap;">6</div>
<div style="left:67px;top:446px;width:36px;height:16px;background:transparent;box-sizing:border-box;border:1px solid #3c9cff;"></div>
<div style="left:67px;top:461px;width:36px;height:16px;background:transparent;box-sizing:border-box;border:1px solid #3c9cff;"></div>
<div style="left:67px;top:476px;width:36px;height:18px;background:transparent;box-sizing:border-box;border:1px solid #3c9cff;"></div>
<div style="left:67px;top:448px;width:32px;height:16px;line-height:16px;font-size:11px;font-weight:bold;color:#000;text-align:right;white-space:nowrap;">0</div>
<div style="left:67px;top:462.5px;width:32px;height:16px;line-height:16px;font-size:11px;font-weight:bold;color:#000;text-align:right;white-space:nowrap;">0</div>
<div style="left:67px;top:477px;width:32px;height:16px;line-height:16px;font-size:11px;font-weight:bold;color:#000;text-align:right;white-space:nowrap;">0.0&#8201;V</div>
<div style="left:102px;top:446px;width:50px;height:46px;background:transparent;box-sizing:border-box;border:1px solid #3c9cff;"></div>
<div style="left:102px;top:446px;width:44px;height:14px;line-height:14px;font-size:11px;font-weight:bold;color:#000;text-align:right;white-space:nowrap;">-53.060</div>
<div style="left:102px;top:462px;width:40.5px;height:14px;line-height:14px;font-size:11px;font-weight:bold;color:#000;text-align:right;white-space:nowrap;">mV</div>
<div style="left:102px;top:477px;width:44px;height:14px;line-height:14px;font-size:11px;font-weight:bold;color:#000;text-align:right;white-space:nowrap;">-55.483</div>
<div style="left:2px;top:497px;width:155px;height:57px;background:#000;"></div>
<div style="left:3px;top:498px;width:153px;height:55px;background:#dcc478;"></div>
<div style="left:8px;top:502px;width:21px;height:46px;background:transparent;box-sizing:border-box;border:1px solid #3c9cff;"></div>
<div style="left:10px;top:504px;width:17px;height:42px;background:transparent;box-sizing:border-box;border:1px solid #3c9cff;"></div>
<div style="left:12px;top:506px;width:13px;height:38px;background:transparent;box-sizing:border-box;border:1px solid #3c9cff;"></div>
<div style="left:14px;top:508px;width:9px;height:34px;background:transparent;box-sizing:border-box;border:1px solid #3c9cff;"></div>
<div style="left:16px;top:510px;width:5px;height:30px;background:transparent;box-sizing:border-box;border:1px solid #3c9cff;"></div>
<div style="left:28px;top:502px;width:40px;height:16px;background:transparent;box-sizing:border-box;border:1px solid #3c9cff;"></div>
<div style="left:28px;top:504px;width:40px;height:16px;line-height:16px;font-size:11px;font-weight:bold;color:#000;text-align:center;white-space:nowrap;">7</div>
<div style="left:29px;top:518px;width:38px;height:3px;background:#ffff00;"></div>
<div style="left:28px;top:520px;width:40px;height:28px;background:#ffff00;box-sizing:border-box;border:1px solid #3c9cff;"></div>
<div style="left:28px;top:519px;width:40px;height:28px;line-height:28px;font-size:29px;font-weight:bold;color:#000;text-align:center;white-space:nowrap;">7</div>
<div style="left:67px;top:502px;width:36px;height:16px;background:transparent;box-sizing:border-box;border:1px solid #3c9cff;"></div>
<div style="left:67px;top:517px;width:36px;height:16px;background:transparent;box-sizing:border-box;border:1px solid #3c9cff;"></div>
<div style="left:67px;top:532px;width:36px;height:18px;background:transparent;box-sizing:border-box;border:1px solid #3c9cff;"></div>
<div style="left:67px;top:504px;width:32px;height:16px;line-height:16px;font-size:11px;font-weight:bold;color:#000;text-align:right;white-space:nowrap;">0</div>
<div style="left:67px;top:518.5px;width:32px;height:16px;line-height:16px;font-size:11px;font-weight:bold;color:#000;text-align:right;white-space:nowrap;">0</div>
<div style="left:67px;top:533px;width:32px;height:16px;line-height:16px;font-size:11px;font-weight:bold;color:#000;text-align:right;white-space:nowrap;">0.0&#8201;V</div>
<div style="left:102px;top:502px;width:50px;height:46px;background:transparent;box-sizing:border-box;border:1px solid #3c9cff;"></div>
<div style="left:102px;top:502px;width:44px;height:14px;line-height:14px;font-size:11px;font-weight:bold;color:#000;text-align:right;white-space:nowrap;">4.112</div>
<div style="left:102px;top:518px;width:40.5px;height:14px;line-height:14px;font-size:11px;font-weight:bold;color:#000;text-align:right;white-space:nowrap;">mV</div>
<div style="left:102px;top:533px;width:44px;height:14px;line-height:14px;font-size:11px;font-weight:bold;color:#000;text-align:right;white-space:nowrap;">-1.992</div>
<div style="left:2px;top:553px;width:155px;height:57px;background:#000;"></div>
<div style="left:3px;top:554px;width:153px;height:55px;background:#dcc478;"></div>
<div style="left:8px;top:558px;width:21px;height:46px;background:transparent;box-sizing:border-box;border:1px solid #3c9cff;"></div>
<div style="left:10px;top:560px;width:17px;height:42px;background:transparent;box-sizing:border-box;border:1px solid #3c9cff;"></div>
<div style="left:12px;top:562px;width:13px;height:38px;background:transparent;box-sizing:border-box;border:1px solid #3c9cff;"></div>
<div style="left:14px;top:564px;width:9px;height:34px;background:transparent;box-sizing:border-box;border:1px solid #3c9cff;"></div>
<div style="left:16px;top:566px;width:5px;height:30px;background:transparent;box-sizing:border-box;border:1px solid #3c9cff;"></div>
<div style="left:28px;top:558px;width:40px;height:16px;background:transparent;box-sizing:border-box;border:1px solid #3c9cff;"></div>
<div style="left:28px;top:560px;width:40px;height:16px;line-height:16px;font-size:11px;font-weight:bold;color:#000;text-align:center;white-space:nowrap;">8</div>
<div style="left:29px;top:574px;width:38px;height:3px;background:#ffff00;"></div>
<div style="left:28px;top:576px;width:40px;height:28px;background:#ffff00;box-sizing:border-box;border:1px solid #3c9cff;"></div>
<div style="left:28px;top:575px;width:40px;height:28px;line-height:28px;font-size:29px;font-weight:bold;color:#000;text-align:center;white-space:nowrap;">8</div>
<div style="left:67px;top:558px;width:36px;height:16px;background:transparent;box-sizing:border-box;border:1px solid #3c9cff;"></div>
<div style="left:67px;top:573px;width:36px;height:16px;background:transparent;box-sizing:border-box;border:1px solid #3c9cff;"></div>
<div style="left:67px;top:588px;width:36px;height:18px;background:transparent;box-sizing:border-box;border:1px solid #3c9cff;"></div>
<div style="left:67px;top:560px;width:32px;height:16px;line-height:16px;font-size:11px;font-weight:bold;color:#000;text-align:right;white-space:nowrap;">0</div>
<div style="left:67px;top:574.5px;width:32px;height:16px;line-height:16px;font-size:11px;font-weight:bold;color:#000;text-align:right;white-space:nowrap;">0</div>
<div style="left:67px;top:589px;width:32px;height:16px;line-height:16px;font-size:11px;font-weight:bold;color:#000;text-align:right;white-space:nowrap;">0.0&#8201;V</div>
<div style="left:102px;top:558px;width:50px;height:46px;background:transparent;box-sizing:border-box;border:1px solid #3c9cff;"></div>
<div style="left:102px;top:558px;width:44px;height:14px;line-height:14px;font-size:11px;font-weight:bold;color:#000;text-align:right;white-space:nowrap;">2.707</div>
<div style="left:102px;top:574px;width:40.5px;height:14px;line-height:14px;font-size:11px;font-weight:bold;color:#000;text-align:right;white-space:nowrap;">mV</div>
<div style="left:102px;top:589px;width:44px;height:14px;line-height:14px;font-size:11px;font-weight:bold;color:#000;text-align:right;white-space:nowrap;">2.228</div>
<div style="left:2px;top:609px;width:155px;height:57px;background:#000;"></div>
<div style="left:3px;top:610px;width:153px;height:55px;background:#dcc478;"></div>
<div style="left:8px;top:614px;width:21px;height:46px;background:transparent;box-sizing:border-box;border:1px solid #3c9cff;"></div>
<div style="left:10px;top:616px;width:17px;height:42px;background:transparent;box-sizing:border-box;border:1px solid #3c9cff;"></div>
<div style="left:12px;top:618px;width:13px;height:38px;background:transparent;box-sizing:border-box;border:1px solid #3c9cff;"></div>
<div style="left:14px;top:620px;width:9px;height:34px;background:transparent;box-sizing:border-box;border:1px solid #3c9cff;"></div>
<div style="left:16px;top:622px;width:5px;height:30px;background:transparent;box-sizing:border-box;border:1px solid #3c9cff;"></div>
<div style="left:28px;top:614px;width:40px;height:16px;background:transparent;box-sizing:border-box;border:1px solid #3c9cff;"></div>
<div style="left:28px;top:616px;width:40px;height:16px;line-height:16px;font-size:11px;font-weight:bold;color:#000;text-align:center;white-space:nowrap;">9</div>
<div style="left:29px;top:630px;width:38px;height:3px;background:#ffff00;"></div>
<div style="left:28px;top:632px;width:40px;height:28px;background:#ffff00;box-sizing:border-box;border:1px solid #3c9cff;"></div>
<div style="left:28px;top:631px;width:40px;height:28px;line-height:28px;font-size:29px;font-weight:bold;color:#000;text-align:center;white-space:nowrap;">9</div>
<div style="left:67px;top:614px;width:36px;height:16px;background:transparent;box-sizing:border-box;border:1px solid #3c9cff;"></div>
<div style="left:67px;top:629px;width:36px;height:16px;background:transparent;box-sizing:border-box;border:1px solid #3c9cff;"></div>
<div style="left:67px;top:644px;width:36px;height:18px;background:transparent;box-sizing:border-box;border:1px solid #3c9cff;"></div>
<div style="left:67px;top:616px;width:32px;height:16px;line-height:16px;font-size:11px;font-weight:bold;color:#000;text-align:right;white-space:nowrap;">0</div>
<div style="left:67px;top:630.5px;width:32px;height:16px;line-height:16px;font-size:11px;font-weight:bold;color:#000;text-align:right;white-space:nowrap;">0</div>
<div style="left:67px;top:645px;width:32px;height:16px;line-height:16px;font-size:11px;font-weight:bold;color:#000;text-align:right;white-space:nowrap;">0.0&#8201;V</div>
<div style="left:102px;top:614px;width:50px;height:46px;background:transparent;box-sizing:border-box;border:1px solid #3c9cff;"></div>
<div style="left:102px;top:614px;width:44px;height:14px;line-height:14px;font-size:11px;font-weight:bold;color:#000;text-align:right;white-space:nowrap;">3.746</div>
<div style="left:102px;top:630px;width:40.5px;height:14px;line-height:14px;font-size:11px;font-weight:bold;color:#000;text-align:right;white-space:nowrap;">mV</div>
<div style="left:102px;top:645px;width:44px;height:14px;line-height:14px;font-size:11px;font-weight:bold;color:#000;text-align:right;white-space:nowrap;">0.648</div>
<div style="left:2px;top:665px;width:155px;height:57px;background:#000;"></div>
<div style="left:3px;top:666px;width:153px;height:55px;background:#dcc478;"></div>
<div style="left:8px;top:670px;width:21px;height:46px;background:transparent;box-sizing:border-box;border:1px solid #3c9cff;"></div>
<div style="left:10px;top:672px;width:17px;height:42px;background:transparent;box-sizing:border-box;border:1px solid #3c9cff;"></div>
<div style="left:12px;top:674px;width:13px;height:38px;background:transparent;box-sizing:border-box;border:1px solid #3c9cff;"></div>
<div style="left:14px;top:676px;width:9px;height:34px;background:transparent;box-sizing:border-box;border:1px solid #3c9cff;"></div>
<div style="left:16px;top:678px;width:5px;height:30px;background:transparent;box-sizing:border-box;border:1px solid #3c9cff;"></div>
<div style="left:28px;top:670px;width:40px;height:16px;background:transparent;box-sizing:border-box;border:1px solid #3c9cff;"></div>
<div style="left:28px;top:672px;width:40px;height:16px;line-height:16px;font-size:11px;font-weight:bold;color:#000;text-align:center;white-space:nowrap;">10</div>
<div style="left:29px;top:686px;width:38px;height:3px;background:#ffff00;"></div>
<div style="left:28px;top:688px;width:40px;height:28px;background:#ffff00;box-sizing:border-box;border:1px solid #3c9cff;"></div>
<div style="left:28px;top:687px;width:40px;height:28px;line-height:28px;font-size:29px;font-weight:bold;color:#000;text-align:center;white-space:nowrap;">10</div>
<div style="left:67px;top:670px;width:36px;height:16px;background:transparent;box-sizing:border-box;border:1px solid #3c9cff;"></div>
<div style="left:67px;top:685px;width:36px;height:16px;background:transparent;box-sizing:border-box;border:1px solid #3c9cff;"></div>
<div style="left:67px;top:700px;width:36px;height:18px;background:transparent;box-sizing:border-box;border:1px solid #3c9cff;"></div>
<div style="left:67px;top:672px;width:32px;height:16px;line-height:16px;font-size:11px;font-weight:bold;color:#000;text-align:right;white-space:nowrap;">0</div>
<div style="left:67px;top:686.5px;width:32px;height:16px;line-height:16px;font-size:11px;font-weight:bold;color:#000;text-align:right;white-space:nowrap;">0</div>
<div style="left:67px;top:701px;width:32px;height:16px;line-height:16px;font-size:11px;font-weight:bold;color:#000;text-align:right;white-space:nowrap;">0.0&#8201;V</div>
<div style="left:102px;top:670px;width:50px;height:46px;background:transparent;box-sizing:border-box;border:1px solid #3c9cff;"></div>
<div style="left:102px;top:670px;width:44px;height:14px;line-height:14px;font-size:11px;font-weight:bold;color:#000;text-align:right;white-space:nowrap;">3.355</div>
<div style="left:102px;top:686px;width:40.5px;height:14px;line-height:14px;font-size:11px;font-weight:bold;color:#000;text-align:right;white-space:nowrap;">mV</div>
<div style="left:102px;top:701px;width:44px;height:14px;line-height:14px;font-size:11px;font-weight:bold;color:#000;text-align:right;white-space:nowrap;">0.276</div>
<div style="left:2px;top:721px;width:155px;height:57px;background:#000;"></div>
<div style="left:3px;top:722px;width:153px;height:55px;background:#dcc478;"></div>
<div style="left:8px;top:726px;width:21px;height:46px;background:transparent;box-sizing:border-box;border:1px solid #3c9cff;"></div>
<div style="left:10px;top:728px;width:17px;height:42px;background:transparent;box-sizing:border-box;border:1px solid #3c9cff;"></div>
<div style="left:12px;top:730px;width:13px;height:38px;background:transparent;box-sizing:border-box;border:1px solid #3c9cff;"></div>
<div style="left:14px;top:732px;width:9px;height:34px;background:transparent;box-sizing:border-box;border:1px solid #3c9cff;"></div>
<div style="left:16px;top:734px;width:5px;height:30px;background:transparent;box-sizing:border-box;border:1px solid #3c9cff;"></div>
<div style="left:28px;top:726px;width:40px;height:16px;background:transparent;box-sizing:border-box;border:1px solid #3c9cff;"></div>
<div style="left:28px;top:728px;width:40px;height:16px;line-height:16px;font-size:11px;font-weight:bold;color:#000;text-align:center;white-space:nowrap;">11</div>
<div style="left:29px;top:742px;width:38px;height:3px;background:#ffff00;"></div>
<div style="left:28px;top:744px;width:40px;height:28px;background:#ffff00;box-sizing:border-box;border:1px solid #3c9cff;"></div>
<div style="left:28px;top:743px;width:40px;height:28px;line-height:28px;font-size:29px;font-weight:bold;color:#000;text-align:center;white-space:nowrap;">11</div>
<div style="left:67px;top:726px;width:36px;height:16px;background:transparent;box-sizing:border-box;border:1px solid #3c9cff;"></div>
<div style="left:67px;top:741px;width:36px;height:16px;background:transparent;box-sizing:border-box;border:1px solid #3c9cff;"></div>
<div style="left:67px;top:756px;width:36px;height:18px;background:transparent;box-sizing:border-box;border:1px solid #3c9cff;"></div>
<div style="left:67px;top:728px;width:32px;height:16px;line-height:16px;font-size:11px;font-weight:bold;color:#000;text-align:right;white-space:nowrap;">0</div>
<div style="left:67px;top:742.5px;width:32px;height:16px;line-height:16px;font-size:11px;font-weight:bold;color:#000;text-align:right;white-space:nowrap;">0</div>
<div style="left:67px;top:757px;width:32px;height:16px;line-height:16px;font-size:11px;font-weight:bold;color:#000;text-align:right;white-space:nowrap;">0.0&#8201;V</div>
<div style="left:102px;top:726px;width:50px;height:46px;background:transparent;box-sizing:border-box;border:1px solid #3c9cff;"></div>
<div style="left:102px;top:726px;width:44px;height:14px;line-height:14px;font-size:11px;font-weight:bold;color:#000;text-align:right;white-space:nowrap;">0.000</div>
<div style="left:102px;top:742px;width:40.5px;height:14px;line-height:14px;font-size:11px;font-weight:bold;color:#000;text-align:right;white-space:nowrap;"></div>
<div style="left:102px;top:757px;width:44px;height:14px;line-height:14px;font-size:11px;font-weight:bold;color:#000;text-align:right;white-space:nowrap;">0.000</div>
<div style="left:2px;top:777px;width:155px;height:1px;background:#000;"></div>
</body></html>
